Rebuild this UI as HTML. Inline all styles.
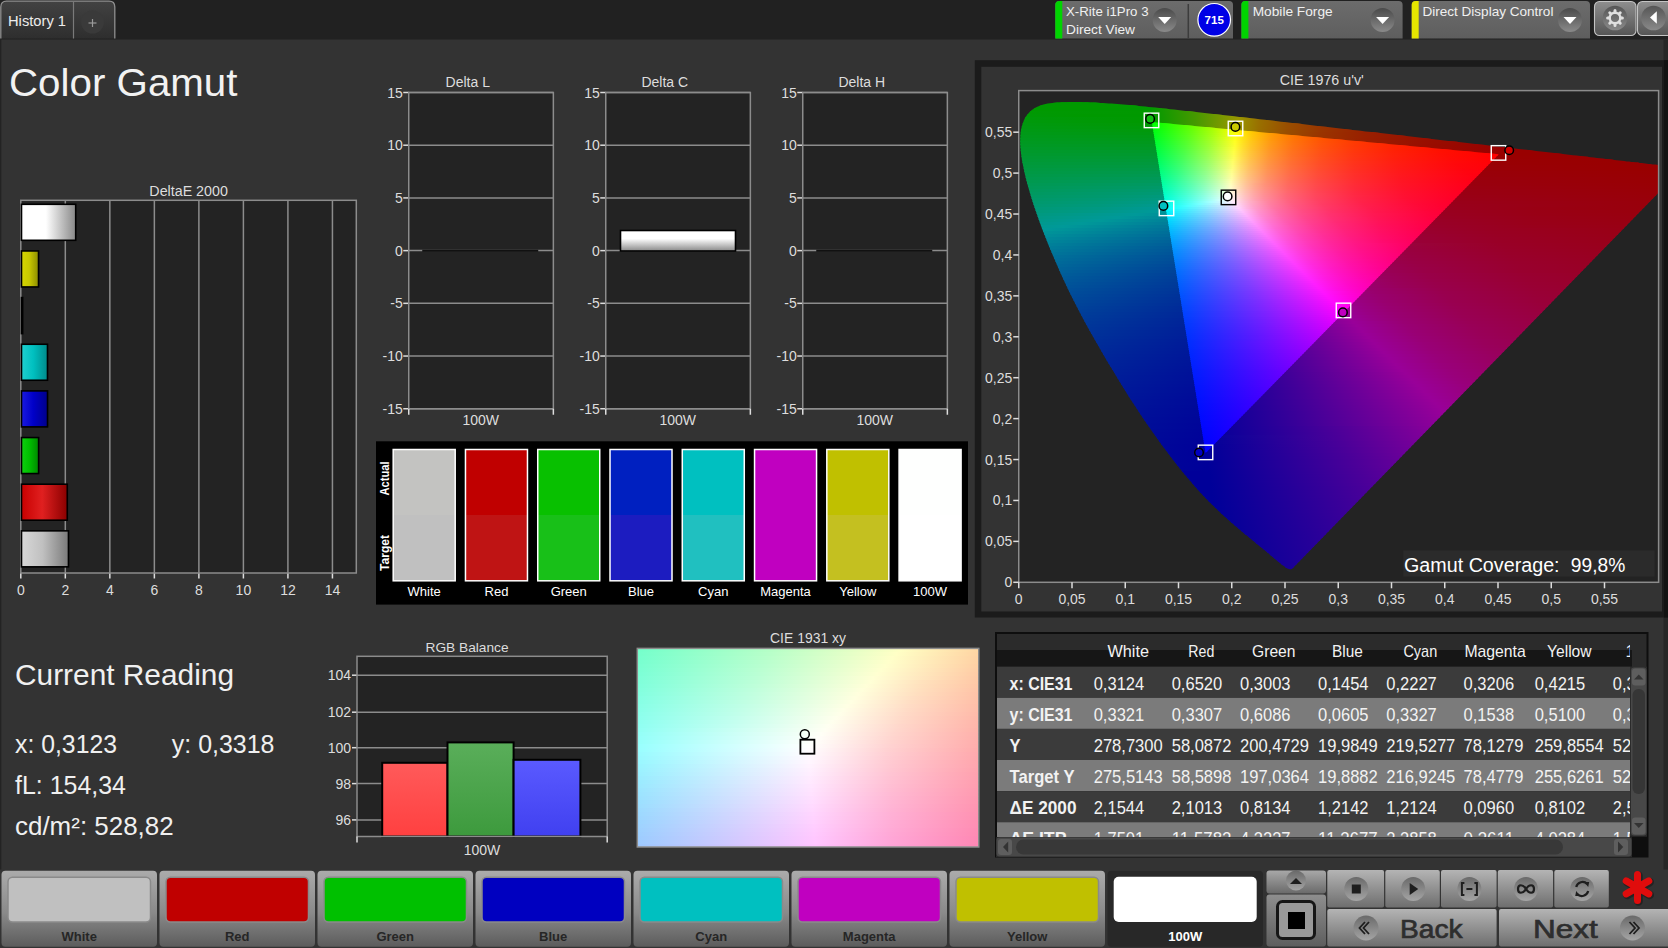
<!DOCTYPE html>
<html><head><meta charset="utf-8"><style>html,body{margin:0;padding:0;background:#333;overflow:hidden}svg{display:block}text{font-family:"Liberation Sans",sans-serif}</style></head>
<body><svg width="1668" height="948" viewBox="0 0 1668 948" font-family="Liberation Sans, sans-serif">
<defs><linearGradient id="g1" x1="0" y1="0" x2="0" y2="1"><stop offset="0" stop-color="#424242"/><stop offset="1" stop-color="#2e2e2e"/></linearGradient><linearGradient id="g2" x1="0" y1="0" x2="0" y2="1"><stop offset="0" stop-color="#6c6c6c"/><stop offset="1" stop-color="#5e5e5e"/></linearGradient><linearGradient id="g3" x1="0" y1="0" x2="0" y2="1"><stop offset="0" stop-color="#4a4a4a"/><stop offset="1" stop-color="#8a8a8a"/></linearGradient><linearGradient id="g4" x1="0" y1="0" x2="0" y2="1"><stop offset="0" stop-color="#6c6c6c"/><stop offset="1" stop-color="#5e5e5e"/></linearGradient><linearGradient id="g5" x1="0" y1="0" x2="0" y2="1"><stop offset="0" stop-color="#4a4a4a"/><stop offset="1" stop-color="#8a8a8a"/></linearGradient><linearGradient id="g6" x1="0" y1="0" x2="0" y2="1"><stop offset="0" stop-color="#6c6c6c"/><stop offset="1" stop-color="#5e5e5e"/></linearGradient><linearGradient id="g7" x1="0" y1="0" x2="0" y2="1"><stop offset="0" stop-color="#4a4a4a"/><stop offset="1" stop-color="#8a8a8a"/></linearGradient><linearGradient id="g8" x1="0" y1="0" x2="0" y2="1"><stop offset="0" stop-color="#8e8e8e"/><stop offset="1" stop-color="#555555"/></linearGradient><linearGradient id="g9" x1="0" y1="0" x2="0" y2="1"><stop offset="0" stop-color="#555"/><stop offset="1" stop-color="#8a8a8a"/></linearGradient><linearGradient id="g10" x1="0" y1="0" x2="1" y2="0"><stop offset="0" stop-color="#ffffff"/><stop offset="0.45" stop-color="#ffffff"/><stop offset="1" stop-color="#888888"/></linearGradient><linearGradient id="g11" x1="0" y1="0" x2="1" y2="0"><stop offset="0" stop-color="#d6d600"/><stop offset="0.45" stop-color="#c8c800"/><stop offset="1" stop-color="#8c8c00"/></linearGradient><linearGradient id="g12" x1="0" y1="0" x2="1" y2="0"><stop offset="0" stop-color="#c000c0"/><stop offset="0.45" stop-color="#c000c0"/><stop offset="1" stop-color="#800080"/></linearGradient><linearGradient id="g13" x1="0" y1="0" x2="1" y2="0"><stop offset="0" stop-color="#20d0d0"/><stop offset="0.45" stop-color="#00c0c0"/><stop offset="1" stop-color="#008a8a"/></linearGradient><linearGradient id="g14" x1="0" y1="0" x2="1" y2="0"><stop offset="0" stop-color="#1a1ae0"/><stop offset="0.45" stop-color="#0000c8"/><stop offset="1" stop-color="#00008a"/></linearGradient><linearGradient id="g15" x1="0" y1="0" x2="1" y2="0"><stop offset="0" stop-color="#10d010"/><stop offset="0.45" stop-color="#00c000"/><stop offset="1" stop-color="#008800"/></linearGradient><linearGradient id="g16" x1="0" y1="0" x2="1" y2="0"><stop offset="0" stop-color="#c80000"/><stop offset="0.45" stop-color="#e02020"/><stop offset="1" stop-color="#8a0000"/></linearGradient><linearGradient id="g17" x1="0" y1="0" x2="1" y2="0"><stop offset="0" stop-color="#d8d8d8"/><stop offset="0.45" stop-color="#c0c0c0"/><stop offset="1" stop-color="#7a7a7a"/></linearGradient><linearGradient id="g18" x1="0" y1="0" x2="0" y2="1"><stop offset="0" stop-color="#ffffff"/><stop offset="0.4" stop-color="#ffffff"/><stop offset="1" stop-color="#8a8a8a"/></linearGradient><linearGradient id="g19" x1="0" y1="0" x2="0" y2="1"><stop offset="0" stop-color="#ff5a5a"/><stop offset="1" stop-color="#ff4040"/></linearGradient><linearGradient id="g20" x1="0" y1="0" x2="0" y2="1"><stop offset="0" stop-color="#5aae5a"/><stop offset="1" stop-color="#3d9a3d"/></linearGradient><linearGradient id="g21" x1="0" y1="0" x2="0" y2="1"><stop offset="0" stop-color="#5a5aff"/><stop offset="1" stop-color="#4040f0"/></linearGradient><clipPath id="tclip"><rect x="996.5" y="634" width="633.5" height="203.2"/></clipPath><clipPath id="hclip"><rect x="995" y="632" width="637" height="40"/></clipPath><linearGradient id="g22" x1="0" y1="0" x2="0" y2="1"><stop offset="0" stop-color="#ababab"/><stop offset="0.55" stop-color="#8a8a8a"/><stop offset="1" stop-color="#5c5c5c"/></linearGradient><linearGradient id="g23" x1="0" y1="0" x2="0" y2="1"><stop offset="0" stop-color="#a8a8a8"/><stop offset="1" stop-color="#6a6a6a"/></linearGradient><linearGradient id="g24" x1="0" y1="0" x2="0" y2="1"><stop offset="0" stop-color="#8e8e8e"/><stop offset="1" stop-color="#5e5e5e"/></linearGradient><linearGradient id="g25" x1="0" y1="0" x2="0" y2="1"><stop offset="0" stop-color="#5a5a5a"/><stop offset="1" stop-color="#b0b0b0"/></linearGradient><linearGradient id="g26" x1="0" y1="0" x2="0" y2="1"><stop offset="0" stop-color="#b4b4b4"/><stop offset="1" stop-color="#6e6e6e"/></linearGradient><clipPath id="plotclip"><rect x="1018.75" y="90.6" width="639.8499999999999" height="491.69999999999993"/></clipPath><clipPath id="locus"><path d="M1292.2 568.7 L1292.2 568.7 L1292.2 568.8 L1292.1 568.8 L1292.0 568.9 L1291.9 568.9 L1291.8 569.0 L1291.7 569.0 L1291.6 569.1 L1291.5 569.1 L1291.4 569.2 L1291.2 569.2 L1291.1 569.3 L1290.9 569.3 L1290.7 569.3 L1290.6 569.3 L1290.4 569.3 L1290.1 569.3 L1289.8 569.3 L1289.5 569.2 L1289.1 569.1 L1288.7 569.0 L1288.2 568.8 L1287.8 568.7 L1287.4 568.5 L1286.9 568.2 L1286.5 568.0 L1286.0 567.7 L1285.6 567.4 L1285.1 567.0 L1284.6 566.6 L1284.0 566.2 L1283.5 565.8 L1282.9 565.4 L1282.3 564.9 L1281.6 564.4 L1280.9 563.8 L1280.1 563.2 L1279.2 562.5 L1278.4 561.8 L1277.4 561.0 L1276.5 560.3 L1275.5 559.4 L1274.5 558.6 L1273.4 557.7 L1272.3 556.7 L1271.1 555.7 L1269.9 554.7 L1268.7 553.6 L1267.4 552.6 L1266.1 551.5 L1264.7 550.3 L1263.2 549.1 L1261.7 547.9 L1260.1 546.6 L1258.4 545.2 L1256.6 543.7 L1254.8 542.2 L1252.9 540.6 L1250.9 539.0 L1248.9 537.3 L1246.8 535.6 L1244.6 533.9 L1242.4 532.0 L1240.1 530.1 L1237.8 528.1 L1235.3 526.0 L1232.8 523.8 L1230.1 521.5 L1227.4 519.1 L1224.6 516.5 L1221.7 513.9 L1218.7 511.0 L1215.6 508.1 L1212.5 505.1 L1209.3 501.9 L1206.0 498.5 L1202.4 494.8 L1198.7 490.7 L1194.7 486.2 L1190.5 481.3 L1186.2 476.2 L1181.6 470.7 L1177.0 464.9 L1172.2 458.7 L1167.3 452.3 L1162.2 445.4 L1157.0 438.3 L1151.7 430.8 L1146.3 423.1 L1140.9 415.0 L1135.4 406.6 L1129.7 397.9 L1124.0 388.8 L1118.3 379.5 L1112.6 370.1 L1106.9 360.7 L1101.3 351.1 L1095.7 341.3 L1090.1 331.4 L1084.6 321.4 L1079.3 311.6 L1074.3 301.8 L1069.5 292.2 L1064.9 282.5 L1060.5 272.9 L1056.4 263.5 L1052.4 254.3 L1048.7 245.4 L1045.3 236.8 L1042.0 228.4 L1039.0 220.3 L1036.3 212.4 L1033.7 204.9 L1031.4 197.8 L1029.4 191.1 L1027.6 184.7 L1026.0 178.7 L1024.6 172.9 L1023.5 167.5 L1022.4 162.4 L1021.6 157.6 L1021.0 153.1 L1020.6 148.9 L1020.3 145.0 L1020.2 141.3 L1020.3 137.8 L1020.5 134.4 L1020.8 131.3 L1021.3 128.4 L1022.0 125.7 L1022.8 123.2 L1023.7 120.9 L1024.7 118.6 L1025.9 116.6 L1027.3 114.8 L1028.7 113.1 L1030.2 111.5 L1031.8 110.1 L1033.5 108.9 L1035.3 107.8 L1037.3 106.8 L1039.2 106.0 L1041.3 105.3 L1043.4 104.6 L1045.5 104.1 L1047.7 103.6 L1050.0 103.3 L1052.3 103.0 L1054.7 102.8 L1057.1 102.6 L1059.5 102.4 L1062.0 102.3 L1064.5 102.2 L1067.0 102.2 L1069.5 102.1 L1072.1 102.1 L1074.6 102.1 L1077.1 102.1 L1079.6 102.1 L1082.1 102.2 L1084.7 102.2 L1087.3 102.3 L1089.9 102.4 L1092.5 102.5 L1095.1 102.6 L1097.7 102.7 L1100.4 102.9 L1103.1 103.0 L1105.9 103.2 L1108.7 103.4 L1111.5 103.6 L1114.4 103.8 L1117.3 104.0 L1120.2 104.3 L1123.2 104.5 L1126.2 104.8 L1129.3 105.0 L1132.4 105.3 L1135.6 105.6 L1138.8 105.9 L1142.0 106.3 L1145.4 106.6 L1148.7 106.9 L1152.1 107.3 L1155.6 107.6 L1159.2 108.0 L1162.8 108.4 L1166.5 108.8 L1170.2 109.2 L1174.0 109.6 L1177.9 110.0 L1181.8 110.4 L1185.8 110.9 L1189.9 111.3 L1194.0 111.8 L1198.2 112.2 L1202.5 112.7 L1206.8 113.2 L1211.2 113.7 L1215.7 114.2 L1220.3 114.7 L1225.0 115.3 L1229.7 115.8 L1234.5 116.3 L1239.4 116.9 L1244.4 117.5 L1249.4 118.0 L1254.5 118.6 L1259.7 119.2 L1264.9 119.8 L1270.3 120.4 L1275.7 121.1 L1281.2 121.7 L1286.8 122.3 L1292.4 123.0 L1298.1 123.6 L1303.9 124.3 L1309.8 125.0 L1315.8 125.7 L1321.8 126.4 L1327.8 127.0 L1333.9 127.8 L1340.1 128.5 L1346.4 129.2 L1352.7 129.9 L1359.0 130.6 L1365.4 131.4 L1371.8 132.1 L1378.3 132.8 L1384.8 133.6 L1391.3 134.3 L1397.8 135.1 L1404.3 135.8 L1410.7 136.6 L1417.1 137.3 L1423.4 138.0 L1429.7 138.8 L1436.0 139.5 L1442.2 140.2 L1448.5 140.9 L1454.7 141.6 L1460.9 142.3 L1467.1 143.0 L1473.2 143.8 L1479.3 144.4 L1485.2 145.1 L1490.9 145.8 L1496.6 146.4 L1502.2 147.1 L1507.7 147.7 L1513.1 148.3 L1518.4 148.9 L1523.6 149.5 L1528.7 150.1 L1533.6 150.7 L1538.5 151.2 L1543.2 151.8 L1547.8 152.3 L1552.3 152.8 L1556.6 153.3 L1560.8 153.8 L1564.9 154.3 L1568.9 154.7 L1572.8 155.2 L1576.6 155.6 L1580.2 156.0 L1583.8 156.4 L1587.2 156.8 L1590.5 157.2 L1593.8 157.6 L1596.9 157.9 L1600.0 158.3 L1602.9 158.6 L1605.8 159.0 L1608.7 159.3 L1611.4 159.6 L1614.1 159.9 L1616.8 160.2 L1619.4 160.5 L1621.9 160.8 L1624.3 161.1 L1626.7 161.4 L1629.1 161.6 L1631.3 161.9 L1633.5 162.2 L1635.6 162.4 L1637.7 162.6 L1639.7 162.9 L1641.6 163.1 L1643.4 163.3 L1645.2 163.5 L1646.9 163.7 L1648.6 163.9 L1650.2 164.0 L1651.6 164.2 L1652.9 164.4 L1654.2 164.5 L1655.4 164.6 L1656.8 164.8 L1658.3 165.0 L1660.0 165.2 L1661.8 165.4 L1663.7 165.6 L1665.6 165.8 L1667.5 166.0 L1669.3 166.3 L1671.1 166.5 L1672.9 166.7 L1674.6 166.9 L1676.2 167.0 L1677.7 167.2 L1678.9 167.4 L1679.9 167.5 L1680.8 167.6 L1681.4 167.6 L1681.9 167.7 L1682.3 167.7 L1682.7 167.8Z"/></clipPath><clipPath id="tri"><path d="M1498.75 154.37 L1151.88 121.95 L1205.59 453.08Z"/></clipPath><linearGradient id="o0" gradientUnits="userSpaceOnUse" x1="1018.75" y1="0" x2="1658.60" y2="0"><stop offset="0.0000" stop-color="#009900"/><stop offset="0.2000" stop-color="#009900"/><stop offset="0.2766" stop-color="#479900"/><stop offset="0.3454" stop-color="#999900"/><stop offset="0.3813" stop-color="#997200"/><stop offset="0.4251" stop-color="#995300"/><stop offset="0.4814" stop-color="#993900"/><stop offset="0.5501" stop-color="#992500"/><stop offset="0.6533" stop-color="#991300"/><stop offset="0.7861" stop-color="#990500"/><stop offset="0.8471" stop-color="#990000"/><stop offset="1.0002" stop-color="#990000"/></linearGradient><linearGradient id="o1" gradientUnits="userSpaceOnUse" x1="1018.75" y1="0" x2="1658.60" y2="0"><stop offset="0.0000" stop-color="#009900"/><stop offset="0.2016" stop-color="#009900"/><stop offset="0.2766" stop-color="#479900"/><stop offset="0.3454" stop-color="#999800"/><stop offset="0.3813" stop-color="#997100"/><stop offset="0.4251" stop-color="#995200"/><stop offset="0.4814" stop-color="#993900"/><stop offset="0.5501" stop-color="#992500"/><stop offset="0.6533" stop-color="#991200"/><stop offset="0.7877" stop-color="#990400"/><stop offset="0.8424" stop-color="#990000"/><stop offset="1.0002" stop-color="#990000"/></linearGradient><linearGradient id="o2" gradientUnits="userSpaceOnUse" x1="1018.75" y1="0" x2="1658.60" y2="0"><stop offset="0.0000" stop-color="#009900"/><stop offset="0.2016" stop-color="#009900"/><stop offset="0.2751" stop-color="#459900"/><stop offset="0.3454" stop-color="#999700"/><stop offset="0.3813" stop-color="#997000"/><stop offset="0.4251" stop-color="#995200"/><stop offset="0.4814" stop-color="#993800"/><stop offset="0.5501" stop-color="#992400"/><stop offset="0.6548" stop-color="#991200"/><stop offset="0.7908" stop-color="#990400"/><stop offset="0.8377" stop-color="#990000"/><stop offset="1.0002" stop-color="#990000"/></linearGradient><linearGradient id="o3" gradientUnits="userSpaceOnUse" x1="1018.75" y1="0" x2="1658.60" y2="0"><stop offset="0.0000" stop-color="#009900"/><stop offset="0.2032" stop-color="#009900"/><stop offset="0.2782" stop-color="#489900"/><stop offset="0.3438" stop-color="#999900"/><stop offset="0.3798" stop-color="#997100"/><stop offset="0.4235" stop-color="#995200"/><stop offset="0.4798" stop-color="#993800"/><stop offset="0.5486" stop-color="#992400"/><stop offset="0.6533" stop-color="#991200"/><stop offset="0.7908" stop-color="#990300"/><stop offset="0.8330" stop-color="#990000"/><stop offset="1.0002" stop-color="#990000"/></linearGradient><linearGradient id="o4" gradientUnits="userSpaceOnUse" x1="1018.75" y1="0" x2="1658.60" y2="0"><stop offset="0.0000" stop-color="#009900"/><stop offset="0.2032" stop-color="#009900"/><stop offset="0.2766" stop-color="#469900"/><stop offset="0.3438" stop-color="#999800"/><stop offset="0.3798" stop-color="#997000"/><stop offset="0.4235" stop-color="#995100"/><stop offset="0.4798" stop-color="#993800"/><stop offset="0.5486" stop-color="#992400"/><stop offset="0.6548" stop-color="#991100"/><stop offset="0.7939" stop-color="#990300"/><stop offset="1.0002" stop-color="#990000"/></linearGradient><linearGradient id="o5" gradientUnits="userSpaceOnUse" x1="1018.75" y1="0" x2="1658.60" y2="0"><stop offset="0.0000" stop-color="#009900"/><stop offset="0.2047" stop-color="#019900"/><stop offset="0.2766" stop-color="#469900"/><stop offset="0.3438" stop-color="#999800"/><stop offset="0.3798" stop-color="#997000"/><stop offset="0.4235" stop-color="#995100"/><stop offset="0.4798" stop-color="#993700"/><stop offset="0.5486" stop-color="#992300"/><stop offset="0.6548" stop-color="#991100"/><stop offset="0.7955" stop-color="#990200"/><stop offset="1.0002" stop-color="#990000"/></linearGradient><linearGradient id="o6" gradientUnits="userSpaceOnUse" x1="1018.75" y1="0" x2="1658.60" y2="0"><stop offset="0.0000" stop-color="#009900"/><stop offset="0.2047" stop-color="#009900"/><stop offset="0.2782" stop-color="#489900"/><stop offset="0.3110" stop-color="#6f9900"/><stop offset="0.3423" stop-color="#999900"/><stop offset="0.3782" stop-color="#997000"/><stop offset="0.4220" stop-color="#995100"/><stop offset="0.4767" stop-color="#993800"/><stop offset="0.5470" stop-color="#992300"/><stop offset="0.6548" stop-color="#991000"/><stop offset="0.7971" stop-color="#990200"/><stop offset="1.0002" stop-color="#990000"/></linearGradient><linearGradient id="o7" gradientUnits="userSpaceOnUse" x1="1018.75" y1="0" x2="1658.60" y2="0"><stop offset="0.0000" stop-color="#009903"/><stop offset="0.2063" stop-color="#019900"/><stop offset="0.2782" stop-color="#489900"/><stop offset="0.3423" stop-color="#999900"/><stop offset="0.3767" stop-color="#997100"/><stop offset="0.4204" stop-color="#995100"/><stop offset="0.4751" stop-color="#993800"/><stop offset="0.5454" stop-color="#992300"/><stop offset="0.6533" stop-color="#991000"/><stop offset="0.7971" stop-color="#990100"/><stop offset="1.0002" stop-color="#990000"/></linearGradient><linearGradient id="o8" gradientUnits="userSpaceOnUse" x1="1018.75" y1="0" x2="1658.60" y2="0"><stop offset="0.0000" stop-color="#009906"/><stop offset="0.1000" stop-color="#009900"/><stop offset="0.2063" stop-color="#009900"/><stop offset="0.2766" stop-color="#469900"/><stop offset="0.3423" stop-color="#999800"/><stop offset="0.3767" stop-color="#997000"/><stop offset="0.4204" stop-color="#995000"/><stop offset="0.4751" stop-color="#993700"/><stop offset="0.5454" stop-color="#992200"/><stop offset="0.6548" stop-color="#990f00"/><stop offset="0.8002" stop-color="#990100"/><stop offset="1.0002" stop-color="#990000"/></linearGradient><linearGradient id="o9" gradientUnits="userSpaceOnUse" x1="1018.75" y1="0" x2="1658.60" y2="0"><stop offset="0.0000" stop-color="#009909"/><stop offset="0.2079" stop-color="#019900"/><stop offset="0.2766" stop-color="#469900"/><stop offset="0.3423" stop-color="#999700"/><stop offset="0.3767" stop-color="#997000"/><stop offset="0.4204" stop-color="#995000"/><stop offset="0.4751" stop-color="#993600"/><stop offset="0.5454" stop-color="#992200"/><stop offset="0.6564" stop-color="#990f00"/><stop offset="0.8018" stop-color="#990000"/><stop offset="1.0002" stop-color="#990000"/></linearGradient><linearGradient id="o10" gradientUnits="userSpaceOnUse" x1="1018.75" y1="0" x2="1658.60" y2="0"><stop offset="0.0000" stop-color="#00990c"/><stop offset="0.2079" stop-color="#009900"/><stop offset="0.2782" stop-color="#479900"/><stop offset="0.3110" stop-color="#709900"/><stop offset="0.3407" stop-color="#999900"/><stop offset="0.3751" stop-color="#997000"/><stop offset="0.4188" stop-color="#995000"/><stop offset="0.4735" stop-color="#993600"/><stop offset="0.5439" stop-color="#992200"/><stop offset="0.6533" stop-color="#990f00"/><stop offset="0.8002" stop-color="#990000"/><stop offset="1.0002" stop-color="#990000"/></linearGradient><linearGradient id="o11" gradientUnits="userSpaceOnUse" x1="1018.75" y1="0" x2="1658.60" y2="0"><stop offset="0.0000" stop-color="#00990f"/><stop offset="0.2094" stop-color="#019903"/><stop offset="0.2782" stop-color="#479900"/><stop offset="0.3407" stop-color="#999800"/><stop offset="0.3751" stop-color="#997000"/><stop offset="0.4188" stop-color="#994f00"/><stop offset="0.4735" stop-color="#993600"/><stop offset="0.5439" stop-color="#992100"/><stop offset="0.6517" stop-color="#990e00"/><stop offset="0.7955" stop-color="#990000"/><stop offset="1.0002" stop-color="#990000"/></linearGradient><linearGradient id="o12" gradientUnits="userSpaceOnUse" x1="1018.75" y1="0" x2="1658.60" y2="0"><stop offset="0.0000" stop-color="#009912"/><stop offset="0.2094" stop-color="#009907"/><stop offset="0.2766" stop-color="#459902"/><stop offset="0.3407" stop-color="#999800"/><stop offset="0.3751" stop-color="#996f00"/><stop offset="0.4188" stop-color="#994f00"/><stop offset="0.4735" stop-color="#993500"/><stop offset="0.5439" stop-color="#992100"/><stop offset="0.6502" stop-color="#990e00"/><stop offset="0.7908" stop-color="#990000"/><stop offset="1.0002" stop-color="#990000"/></linearGradient><linearGradient id="o13" gradientUnits="userSpaceOnUse" x1="1018.75" y1="0" x2="1658.60" y2="0"><stop offset="0.0000" stop-color="#009915"/><stop offset="0.2110" stop-color="#01990b"/><stop offset="0.2766" stop-color="#459907"/><stop offset="0.3407" stop-color="#999701"/><stop offset="0.3751" stop-color="#996e00"/><stop offset="0.4188" stop-color="#994e00"/><stop offset="0.4735" stop-color="#993500"/><stop offset="0.5439" stop-color="#992000"/><stop offset="0.6486" stop-color="#990e00"/><stop offset="0.7861" stop-color="#990000"/><stop offset="1.0002" stop-color="#990000"/></linearGradient><linearGradient id="o14" gradientUnits="userSpaceOnUse" x1="1018.75" y1="0" x2="1658.60" y2="0"><stop offset="0.0000" stop-color="#009918"/><stop offset="0.2110" stop-color="#00990f"/><stop offset="0.2782" stop-color="#47990b"/><stop offset="0.3391" stop-color="#999906"/><stop offset="0.3735" stop-color="#996f02"/><stop offset="0.4173" stop-color="#994e00"/><stop offset="0.4720" stop-color="#993400"/><stop offset="0.5408" stop-color="#992000"/><stop offset="0.6455" stop-color="#990e00"/><stop offset="0.7814" stop-color="#990000"/><stop offset="1.0002" stop-color="#990000"/></linearGradient><linearGradient id="o15" gradientUnits="userSpaceOnUse" x1="1018.75" y1="0" x2="1658.60" y2="0"><stop offset="0.0000" stop-color="#00991b"/><stop offset="0.2110" stop-color="#009914"/><stop offset="0.2766" stop-color="#459910"/><stop offset="0.3391" stop-color="#99980c"/><stop offset="0.3735" stop-color="#996e06"/><stop offset="0.4157" stop-color="#994e02"/><stop offset="0.4704" stop-color="#993400"/><stop offset="0.5408" stop-color="#992000"/><stop offset="0.6423" stop-color="#990e00"/><stop offset="0.7767" stop-color="#990000"/><stop offset="1.0002" stop-color="#990000"/></linearGradient><linearGradient id="o16" gradientUnits="userSpaceOnUse" x1="1018.75" y1="0" x2="1658.60" y2="0"><stop offset="0.0000" stop-color="#00991e"/><stop offset="0.2125" stop-color="#009918"/><stop offset="0.2766" stop-color="#449915"/><stop offset="0.3391" stop-color="#999711"/><stop offset="0.3548" stop-color="#99820e"/><stop offset="0.3735" stop-color="#996e0b"/><stop offset="0.4157" stop-color="#994e06"/><stop offset="0.4704" stop-color="#993402"/><stop offset="0.5408" stop-color="#991f00"/><stop offset="0.6408" stop-color="#990e00"/><stop offset="0.7721" stop-color="#990000"/><stop offset="1.0002" stop-color="#990000"/></linearGradient><linearGradient id="o17" gradientUnits="userSpaceOnUse" x1="1018.75" y1="0" x2="1658.60" y2="0"><stop offset="0.0000" stop-color="#009921"/><stop offset="0.2125" stop-color="#00991c"/><stop offset="0.2438" stop-color="#1f991b"/><stop offset="0.2782" stop-color="#46991a"/><stop offset="0.3094" stop-color="#6f9918"/><stop offset="0.3376" stop-color="#999917"/><stop offset="0.3532" stop-color="#998313"/><stop offset="0.3720" stop-color="#996e0f"/><stop offset="0.4142" stop-color="#994e09"/><stop offset="0.4689" stop-color="#993404"/><stop offset="0.5392" stop-color="#991f01"/><stop offset="0.6376" stop-color="#990e00"/><stop offset="0.7674" stop-color="#990000"/><stop offset="1.0002" stop-color="#990000"/></linearGradient><linearGradient id="o18" gradientUnits="userSpaceOnUse" x1="1018.75" y1="0" x2="1658.60" y2="0"><stop offset="0.0000" stop-color="#009924"/><stop offset="0.2141" stop-color="#009921"/><stop offset="0.2782" stop-color="#46991f"/><stop offset="0.3376" stop-color="#99981d"/><stop offset="0.3532" stop-color="#998218"/><stop offset="0.3720" stop-color="#996e13"/><stop offset="0.4142" stop-color="#994d0d"/><stop offset="0.4689" stop-color="#993307"/><stop offset="0.5392" stop-color="#991f03"/><stop offset="0.6376" stop-color="#990d00"/><stop offset="0.7642" stop-color="#990000"/><stop offset="1.0002" stop-color="#990000"/></linearGradient><linearGradient id="o19" gradientUnits="userSpaceOnUse" x1="1018.75" y1="0" x2="1658.60" y2="0"><stop offset="0.0000" stop-color="#009928"/><stop offset="0.2141" stop-color="#009925"/><stop offset="0.2766" stop-color="#449924"/><stop offset="0.3376" stop-color="#999822"/><stop offset="0.3532" stop-color="#99821d"/><stop offset="0.3720" stop-color="#996d18"/><stop offset="0.4142" stop-color="#994c10"/><stop offset="0.4689" stop-color="#99320a"/><stop offset="0.5392" stop-color="#991e05"/><stop offset="0.6345" stop-color="#990d01"/><stop offset="0.7596" stop-color="#990000"/><stop offset="1.0002" stop-color="#990000"/></linearGradient><linearGradient id="o20" gradientUnits="userSpaceOnUse" x1="1018.75" y1="0" x2="1658.60" y2="0"><stop offset="0.0000" stop-color="#00992b"/><stop offset="0.2157" stop-color="#00992a"/><stop offset="0.2766" stop-color="#449929"/><stop offset="0.3376" stop-color="#999728"/><stop offset="0.3532" stop-color="#998122"/><stop offset="0.3720" stop-color="#996c1c"/><stop offset="0.4142" stop-color="#994c13"/><stop offset="0.4689" stop-color="#99320c"/><stop offset="0.5392" stop-color="#991d07"/><stop offset="0.6330" stop-color="#990d02"/><stop offset="0.7549" stop-color="#990000"/><stop offset="1.0002" stop-color="#990000"/></linearGradient><linearGradient id="o21" gradientUnits="userSpaceOnUse" x1="1018.75" y1="0" x2="1658.60" y2="0"><stop offset="0.0000" stop-color="#00992e"/><stop offset="0.2157" stop-color="#00992e"/><stop offset="0.2782" stop-color="#46992e"/><stop offset="0.3079" stop-color="#6e992e"/><stop offset="0.3360" stop-color="#99992e"/><stop offset="0.3516" stop-color="#998227"/><stop offset="0.3688" stop-color="#996e22"/><stop offset="0.4126" stop-color="#994c17"/><stop offset="0.4673" stop-color="#99320f"/><stop offset="0.5361" stop-color="#991e09"/><stop offset="0.6298" stop-color="#990d04"/><stop offset="0.7502" stop-color="#990000"/><stop offset="1.0002" stop-color="#990000"/></linearGradient><linearGradient id="o22" gradientUnits="userSpaceOnUse" x1="1018.75" y1="0" x2="1658.60" y2="0"><stop offset="0.0000" stop-color="#009932"/><stop offset="0.2172" stop-color="#009933"/><stop offset="0.2782" stop-color="#459934"/><stop offset="0.3360" stop-color="#999834"/><stop offset="0.3516" stop-color="#99812d"/><stop offset="0.3688" stop-color="#996e26"/><stop offset="0.4126" stop-color="#994b1b"/><stop offset="0.4673" stop-color="#993112"/><stop offset="0.5361" stop-color="#991d0b"/><stop offset="0.6283" stop-color="#990d06"/><stop offset="0.7455" stop-color="#990001"/><stop offset="1.0002" stop-color="#990000"/></linearGradient><linearGradient id="o23" gradientUnits="userSpaceOnUse" x1="1018.75" y1="0" x2="1658.60" y2="0"><stop offset="0.0000" stop-color="#009935"/><stop offset="0.2172" stop-color="#009938"/><stop offset="0.2766" stop-color="#439939"/><stop offset="0.3360" stop-color="#99973a"/><stop offset="0.3516" stop-color="#998032"/><stop offset="0.3688" stop-color="#996d2b"/><stop offset="0.4110" stop-color="#994b1e"/><stop offset="0.4657" stop-color="#993115"/><stop offset="0.5361" stop-color="#991c0d"/><stop offset="0.6251" stop-color="#990d07"/><stop offset="0.7408" stop-color="#990003"/><stop offset="1.0002" stop-color="#990000"/></linearGradient><linearGradient id="o24" gradientUnits="userSpaceOnUse" x1="1018.75" y1="0" x2="1658.60" y2="0"><stop offset="0.0000" stop-color="#009939"/><stop offset="0.2188" stop-color="#00993d"/><stop offset="0.2798" stop-color="#47993f"/><stop offset="0.3079" stop-color="#6f9940"/><stop offset="0.3345" stop-color="#999941"/><stop offset="0.3501" stop-color="#998238"/><stop offset="0.3673" stop-color="#996e30"/><stop offset="0.4095" stop-color="#994c22"/><stop offset="0.4642" stop-color="#993118"/><stop offset="0.5345" stop-color="#991c10"/><stop offset="0.6236" stop-color="#990c09"/><stop offset="0.7361" stop-color="#990004"/><stop offset="1.0002" stop-color="#990000"/></linearGradient><linearGradient id="o25" gradientUnits="userSpaceOnUse" x1="1018.75" y1="0" x2="1658.60" y2="0"><stop offset="0.0000" stop-color="#00993c"/><stop offset="0.2188" stop-color="#009942"/><stop offset="0.2782" stop-color="#459945"/><stop offset="0.3345" stop-color="#999848"/><stop offset="0.3501" stop-color="#99813d"/><stop offset="0.3673" stop-color="#996d35"/><stop offset="0.4095" stop-color="#994b26"/><stop offset="0.4642" stop-color="#99301b"/><stop offset="0.5345" stop-color="#991c12"/><stop offset="0.6205" stop-color="#990c0b"/><stop offset="0.7314" stop-color="#990006"/><stop offset="1.0002" stop-color="#990000"/></linearGradient><linearGradient id="o26" gradientUnits="userSpaceOnUse" x1="1018.75" y1="0" x2="1658.60" y2="0"><stop offset="0.0000" stop-color="#009940"/><stop offset="0.2204" stop-color="#009947"/><stop offset="0.2782" stop-color="#45994b"/><stop offset="0.3345" stop-color="#99984e"/><stop offset="0.3501" stop-color="#998043"/><stop offset="0.3673" stop-color="#996c3a"/><stop offset="0.4095" stop-color="#994a2a"/><stop offset="0.4642" stop-color="#99301d"/><stop offset="0.5329" stop-color="#991b14"/><stop offset="0.6189" stop-color="#990c0d"/><stop offset="0.7267" stop-color="#990007"/><stop offset="1.0002" stop-color="#990000"/></linearGradient><linearGradient id="o27" gradientUnits="userSpaceOnUse" x1="1018.75" y1="0" x2="1658.60" y2="0"><stop offset="0.0000" stop-color="#009943"/><stop offset="0.2204" stop-color="#00994d"/><stop offset="0.2766" stop-color="#429950"/><stop offset="0.3345" stop-color="#999754"/><stop offset="0.3501" stop-color="#997f49"/><stop offset="0.3673" stop-color="#996b3e"/><stop offset="0.4095" stop-color="#99492d"/><stop offset="0.4642" stop-color="#992f20"/><stop offset="0.5329" stop-color="#991b16"/><stop offset="0.6158" stop-color="#990c0f"/><stop offset="0.7220" stop-color="#990009"/><stop offset="1.0002" stop-color="#990001"/></linearGradient><linearGradient id="o28" gradientUnits="userSpaceOnUse" x1="1018.75" y1="0" x2="1658.60" y2="0"><stop offset="0.0000" stop-color="#009947"/><stop offset="0.2219" stop-color="#009952"/><stop offset="0.2813" stop-color="#489957"/><stop offset="0.3329" stop-color="#99995c"/><stop offset="0.3485" stop-color="#99814f"/><stop offset="0.3657" stop-color="#996c44"/><stop offset="0.4079" stop-color="#994932"/><stop offset="0.4626" stop-color="#992f23"/><stop offset="0.5314" stop-color="#991b19"/><stop offset="0.6142" stop-color="#990c11"/><stop offset="0.7174" stop-color="#99000a"/><stop offset="1.0002" stop-color="#990002"/></linearGradient><linearGradient id="o29" gradientUnits="userSpaceOnUse" x1="1018.75" y1="0" x2="1658.60" y2="0"><stop offset="0.0000" stop-color="#00994b"/><stop offset="0.2219" stop-color="#009958"/><stop offset="0.2782" stop-color="#44995d"/><stop offset="0.3329" stop-color="#999863"/><stop offset="0.3485" stop-color="#998055"/><stop offset="0.3657" stop-color="#996b49"/><stop offset="0.4079" stop-color="#994936"/><stop offset="0.4610" stop-color="#992f27"/><stop offset="0.5314" stop-color="#991a1b"/><stop offset="0.6111" stop-color="#990c13"/><stop offset="0.7127" stop-color="#99000c"/><stop offset="1.0002" stop-color="#990003"/></linearGradient><linearGradient id="o30" gradientUnits="userSpaceOnUse" x1="1018.75" y1="0" x2="1658.60" y2="0"><stop offset="0.0000" stop-color="#00994e"/><stop offset="0.2235" stop-color="#00995d"/><stop offset="0.2798" stop-color="#469964"/><stop offset="0.3329" stop-color="#99976a"/><stop offset="0.3485" stop-color="#997f5b"/><stop offset="0.3657" stop-color="#996a4e"/><stop offset="0.4063" stop-color="#99493a"/><stop offset="0.4610" stop-color="#992e2a"/><stop offset="0.5314" stop-color="#99191d"/><stop offset="0.6095" stop-color="#990b15"/><stop offset="0.7080" stop-color="#99000e"/><stop offset="1.0002" stop-color="#990003"/></linearGradient><linearGradient id="o31" gradientUnits="userSpaceOnUse" x1="1018.75" y1="0" x2="1658.60" y2="0"><stop offset="0.0000" stop-color="#009952"/><stop offset="0.2235" stop-color="#009963"/><stop offset="0.2798" stop-color="#46996a"/><stop offset="0.3063" stop-color="#6e996e"/><stop offset="0.3313" stop-color="#999972"/><stop offset="0.3470" stop-color="#998062"/><stop offset="0.3641" stop-color="#996b55"/><stop offset="0.4048" stop-color="#99493f"/><stop offset="0.4579" stop-color="#992e2d"/><stop offset="0.5282" stop-color="#991a20"/><stop offset="0.6064" stop-color="#990b17"/><stop offset="0.7033" stop-color="#99000f"/><stop offset="1.0002" stop-color="#990004"/></linearGradient><linearGradient id="o32" gradientUnits="userSpaceOnUse" x1="1018.75" y1="0" x2="1658.60" y2="0"><stop offset="0.0000" stop-color="#009956"/><stop offset="0.2251" stop-color="#009969"/><stop offset="0.2813" stop-color="#489971"/><stop offset="0.3313" stop-color="#99987a"/><stop offset="0.3454" stop-color="#99816a"/><stop offset="0.3626" stop-color="#996c5b"/><stop offset="0.4048" stop-color="#994843"/><stop offset="0.4579" stop-color="#992e30"/><stop offset="0.5282" stop-color="#991922"/><stop offset="0.6048" stop-color="#990b19"/><stop offset="0.7002" stop-color="#990011"/><stop offset="1.0002" stop-color="#990005"/></linearGradient><linearGradient id="o33" gradientUnits="userSpaceOnUse" x1="1018.75" y1="0" x2="1658.60" y2="0"><stop offset="0.0000" stop-color="#00995a"/><stop offset="0.2251" stop-color="#00996f"/><stop offset="0.2798" stop-color="#459978"/><stop offset="0.3313" stop-color="#999881"/><stop offset="0.3454" stop-color="#998170"/><stop offset="0.3626" stop-color="#996b60"/><stop offset="0.4048" stop-color="#994747"/><stop offset="0.4579" stop-color="#992d33"/><stop offset="0.5282" stop-color="#991824"/><stop offset="0.6033" stop-color="#990b1a"/><stop offset="0.6955" stop-color="#990013"/><stop offset="1.0002" stop-color="#990006"/></linearGradient><linearGradient id="o34" gradientUnits="userSpaceOnUse" x1="1018.75" y1="0" x2="1658.60" y2="0"><stop offset="0.0000" stop-color="#00995e"/><stop offset="0.2266" stop-color="#009975"/><stop offset="0.2798" stop-color="#45997f"/><stop offset="0.3313" stop-color="#999788"/><stop offset="0.3454" stop-color="#998076"/><stop offset="0.3626" stop-color="#996a66"/><stop offset="0.4048" stop-color="#99474b"/><stop offset="0.4579" stop-color="#992c36"/><stop offset="0.5282" stop-color="#991827"/><stop offset="0.6017" stop-color="#990a1c"/><stop offset="0.6908" stop-color="#990014"/><stop offset="1.0002" stop-color="#990007"/></linearGradient><linearGradient id="o35" gradientUnits="userSpaceOnUse" x1="1018.75" y1="0" x2="1658.60" y2="0"><stop offset="0.0000" stop-color="#009962"/><stop offset="0.1250" stop-color="#00996e"/><stop offset="0.2266" stop-color="#00997c"/><stop offset="0.2813" stop-color="#479986"/><stop offset="0.3063" stop-color="#6f998c"/><stop offset="0.3298" stop-color="#999992"/><stop offset="0.3438" stop-color="#99817f"/><stop offset="0.3610" stop-color="#996b6d"/><stop offset="0.4017" stop-color="#994850"/><stop offset="0.4548" stop-color="#992d3a"/><stop offset="0.5251" stop-color="#99182a"/><stop offset="0.5970" stop-color="#990b1f"/><stop offset="0.6861" stop-color="#990016"/><stop offset="1.0002" stop-color="#990008"/></linearGradient><linearGradient id="o36" gradientUnits="userSpaceOnUse" x1="1018.75" y1="0" x2="1658.60" y2="0"><stop offset="0.0000" stop-color="#009966"/><stop offset="0.1250" stop-color="#009973"/><stop offset="0.2282" stop-color="#019982"/><stop offset="0.2782" stop-color="#42998d"/><stop offset="0.3251" stop-color="#919999"/><stop offset="0.3313" stop-color="#999597"/><stop offset="0.3454" stop-color="#997e83"/><stop offset="0.3626" stop-color="#996871"/><stop offset="0.4032" stop-color="#994654"/><stop offset="0.4564" stop-color="#992b3d"/><stop offset="0.5267" stop-color="#99172c"/><stop offset="0.6814" stop-color="#990018"/><stop offset="1.0002" stop-color="#990009"/></linearGradient><linearGradient id="o37" gradientUnits="userSpaceOnUse" x1="1018.75" y1="0" x2="1658.60" y2="0"><stop offset="0.0000" stop-color="#00996a"/><stop offset="0.1250" stop-color="#009978"/><stop offset="0.2282" stop-color="#009989"/><stop offset="0.2626" stop-color="#2c9990"/><stop offset="0.2969" stop-color="#609999"/><stop offset="0.3360" stop-color="#998c97"/><stop offset="0.3501" stop-color="#997684"/><stop offset="0.3673" stop-color="#996272"/><stop offset="0.4095" stop-color="#994154"/><stop offset="0.4642" stop-color="#99283e"/><stop offset="0.5345" stop-color="#99142c"/><stop offset="0.6767" stop-color="#99001a"/><stop offset="1.0002" stop-color="#99000a"/></linearGradient><linearGradient id="o38" gradientUnits="userSpaceOnUse" x1="1018.75" y1="0" x2="1658.60" y2="0"><stop offset="0.0000" stop-color="#00996e"/><stop offset="0.1266" stop-color="#00997d"/><stop offset="0.2297" stop-color="#019990"/><stop offset="0.2688" stop-color="#349999"/><stop offset="0.3407" stop-color="#998397"/><stop offset="0.3563" stop-color="#996e83"/><stop offset="0.3735" stop-color="#995b72"/><stop offset="0.4157" stop-color="#993d55"/><stop offset="0.4704" stop-color="#99253f"/><stop offset="0.5423" stop-color="#99122d"/><stop offset="0.6720" stop-color="#99001c"/><stop offset="1.0002" stop-color="#99000a"/></linearGradient><linearGradient id="o39" gradientUnits="userSpaceOnUse" x1="1018.75" y1="0" x2="1658.60" y2="0"><stop offset="0.0000" stop-color="#009973"/><stop offset="0.1266" stop-color="#009983"/><stop offset="0.2297" stop-color="#009997"/><stop offset="0.2626" stop-color="#299399"/><stop offset="0.3454" stop-color="#997b97"/><stop offset="0.3782" stop-color="#995673"/><stop offset="0.4220" stop-color="#993856"/><stop offset="0.4782" stop-color="#99223f"/><stop offset="0.5501" stop-color="#99102e"/><stop offset="0.6673" stop-color="#99001e"/><stop offset="0.8111" stop-color="#990013"/><stop offset="1.0002" stop-color="#99000b"/></linearGradient><linearGradient id="o40" gradientUnits="userSpaceOnUse" x1="1018.75" y1="0" x2="1658.60" y2="0"><stop offset="0.0000" stop-color="#009977"/><stop offset="0.1157" stop-color="#009986"/><stop offset="0.2110" stop-color="#009999"/><stop offset="0.2313" stop-color="#019499"/><stop offset="0.3501" stop-color="#997497"/><stop offset="0.3845" stop-color="#995073"/><stop offset="0.4282" stop-color="#993456"/><stop offset="0.4845" stop-color="#991f40"/><stop offset="0.5579" stop-color="#990e2f"/><stop offset="0.6627" stop-color="#990020"/><stop offset="0.8080" stop-color="#990015"/><stop offset="1.0002" stop-color="#99000c"/></linearGradient><linearGradient id="o41" gradientUnits="userSpaceOnUse" x1="1018.75" y1="0" x2="1658.60" y2="0"><stop offset="0.0000" stop-color="#00997b"/><stop offset="0.1829" stop-color="#009999"/><stop offset="0.2313" stop-color="#008e99"/><stop offset="0.2860" stop-color="#418099"/><stop offset="0.3548" stop-color="#996d97"/><stop offset="0.3892" stop-color="#994b74"/><stop offset="0.4345" stop-color="#993157"/><stop offset="0.4923" stop-color="#991c41"/><stop offset="0.5658" stop-color="#990c2f"/><stop offset="0.6580" stop-color="#990022"/><stop offset="0.8033" stop-color="#990016"/><stop offset="1.0002" stop-color="#99000d"/></linearGradient><linearGradient id="o42" gradientUnits="userSpaceOnUse" x1="1018.75" y1="0" x2="1658.60" y2="0"><stop offset="0.0000" stop-color="#009980"/><stop offset="0.1547" stop-color="#009999"/><stop offset="0.2329" stop-color="#018899"/><stop offset="0.2907" stop-color="#447999"/><stop offset="0.3595" stop-color="#996698"/><stop offset="0.3907" stop-color="#994977"/><stop offset="0.4314" stop-color="#99315c"/><stop offset="0.4814" stop-color="#991f47"/><stop offset="0.5454" stop-color="#990f36"/><stop offset="0.6533" stop-color="#990024"/><stop offset="0.8002" stop-color="#990018"/><stop offset="1.0002" stop-color="#99000e"/></linearGradient><linearGradient id="o43" gradientUnits="userSpaceOnUse" x1="1018.75" y1="0" x2="1658.60" y2="0"><stop offset="0.0000" stop-color="#009984"/><stop offset="0.1266" stop-color="#009999"/><stop offset="0.2329" stop-color="#008299"/><stop offset="0.2923" stop-color="#437499"/><stop offset="0.3641" stop-color="#996098"/><stop offset="0.3970" stop-color="#994477"/><stop offset="0.4376" stop-color="#992e5c"/><stop offset="0.4876" stop-color="#991c48"/><stop offset="0.5501" stop-color="#990e37"/><stop offset="0.6486" stop-color="#990027"/><stop offset="0.7971" stop-color="#990019"/><stop offset="1.0002" stop-color="#99000f"/></linearGradient><linearGradient id="o44" gradientUnits="userSpaceOnUse" x1="1018.75" y1="0" x2="1658.60" y2="0"><stop offset="0.0000" stop-color="#009989"/><stop offset="0.0985" stop-color="#009999"/><stop offset="0.2329" stop-color="#007d99"/><stop offset="0.2907" stop-color="#3e6f99"/><stop offset="0.3688" stop-color="#995a98"/><stop offset="0.4017" stop-color="#994077"/><stop offset="0.4423" stop-color="#992b5e"/><stop offset="0.4923" stop-color="#991a49"/><stop offset="0.5548" stop-color="#990c38"/><stop offset="0.6439" stop-color="#990029"/><stop offset="0.7939" stop-color="#99001a"/><stop offset="1.0002" stop-color="#990010"/></linearGradient><linearGradient id="o45" gradientUnits="userSpaceOnUse" x1="1018.75" y1="0" x2="1658.60" y2="0"><stop offset="0.0000" stop-color="#00998d"/><stop offset="0.0703" stop-color="#009999"/><stop offset="0.2344" stop-color="#007799"/><stop offset="0.2985" stop-color="#446899"/><stop offset="0.3735" stop-color="#995598"/><stop offset="0.4063" stop-color="#993c78"/><stop offset="0.4470" stop-color="#99285f"/><stop offset="0.4986" stop-color="#99184a"/><stop offset="0.5611" stop-color="#990b39"/><stop offset="0.6408" stop-color="#99002b"/><stop offset="0.7924" stop-color="#99001c"/><stop offset="1.0002" stop-color="#990011"/></linearGradient><linearGradient id="o46" gradientUnits="userSpaceOnUse" x1="1018.75" y1="0" x2="1658.60" y2="0"><stop offset="0.0000" stop-color="#009992"/><stop offset="0.0422" stop-color="#009999"/><stop offset="0.2344" stop-color="#007399"/><stop offset="0.2969" stop-color="#3f6499"/><stop offset="0.3782" stop-color="#994f98"/><stop offset="0.4110" stop-color="#993879"/><stop offset="0.4532" stop-color="#99255f"/><stop offset="0.5032" stop-color="#99164b"/><stop offset="0.5658" stop-color="#99093a"/><stop offset="0.6345" stop-color="#99002e"/><stop offset="0.7377" stop-color="#990022"/><stop offset="1.0002" stop-color="#990012"/></linearGradient><linearGradient id="o47" gradientUnits="userSpaceOnUse" x1="1018.75" y1="0" x2="1658.60" y2="0"><stop offset="0.0000" stop-color="#009997"/><stop offset="0.0703" stop-color="#008f99"/><stop offset="0.2360" stop-color="#006e99"/><stop offset="0.3048" stop-color="#455e99"/><stop offset="0.3829" stop-color="#994a98"/><stop offset="0.4173" stop-color="#993479"/><stop offset="0.4579" stop-color="#992260"/><stop offset="0.5079" stop-color="#99144c"/><stop offset="0.5704" stop-color="#99083b"/><stop offset="0.6298" stop-color="#990030"/><stop offset="0.7408" stop-color="#990023"/><stop offset="1.0002" stop-color="#990012"/></linearGradient><linearGradient id="o48" gradientUnits="userSpaceOnUse" x1="1018.75" y1="0" x2="1658.60" y2="0"><stop offset="0.0000" stop-color="#009799"/><stop offset="0.2360" stop-color="#006a99"/><stop offset="0.3032" stop-color="#415b99"/><stop offset="0.3876" stop-color="#994698"/><stop offset="0.4220" stop-color="#993179"/><stop offset="0.4626" stop-color="#992061"/><stop offset="0.5142" stop-color="#99124d"/><stop offset="0.5767" stop-color="#99063c"/><stop offset="0.6267" stop-color="#990033"/><stop offset="0.7455" stop-color="#990024"/><stop offset="1.0002" stop-color="#990013"/></linearGradient><linearGradient id="o49" gradientUnits="userSpaceOnUse" x1="1018.75" y1="0" x2="1658.60" y2="0"><stop offset="0.0000" stop-color="#009299"/><stop offset="0.2376" stop-color="#006599"/><stop offset="0.3110" stop-color="#465599"/><stop offset="0.3923" stop-color="#994198"/><stop offset="0.4267" stop-color="#992d7a"/><stop offset="0.4689" stop-color="#991d61"/><stop offset="0.5189" stop-color="#99104e"/><stop offset="0.5814" stop-color="#99053d"/><stop offset="0.6220" stop-color="#990035"/><stop offset="0.7502" stop-color="#990025"/><stop offset="1.0002" stop-color="#990014"/></linearGradient><linearGradient id="o50" gradientUnits="userSpaceOnUse" x1="1018.75" y1="0" x2="1658.60" y2="0"><stop offset="0.0000" stop-color="#008e99"/><stop offset="0.2376" stop-color="#006299"/><stop offset="0.3094" stop-color="#425299"/><stop offset="0.3970" stop-color="#993d98"/><stop offset="0.4314" stop-color="#992a7b"/><stop offset="0.4735" stop-color="#991b62"/><stop offset="0.5236" stop-color="#990e4f"/><stop offset="0.5861" stop-color="#99043e"/><stop offset="0.6173" stop-color="#990038"/><stop offset="0.7533" stop-color="#990026"/><stop offset="1.0002" stop-color="#990015"/></linearGradient><linearGradient id="o51" gradientUnits="userSpaceOnUse" x1="1018.75" y1="0" x2="1658.60" y2="0"><stop offset="0.0000" stop-color="#008999"/><stop offset="0.2391" stop-color="#005e99"/><stop offset="0.3173" stop-color="#474d99"/><stop offset="0.4017" stop-color="#993998"/><stop offset="0.4360" stop-color="#99277b"/><stop offset="0.4782" stop-color="#991963"/><stop offset="0.5298" stop-color="#990c4f"/><stop offset="0.5908" stop-color="#99033f"/><stop offset="0.7564" stop-color="#990027"/><stop offset="1.0002" stop-color="#990016"/></linearGradient><linearGradient id="o52" gradientUnits="userSpaceOnUse" x1="1018.75" y1="0" x2="1658.60" y2="0"><stop offset="0.0000" stop-color="#008599"/><stop offset="0.2391" stop-color="#005a99"/><stop offset="0.3157" stop-color="#434a99"/><stop offset="0.4063" stop-color="#993598"/><stop offset="0.4407" stop-color="#99257c"/><stop offset="0.4829" stop-color="#991764"/><stop offset="0.5345" stop-color="#990b50"/><stop offset="0.5955" stop-color="#990140"/><stop offset="0.7596" stop-color="#990028"/><stop offset="1.0002" stop-color="#990017"/></linearGradient><linearGradient id="o53" gradientUnits="userSpaceOnUse" x1="1018.75" y1="0" x2="1658.60" y2="0"><stop offset="0.0000" stop-color="#008299"/><stop offset="0.2407" stop-color="#005799"/><stop offset="0.3220" stop-color="#464699"/><stop offset="0.4110" stop-color="#993298"/><stop offset="0.4454" stop-color="#99227c"/><stop offset="0.4876" stop-color="#991565"/><stop offset="0.5392" stop-color="#990951"/><stop offset="0.6001" stop-color="#990041"/><stop offset="0.7627" stop-color="#990029"/><stop offset="1.0002" stop-color="#990018"/></linearGradient><linearGradient id="o54" gradientUnits="userSpaceOnUse" x1="1018.75" y1="0" x2="1658.60" y2="0"><stop offset="0.0000" stop-color="#007e99"/><stop offset="0.2407" stop-color="#005499"/><stop offset="0.3220" stop-color="#444399"/><stop offset="0.4157" stop-color="#992e98"/><stop offset="0.4517" stop-color="#991f7c"/><stop offset="0.4939" stop-color="#991265"/><stop offset="0.5439" stop-color="#990852"/><stop offset="0.6048" stop-color="#990042"/><stop offset="0.7658" stop-color="#99002a"/><stop offset="1.0002" stop-color="#990019"/></linearGradient><linearGradient id="o55" gradientUnits="userSpaceOnUse" x1="1018.75" y1="0" x2="1658.60" y2="0"><stop offset="0.0000" stop-color="#007a99"/><stop offset="0.2422" stop-color="#005099"/><stop offset="0.3282" stop-color="#473f99"/><stop offset="0.4204" stop-color="#992b98"/><stop offset="0.4564" stop-color="#991c7d"/><stop offset="0.4986" stop-color="#991066"/><stop offset="0.5486" stop-color="#990653"/><stop offset="0.6095" stop-color="#990043"/><stop offset="0.7705" stop-color="#99002b"/><stop offset="1.0002" stop-color="#99001a"/></linearGradient><linearGradient id="o56" gradientUnits="userSpaceOnUse" x1="1018.75" y1="0" x2="1658.60" y2="0"><stop offset="0.0000" stop-color="#007799"/><stop offset="0.2422" stop-color="#004e99"/><stop offset="0.3266" stop-color="#433d99"/><stop offset="0.4251" stop-color="#992898"/><stop offset="0.4610" stop-color="#991a7d"/><stop offset="0.5032" stop-color="#990f67"/><stop offset="0.5845" stop-color="#99014b"/><stop offset="0.6142" stop-color="#990044"/><stop offset="0.7736" stop-color="#99002c"/><stop offset="1.0002" stop-color="#99001b"/></linearGradient><linearGradient id="o57" gradientUnits="userSpaceOnUse" x1="1018.75" y1="0" x2="1658.60" y2="0"><stop offset="0.0000" stop-color="#007499"/><stop offset="0.2438" stop-color="#004b99"/><stop offset="0.3345" stop-color="#483999"/><stop offset="0.4298" stop-color="#992598"/><stop offset="0.4657" stop-color="#99187e"/><stop offset="0.5079" stop-color="#990d67"/><stop offset="0.5845" stop-color="#99004d"/><stop offset="0.6189" stop-color="#990045"/><stop offset="0.7767" stop-color="#99002d"/><stop offset="1.0002" stop-color="#99001b"/></linearGradient><linearGradient id="o58" gradientUnits="userSpaceOnUse" x1="1018.75" y1="0" x2="1658.60" y2="0"><stop offset="0.0000" stop-color="#007199"/><stop offset="0.2438" stop-color="#004899"/><stop offset="0.3329" stop-color="#443799"/><stop offset="0.4345" stop-color="#992298"/><stop offset="0.4704" stop-color="#99157e"/><stop offset="0.5126" stop-color="#990b68"/><stop offset="0.5798" stop-color="#990051"/><stop offset="0.6236" stop-color="#990046"/><stop offset="0.7799" stop-color="#99002e"/><stop offset="1.0002" stop-color="#99001c"/></linearGradient><linearGradient id="o59" gradientUnits="userSpaceOnUse" x1="1018.75" y1="0" x2="1658.60" y2="0"><stop offset="0.0000" stop-color="#006e99"/><stop offset="0.2454" stop-color="#004599"/><stop offset="0.3407" stop-color="#483399"/><stop offset="0.4392" stop-color="#991f98"/><stop offset="0.4751" stop-color="#99137f"/><stop offset="0.5173" stop-color="#990969"/><stop offset="0.5751" stop-color="#990054"/><stop offset="0.6283" stop-color="#990047"/><stop offset="0.7830" stop-color="#99002e"/><stop offset="1.0002" stop-color="#99001d"/></linearGradient><linearGradient id="o60" gradientUnits="userSpaceOnUse" x1="1018.75" y1="0" x2="1658.60" y2="0"><stop offset="0.0000" stop-color="#006b99"/><stop offset="0.2454" stop-color="#004399"/><stop offset="0.3391" stop-color="#453299"/><stop offset="0.4439" stop-color="#991c99"/><stop offset="0.4798" stop-color="#99117f"/><stop offset="0.5220" stop-color="#99086a"/><stop offset="0.5704" stop-color="#990058"/><stop offset="0.6330" stop-color="#990047"/><stop offset="0.7861" stop-color="#99002f"/><stop offset="1.0002" stop-color="#99001e"/></linearGradient><linearGradient id="o61" gradientUnits="userSpaceOnUse" x1="1018.75" y1="0" x2="1658.60" y2="0"><stop offset="0.0000" stop-color="#006899"/><stop offset="0.2469" stop-color="#004099"/><stop offset="0.3470" stop-color="#492e99"/><stop offset="0.4485" stop-color="#991a99"/><stop offset="0.4845" stop-color="#990f7f"/><stop offset="0.5267" stop-color="#99066a"/><stop offset="0.5658" stop-color="#99005c"/><stop offset="0.6361" stop-color="#990049"/><stop offset="0.7877" stop-color="#990031"/><stop offset="1.0002" stop-color="#99001f"/></linearGradient><linearGradient id="o62" gradientUnits="userSpaceOnUse" x1="1018.75" y1="0" x2="1658.60" y2="0"><stop offset="0.0000" stop-color="#006599"/><stop offset="0.2469" stop-color="#003e99"/><stop offset="0.3454" stop-color="#462c99"/><stop offset="0.4532" stop-color="#991799"/><stop offset="0.4892" stop-color="#990d80"/><stop offset="0.5314" stop-color="#99056b"/><stop offset="0.5611" stop-color="#990060"/><stop offset="0.6408" stop-color="#990049"/><stop offset="0.7908" stop-color="#990032"/><stop offset="1.0002" stop-color="#990020"/></linearGradient><linearGradient id="o63" gradientUnits="userSpaceOnUse" x1="1018.75" y1="0" x2="1658.60" y2="0"><stop offset="0.0000" stop-color="#006399"/><stop offset="0.2485" stop-color="#003c99"/><stop offset="0.3516" stop-color="#482999"/><stop offset="0.4579" stop-color="#991599"/><stop offset="0.4939" stop-color="#990b80"/><stop offset="0.5361" stop-color="#99036c"/><stop offset="0.5861" stop-color="#99005a"/><stop offset="0.6455" stop-color="#99004a"/><stop offset="0.7955" stop-color="#990032"/><stop offset="1.0002" stop-color="#990021"/></linearGradient><linearGradient id="o64" gradientUnits="userSpaceOnUse" x1="1018.75" y1="0" x2="1658.60" y2="0"><stop offset="0.0000" stop-color="#006099"/><stop offset="0.2485" stop-color="#003a99"/><stop offset="0.3516" stop-color="#462899"/><stop offset="0.4626" stop-color="#991399"/><stop offset="0.4986" stop-color="#990981"/><stop offset="0.5423" stop-color="#99016c"/><stop offset="0.5923" stop-color="#99005a"/><stop offset="0.6502" stop-color="#99004b"/><stop offset="0.7986" stop-color="#990033"/><stop offset="1.0002" stop-color="#990022"/></linearGradient><linearGradient id="o65" gradientUnits="userSpaceOnUse" x1="1018.75" y1="0" x2="1658.60" y2="0"><stop offset="0.0000" stop-color="#005e99"/><stop offset="0.2501" stop-color="#003899"/><stop offset="0.3579" stop-color="#492599"/><stop offset="0.4673" stop-color="#991099"/><stop offset="0.5032" stop-color="#990881"/><stop offset="0.5454" stop-color="#99006d"/><stop offset="0.5955" stop-color="#99005b"/><stop offset="0.6533" stop-color="#99004c"/><stop offset="0.8002" stop-color="#990034"/><stop offset="1.0002" stop-color="#990023"/></linearGradient><linearGradient id="o66" gradientUnits="userSpaceOnUse" x1="1018.75" y1="0" x2="1658.60" y2="0"><stop offset="0.0000" stop-color="#005b99"/><stop offset="0.2501" stop-color="#003699"/><stop offset="0.3579" stop-color="#472399"/><stop offset="0.4720" stop-color="#990e99"/><stop offset="0.5095" stop-color="#990681"/><stop offset="0.5517" stop-color="#99006d"/><stop offset="0.6580" stop-color="#99004d"/><stop offset="0.8033" stop-color="#990035"/><stop offset="1.0002" stop-color="#990024"/></linearGradient><linearGradient id="o67" gradientUnits="userSpaceOnUse" x1="1018.75" y1="0" x2="1658.60" y2="0"><stop offset="0.0000" stop-color="#005999"/><stop offset="0.2516" stop-color="#003499"/><stop offset="0.3641" stop-color="#4a2199"/><stop offset="0.4767" stop-color="#990c99"/><stop offset="0.5142" stop-color="#990481"/><stop offset="0.5564" stop-color="#99006d"/><stop offset="0.6627" stop-color="#99004e"/><stop offset="0.8064" stop-color="#990036"/><stop offset="1.0002" stop-color="#990025"/></linearGradient><linearGradient id="o68" gradientUnits="userSpaceOnUse" x1="1018.75" y1="0" x2="1658.60" y2="0"><stop offset="0.0000" stop-color="#005799"/><stop offset="0.2516" stop-color="#003299"/><stop offset="0.3641" stop-color="#481f99"/><stop offset="0.4814" stop-color="#990a99"/><stop offset="0.5329" stop-color="#99007a"/><stop offset="0.5595" stop-color="#99006f"/><stop offset="0.6658" stop-color="#99004f"/><stop offset="0.8080" stop-color="#990037"/><stop offset="1.0002" stop-color="#990026"/></linearGradient><linearGradient id="o69" gradientUnits="userSpaceOnUse" x1="1018.75" y1="0" x2="1658.60" y2="0"><stop offset="0.0000" stop-color="#005599"/><stop offset="0.2532" stop-color="#003099"/><stop offset="0.3704" stop-color="#4a1d99"/><stop offset="0.4861" stop-color="#990899"/><stop offset="0.5282" stop-color="#99007f"/><stop offset="0.5642" stop-color="#99006f"/><stop offset="0.6705" stop-color="#99004f"/><stop offset="0.8111" stop-color="#990038"/><stop offset="1.0002" stop-color="#990027"/></linearGradient><linearGradient id="o70" gradientUnits="userSpaceOnUse" x1="1018.75" y1="0" x2="1658.60" y2="0"><stop offset="0.0000" stop-color="#005399"/><stop offset="0.2532" stop-color="#002f99"/><stop offset="0.3704" stop-color="#481c99"/><stop offset="0.4907" stop-color="#990699"/><stop offset="0.5251" stop-color="#990084"/><stop offset="0.5704" stop-color="#99006f"/><stop offset="0.6752" stop-color="#990050"/><stop offset="0.8143" stop-color="#990039"/><stop offset="1.0002" stop-color="#990027"/></linearGradient><linearGradient id="o71" gradientUnits="userSpaceOnUse" x1="1018.75" y1="0" x2="1658.60" y2="0"><stop offset="0.0000" stop-color="#005199"/><stop offset="0.2547" stop-color="#002d99"/><stop offset="0.3767" stop-color="#4a1999"/><stop offset="0.4954" stop-color="#990499"/><stop offset="0.5204" stop-color="#990089"/><stop offset="0.5736" stop-color="#990070"/><stop offset="0.6783" stop-color="#990051"/><stop offset="0.8174" stop-color="#99003a"/><stop offset="1.0002" stop-color="#990028"/></linearGradient><linearGradient id="o72" gradientUnits="userSpaceOnUse" x1="1018.75" y1="0" x2="1658.60" y2="0"><stop offset="0.0000" stop-color="#004f99"/><stop offset="0.2547" stop-color="#002b99"/><stop offset="0.3767" stop-color="#491899"/><stop offset="0.5001" stop-color="#990399"/><stop offset="0.5361" stop-color="#990084"/><stop offset="0.5783" stop-color="#990071"/><stop offset="0.6830" stop-color="#990052"/><stop offset="0.8205" stop-color="#99003b"/><stop offset="1.0002" stop-color="#990029"/></linearGradient><linearGradient id="o73" gradientUnits="userSpaceOnUse" x1="1018.75" y1="0" x2="1658.60" y2="0"><stop offset="0.0000" stop-color="#004d99"/><stop offset="0.2563" stop-color="#002a99"/><stop offset="0.3813" stop-color="#4a1699"/><stop offset="0.5048" stop-color="#990199"/><stop offset="0.5408" stop-color="#990084"/><stop offset="0.5829" stop-color="#990071"/><stop offset="0.6861" stop-color="#990053"/><stop offset="0.8221" stop-color="#99003c"/><stop offset="1.0002" stop-color="#99002a"/></linearGradient><linearGradient id="o74" gradientUnits="userSpaceOnUse" x1="1018.75" y1="0" x2="1658.60" y2="0"><stop offset="0.0000" stop-color="#004b99"/><stop offset="0.2563" stop-color="#002899"/><stop offset="0.3829" stop-color="#491599"/><stop offset="0.5095" stop-color="#990099"/><stop offset="0.5454" stop-color="#990084"/><stop offset="0.5876" stop-color="#990072"/><stop offset="0.6908" stop-color="#990053"/><stop offset="0.8252" stop-color="#99003d"/><stop offset="1.0002" stop-color="#99002b"/></linearGradient><linearGradient id="o75" gradientUnits="userSpaceOnUse" x1="1018.75" y1="0" x2="1658.60" y2="0"><stop offset="0.0000" stop-color="#004999"/><stop offset="0.2579" stop-color="#002799"/><stop offset="0.3876" stop-color="#4a1399"/><stop offset="0.5142" stop-color="#990099"/><stop offset="0.5501" stop-color="#990085"/><stop offset="0.5923" stop-color="#990072"/><stop offset="0.6939" stop-color="#990054"/><stop offset="0.8268" stop-color="#99003e"/><stop offset="1.0002" stop-color="#99002c"/></linearGradient><linearGradient id="o76" gradientUnits="userSpaceOnUse" x1="1018.75" y1="0" x2="1658.60" y2="0"><stop offset="0.0000" stop-color="#004899"/><stop offset="0.2579" stop-color="#002599"/><stop offset="0.3892" stop-color="#4a1199"/><stop offset="0.4970" stop-color="#8b0099"/><stop offset="0.5189" stop-color="#990099"/><stop offset="0.5548" stop-color="#990085"/><stop offset="0.5970" stop-color="#990073"/><stop offset="0.6986" stop-color="#990055"/><stop offset="0.8299" stop-color="#99003f"/><stop offset="1.0002" stop-color="#99002d"/></linearGradient><linearGradient id="o77" gradientUnits="userSpaceOnUse" x1="1018.75" y1="0" x2="1658.60" y2="0"><stop offset="0.0000" stop-color="#004699"/><stop offset="0.2594" stop-color="#002499"/><stop offset="0.4923" stop-color="#860099"/><stop offset="0.5236" stop-color="#990099"/><stop offset="0.6017" stop-color="#990073"/><stop offset="0.7017" stop-color="#990056"/><stop offset="0.8314" stop-color="#990040"/><stop offset="1.0002" stop-color="#99002e"/></linearGradient><linearGradient id="o78" gradientUnits="userSpaceOnUse" x1="1018.75" y1="0" x2="1658.60" y2="0"><stop offset="0.0000" stop-color="#004499"/><stop offset="0.2594" stop-color="#002399"/><stop offset="0.4876" stop-color="#800099"/><stop offset="0.5282" stop-color="#990099"/><stop offset="0.6064" stop-color="#990074"/><stop offset="0.7064" stop-color="#990057"/><stop offset="0.8346" stop-color="#990040"/><stop offset="1.0002" stop-color="#99002f"/></linearGradient><linearGradient id="o79" gradientUnits="userSpaceOnUse" x1="1018.75" y1="0" x2="1658.60" y2="0"><stop offset="0.0000" stop-color="#004399"/><stop offset="0.2610" stop-color="#002199"/><stop offset="0.4829" stop-color="#7b0099"/><stop offset="0.5329" stop-color="#990099"/><stop offset="0.6111" stop-color="#990074"/><stop offset="0.7095" stop-color="#990058"/><stop offset="0.8361" stop-color="#990041"/><stop offset="1.0002" stop-color="#990030"/></linearGradient><linearGradient id="o80" gradientUnits="userSpaceOnUse" x1="1018.75" y1="0" x2="1658.60" y2="0"><stop offset="0.0000" stop-color="#004199"/><stop offset="0.2610" stop-color="#002099"/><stop offset="0.4782" stop-color="#760099"/><stop offset="0.5376" stop-color="#990099"/><stop offset="0.6142" stop-color="#990075"/><stop offset="0.7127" stop-color="#990059"/><stop offset="0.8393" stop-color="#990042"/><stop offset="1.0002" stop-color="#990031"/></linearGradient><linearGradient id="o81" gradientUnits="userSpaceOnUse" x1="1018.75" y1="0" x2="1658.60" y2="0"><stop offset="0.0000" stop-color="#004099"/><stop offset="0.2626" stop-color="#001f99"/><stop offset="0.4735" stop-color="#710099"/><stop offset="0.5423" stop-color="#990099"/><stop offset="0.6189" stop-color="#990075"/><stop offset="0.7174" stop-color="#990059"/><stop offset="0.8424" stop-color="#990043"/><stop offset="1.0002" stop-color="#990032"/></linearGradient><linearGradient id="o82" gradientUnits="userSpaceOnUse" x1="1018.75" y1="0" x2="1658.60" y2="0"><stop offset="0.0000" stop-color="#003e99"/><stop offset="0.2626" stop-color="#001e99"/><stop offset="0.4689" stop-color="#6c0099"/><stop offset="0.5470" stop-color="#990099"/><stop offset="0.6236" stop-color="#990076"/><stop offset="0.7205" stop-color="#99005a"/><stop offset="0.8439" stop-color="#990044"/><stop offset="1.0002" stop-color="#990033"/></linearGradient><linearGradient id="o83" gradientUnits="userSpaceOnUse" x1="1018.75" y1="0" x2="1658.60" y2="0"><stop offset="0.0000" stop-color="#003d99"/><stop offset="0.2641" stop-color="#001c99"/><stop offset="0.4642" stop-color="#680099"/><stop offset="0.5517" stop-color="#990099"/><stop offset="0.6283" stop-color="#990076"/><stop offset="0.7252" stop-color="#99005b"/><stop offset="0.8471" stop-color="#990045"/><stop offset="1.0002" stop-color="#990034"/></linearGradient><linearGradient id="o84" gradientUnits="userSpaceOnUse" x1="1018.75" y1="0" x2="1658.60" y2="0"><stop offset="0.0000" stop-color="#003c99"/><stop offset="0.2641" stop-color="#001b99"/><stop offset="0.4595" stop-color="#630099"/><stop offset="0.5564" stop-color="#990099"/><stop offset="0.6330" stop-color="#990077"/><stop offset="0.7283" stop-color="#99005b"/><stop offset="0.8486" stop-color="#990046"/><stop offset="1.0002" stop-color="#990035"/></linearGradient><linearGradient id="o85" gradientUnits="userSpaceOnUse" x1="1018.75" y1="0" x2="1658.60" y2="0"><stop offset="0.0000" stop-color="#003a99"/><stop offset="0.2657" stop-color="#001a99"/><stop offset="0.4548" stop-color="#5f0099"/><stop offset="0.5611" stop-color="#990099"/><stop offset="0.6376" stop-color="#990077"/><stop offset="0.7314" stop-color="#99005c"/><stop offset="0.8502" stop-color="#990047"/><stop offset="1.0002" stop-color="#990036"/></linearGradient><linearGradient id="o86" gradientUnits="userSpaceOnUse" x1="1018.75" y1="0" x2="1658.60" y2="0"><stop offset="0.0000" stop-color="#003999"/><stop offset="0.2657" stop-color="#001999"/><stop offset="0.4501" stop-color="#5b0099"/><stop offset="0.5658" stop-color="#990099"/><stop offset="0.6423" stop-color="#990077"/><stop offset="0.7361" stop-color="#99005d"/><stop offset="0.8533" stop-color="#990048"/><stop offset="1.0002" stop-color="#990037"/></linearGradient><linearGradient id="o87" gradientUnits="userSpaceOnUse" x1="1018.75" y1="0" x2="1658.60" y2="0"><stop offset="0.0000" stop-color="#003899"/><stop offset="0.2673" stop-color="#001899"/><stop offset="0.4470" stop-color="#580099"/><stop offset="0.5704" stop-color="#990099"/><stop offset="0.6455" stop-color="#990078"/><stop offset="0.7392" stop-color="#99005e"/><stop offset="0.8549" stop-color="#990049"/><stop offset="1.0002" stop-color="#990038"/></linearGradient><linearGradient id="o88" gradientUnits="userSpaceOnUse" x1="1018.75" y1="0" x2="1658.60" y2="0"><stop offset="0.0000" stop-color="#003699"/><stop offset="0.2673" stop-color="#001799"/><stop offset="0.4423" stop-color="#540099"/><stop offset="0.5751" stop-color="#990099"/><stop offset="0.6502" stop-color="#990079"/><stop offset="0.7424" stop-color="#99005f"/><stop offset="0.8580" stop-color="#990049"/><stop offset="1.0002" stop-color="#990039"/></linearGradient><linearGradient id="o89" gradientUnits="userSpaceOnUse" x1="1018.75" y1="0" x2="1658.60" y2="0"><stop offset="0.0000" stop-color="#003599"/><stop offset="0.2688" stop-color="#001699"/><stop offset="0.4376" stop-color="#500099"/><stop offset="0.5798" stop-color="#990099"/><stop offset="0.6548" stop-color="#990079"/><stop offset="0.7471" stop-color="#99005f"/><stop offset="0.8596" stop-color="#99004a"/><stop offset="1.0002" stop-color="#99003a"/></linearGradient><linearGradient id="o90" gradientUnits="userSpaceOnUse" x1="1018.75" y1="0" x2="1658.60" y2="0"><stop offset="0.0000" stop-color="#003499"/><stop offset="0.2688" stop-color="#001599"/><stop offset="0.4329" stop-color="#4c0099"/><stop offset="0.5845" stop-color="#990099"/><stop offset="0.6595" stop-color="#990079"/><stop offset="0.7502" stop-color="#990060"/><stop offset="0.8627" stop-color="#99004b"/><stop offset="1.0002" stop-color="#99003b"/></linearGradient><linearGradient id="o91" gradientUnits="userSpaceOnUse" x1="1018.75" y1="0" x2="1658.60" y2="0"><stop offset="0.0000" stop-color="#003399"/><stop offset="0.2704" stop-color="#001499"/><stop offset="0.4282" stop-color="#490099"/><stop offset="0.5892" stop-color="#990099"/><stop offset="0.6642" stop-color="#99007a"/><stop offset="0.7533" stop-color="#990061"/><stop offset="0.8643" stop-color="#99004c"/><stop offset="1.0002" stop-color="#99003c"/></linearGradient><linearGradient id="o92" gradientUnits="userSpaceOnUse" x1="1018.75" y1="0" x2="1658.60" y2="0"><stop offset="0.0000" stop-color="#003299"/><stop offset="0.2704" stop-color="#001399"/><stop offset="0.4235" stop-color="#450099"/><stop offset="0.5939" stop-color="#990099"/><stop offset="0.6673" stop-color="#99007a"/><stop offset="0.7564" stop-color="#990062"/><stop offset="0.8658" stop-color="#99004d"/><stop offset="1.0002" stop-color="#99003d"/></linearGradient><linearGradient id="o93" gradientUnits="userSpaceOnUse" x1="1018.75" y1="0" x2="1658.60" y2="0"><stop offset="0.0000" stop-color="#003199"/><stop offset="0.2719" stop-color="#001299"/><stop offset="0.4188" stop-color="#420099"/><stop offset="0.5986" stop-color="#990099"/><stop offset="0.6720" stop-color="#99007b"/><stop offset="0.7611" stop-color="#990062"/><stop offset="0.8690" stop-color="#99004e"/><stop offset="1.0002" stop-color="#99003d"/></linearGradient><linearGradient id="o94" gradientUnits="userSpaceOnUse" x1="1018.75" y1="0" x2="1658.60" y2="0"><stop offset="0.0000" stop-color="#003099"/><stop offset="0.2719" stop-color="#001199"/><stop offset="0.4142" stop-color="#3e0099"/><stop offset="0.6048" stop-color="#990098"/><stop offset="0.6767" stop-color="#99007b"/><stop offset="0.7642" stop-color="#990063"/><stop offset="0.8705" stop-color="#99004f"/><stop offset="1.0002" stop-color="#99003e"/></linearGradient><linearGradient id="o95" gradientUnits="userSpaceOnUse" x1="1018.75" y1="0" x2="1658.60" y2="0"><stop offset="0.0000" stop-color="#002e99"/><stop offset="0.2735" stop-color="#001099"/><stop offset="0.4095" stop-color="#3b0099"/><stop offset="0.6095" stop-color="#990098"/><stop offset="0.6814" stop-color="#99007b"/><stop offset="0.7674" stop-color="#990064"/><stop offset="0.8721" stop-color="#990050"/><stop offset="1.0002" stop-color="#99003f"/></linearGradient><linearGradient id="o96" gradientUnits="userSpaceOnUse" x1="1018.75" y1="0" x2="1658.60" y2="0"><stop offset="0.0000" stop-color="#002d99"/><stop offset="0.2735" stop-color="#001099"/><stop offset="0.4048" stop-color="#380099"/><stop offset="0.6142" stop-color="#990099"/><stop offset="0.6845" stop-color="#99007c"/><stop offset="0.7705" stop-color="#990064"/><stop offset="0.8752" stop-color="#990051"/><stop offset="1.0002" stop-color="#990040"/></linearGradient><linearGradient id="o97" gradientUnits="userSpaceOnUse" x1="1018.75" y1="0" x2="1658.60" y2="0"><stop offset="0.0000" stop-color="#002c99"/><stop offset="0.2751" stop-color="#000f99"/><stop offset="0.4001" stop-color="#350099"/><stop offset="0.6189" stop-color="#990099"/><stop offset="0.6892" stop-color="#99007c"/><stop offset="0.7752" stop-color="#990065"/><stop offset="0.8768" stop-color="#990052"/><stop offset="1.0002" stop-color="#990041"/></linearGradient><linearGradient id="o98" gradientUnits="userSpaceOnUse" x1="1018.75" y1="0" x2="1658.60" y2="0"><stop offset="0.0000" stop-color="#002b99"/><stop offset="0.2751" stop-color="#000e99"/><stop offset="0.3954" stop-color="#320099"/><stop offset="0.6236" stop-color="#990099"/><stop offset="0.6939" stop-color="#99007d"/><stop offset="0.7783" stop-color="#990066"/><stop offset="0.8799" stop-color="#990052"/><stop offset="1.0002" stop-color="#990042"/></linearGradient><linearGradient id="o99" gradientUnits="userSpaceOnUse" x1="1018.75" y1="0" x2="1658.60" y2="0"><stop offset="0.0000" stop-color="#002a99"/><stop offset="0.2751" stop-color="#000d99"/><stop offset="0.3907" stop-color="#2f0099"/><stop offset="0.6283" stop-color="#990099"/><stop offset="0.6986" stop-color="#99007d"/><stop offset="0.7814" stop-color="#990066"/><stop offset="0.8815" stop-color="#990053"/><stop offset="1.0002" stop-color="#990043"/></linearGradient><linearGradient id="o100" gradientUnits="userSpaceOnUse" x1="1018.75" y1="0" x2="1658.60" y2="0"><stop offset="0.0000" stop-color="#002a99"/><stop offset="0.2766" stop-color="#000d99"/><stop offset="0.3860" stop-color="#2c0099"/><stop offset="0.6330" stop-color="#990099"/><stop offset="0.7017" stop-color="#99007e"/><stop offset="0.7846" stop-color="#990067"/><stop offset="0.8830" stop-color="#990054"/><stop offset="1.0002" stop-color="#990044"/></linearGradient><linearGradient id="o101" gradientUnits="userSpaceOnUse" x1="1018.75" y1="0" x2="1658.60" y2="0"><stop offset="0.0000" stop-color="#002999"/><stop offset="0.2766" stop-color="#000c99"/><stop offset="0.3829" stop-color="#2a0099"/><stop offset="0.6376" stop-color="#990099"/><stop offset="0.7064" stop-color="#99007e"/><stop offset="0.7877" stop-color="#990068"/><stop offset="0.8846" stop-color="#990055"/><stop offset="1.0002" stop-color="#990045"/></linearGradient><linearGradient id="o102" gradientUnits="userSpaceOnUse" x1="1018.75" y1="0" x2="1658.60" y2="0"><stop offset="0.0000" stop-color="#002899"/><stop offset="0.2782" stop-color="#000b99"/><stop offset="0.3782" stop-color="#280099"/><stop offset="0.6423" stop-color="#990099"/><stop offset="0.7095" stop-color="#99007f"/><stop offset="0.7908" stop-color="#990069"/><stop offset="0.8861" stop-color="#990056"/><stop offset="1.0002" stop-color="#990046"/></linearGradient><linearGradient id="o103" gradientUnits="userSpaceOnUse" x1="1018.75" y1="0" x2="1658.60" y2="0"><stop offset="0.0000" stop-color="#002799"/><stop offset="0.2782" stop-color="#000a99"/><stop offset="0.3735" stop-color="#250099"/><stop offset="0.6470" stop-color="#990099"/><stop offset="0.7142" stop-color="#99007f"/><stop offset="0.7939" stop-color="#990069"/><stop offset="0.8877" stop-color="#990057"/><stop offset="1.0002" stop-color="#990047"/></linearGradient><linearGradient id="o104" gradientUnits="userSpaceOnUse" x1="1018.75" y1="0" x2="1658.60" y2="0"><stop offset="0.0000" stop-color="#002699"/><stop offset="0.2798" stop-color="#000a99"/><stop offset="0.3688" stop-color="#230099"/><stop offset="0.6517" stop-color="#990099"/><stop offset="0.7189" stop-color="#99007f"/><stop offset="0.7971" stop-color="#99006a"/><stop offset="0.8908" stop-color="#990058"/><stop offset="1.0002" stop-color="#990048"/></linearGradient><linearGradient id="o105" gradientUnits="userSpaceOnUse" x1="1018.75" y1="0" x2="1658.60" y2="0"><stop offset="0.0000" stop-color="#002599"/><stop offset="0.2798" stop-color="#000999"/><stop offset="0.3641" stop-color="#200099"/><stop offset="0.6564" stop-color="#990099"/><stop offset="0.7220" stop-color="#990080"/><stop offset="0.8002" stop-color="#99006b"/><stop offset="0.8924" stop-color="#990059"/><stop offset="1.0002" stop-color="#990049"/></linearGradient><linearGradient id="o106" gradientUnits="userSpaceOnUse" x1="1018.75" y1="0" x2="1658.60" y2="0"><stop offset="0.0000" stop-color="#002499"/><stop offset="0.2813" stop-color="#000899"/><stop offset="0.3595" stop-color="#1e0099"/><stop offset="0.6611" stop-color="#990099"/><stop offset="0.7267" stop-color="#990080"/><stop offset="0.8033" stop-color="#99006b"/><stop offset="0.8940" stop-color="#99005a"/><stop offset="1.0002" stop-color="#99004a"/></linearGradient><linearGradient id="o107" gradientUnits="userSpaceOnUse" x1="1018.75" y1="0" x2="1658.60" y2="0"><stop offset="0.0000" stop-color="#002399"/><stop offset="0.2813" stop-color="#000899"/><stop offset="0.3548" stop-color="#1b0099"/><stop offset="0.6642" stop-color="#990099"/><stop offset="0.7330" stop-color="#990080"/><stop offset="0.8080" stop-color="#99006c"/><stop offset="0.8971" stop-color="#99005a"/><stop offset="1.0002" stop-color="#99004b"/></linearGradient><linearGradient id="o108" gradientUnits="userSpaceOnUse" x1="1018.75" y1="0" x2="1658.60" y2="0"><stop offset="0.0000" stop-color="#002399"/><stop offset="0.2829" stop-color="#000799"/><stop offset="0.3501" stop-color="#190099"/><stop offset="0.6689" stop-color="#990099"/><stop offset="0.7361" stop-color="#990081"/><stop offset="0.8111" stop-color="#99006d"/><stop offset="1.0002" stop-color="#99004c"/></linearGradient><linearGradient id="o109" gradientUnits="userSpaceOnUse" x1="1018.75" y1="0" x2="1658.60" y2="0"><stop offset="0.0000" stop-color="#002299"/><stop offset="0.2829" stop-color="#000699"/><stop offset="0.3454" stop-color="#170099"/><stop offset="0.6736" stop-color="#990099"/><stop offset="0.7408" stop-color="#990081"/><stop offset="0.8143" stop-color="#99006d"/><stop offset="1.0002" stop-color="#99004d"/></linearGradient><linearGradient id="o110" gradientUnits="userSpaceOnUse" x1="1018.75" y1="0" x2="1658.60" y2="0"><stop offset="0.0000" stop-color="#002199"/><stop offset="0.2844" stop-color="#000699"/><stop offset="0.3407" stop-color="#140099"/><stop offset="0.6783" stop-color="#990099"/><stop offset="0.7455" stop-color="#990081"/><stop offset="0.8174" stop-color="#99006e"/><stop offset="1.0002" stop-color="#99004e"/></linearGradient><linearGradient id="o111" gradientUnits="userSpaceOnUse" x1="1018.75" y1="0" x2="1658.60" y2="0"><stop offset="0.0000" stop-color="#002099"/><stop offset="0.2844" stop-color="#000599"/><stop offset="0.3360" stop-color="#120099"/><stop offset="0.6830" stop-color="#990099"/><stop offset="0.7486" stop-color="#990082"/><stop offset="0.8205" stop-color="#99006f"/><stop offset="1.0002" stop-color="#99004f"/></linearGradient><linearGradient id="o112" gradientUnits="userSpaceOnUse" x1="1018.75" y1="0" x2="1658.60" y2="0"><stop offset="0.0000" stop-color="#002099"/><stop offset="0.2860" stop-color="#000599"/><stop offset="0.3313" stop-color="#100099"/><stop offset="0.5126" stop-color="#530099"/><stop offset="0.6877" stop-color="#990099"/><stop offset="0.7533" stop-color="#990082"/><stop offset="0.8236" stop-color="#99006f"/><stop offset="1.0002" stop-color="#990050"/></linearGradient><linearGradient id="o113" gradientUnits="userSpaceOnUse" x1="1018.75" y1="0" x2="1658.60" y2="0"><stop offset="0.0000" stop-color="#001f99"/><stop offset="0.2860" stop-color="#000499"/><stop offset="0.3266" stop-color="#0e0099"/><stop offset="0.5126" stop-color="#520099"/><stop offset="0.6923" stop-color="#990099"/><stop offset="0.7580" stop-color="#990082"/><stop offset="0.8268" stop-color="#990070"/><stop offset="1.0002" stop-color="#990052"/></linearGradient><linearGradient id="o114" gradientUnits="userSpaceOnUse" x1="1018.75" y1="0" x2="1658.60" y2="0"><stop offset="0.0000" stop-color="#001e99"/><stop offset="0.2876" stop-color="#000399"/><stop offset="0.3220" stop-color="#0c0099"/><stop offset="0.4970" stop-color="#4b0099"/><stop offset="0.6970" stop-color="#990099"/><stop offset="0.7611" stop-color="#990083"/><stop offset="0.8299" stop-color="#990071"/><stop offset="1.0002" stop-color="#990053"/></linearGradient><linearGradient id="o115" gradientUnits="userSpaceOnUse" x1="1018.75" y1="0" x2="1658.60" y2="0"><stop offset="0.0000" stop-color="#001d99"/><stop offset="0.2876" stop-color="#000399"/><stop offset="0.4970" stop-color="#4a0099"/><stop offset="0.7017" stop-color="#990099"/><stop offset="0.7658" stop-color="#990083"/><stop offset="0.8330" stop-color="#990071"/><stop offset="1.0002" stop-color="#990054"/></linearGradient><linearGradient id="o116" gradientUnits="userSpaceOnUse" x1="1018.75" y1="0" x2="1658.60" y2="0"><stop offset="0.0000" stop-color="#001d99"/><stop offset="0.2891" stop-color="#000299"/><stop offset="0.5017" stop-color="#4b0099"/><stop offset="0.7064" stop-color="#990099"/><stop offset="0.8361" stop-color="#990072"/><stop offset="1.0002" stop-color="#990055"/></linearGradient><linearGradient id="o117" gradientUnits="userSpaceOnUse" x1="1018.75" y1="0" x2="1658.60" y2="0"><stop offset="0.0000" stop-color="#001c99"/><stop offset="0.2891" stop-color="#000299"/><stop offset="0.5032" stop-color="#4a0099"/><stop offset="0.7111" stop-color="#990099"/><stop offset="0.8393" stop-color="#990073"/><stop offset="1.0002" stop-color="#990056"/></linearGradient><linearGradient id="o118" gradientUnits="userSpaceOnUse" x1="1018.75" y1="0" x2="1658.60" y2="0"><stop offset="0.0000" stop-color="#001b99"/><stop offset="0.2907" stop-color="#000199"/><stop offset="0.5079" stop-color="#4b0099"/><stop offset="0.7158" stop-color="#990099"/><stop offset="0.8424" stop-color="#990073"/><stop offset="1.0002" stop-color="#990057"/></linearGradient><linearGradient id="o119" gradientUnits="userSpaceOnUse" x1="1018.75" y1="0" x2="1658.60" y2="0"><stop offset="0.0000" stop-color="#001b99"/><stop offset="0.2907" stop-color="#000199"/><stop offset="0.5095" stop-color="#4a0099"/><stop offset="0.7205" stop-color="#990099"/><stop offset="0.8455" stop-color="#990074"/><stop offset="1.0002" stop-color="#990058"/></linearGradient><linearGradient id="o120" gradientUnits="userSpaceOnUse" x1="1018.75" y1="0" x2="1658.60" y2="0"><stop offset="0.0000" stop-color="#001a99"/><stop offset="0.2923" stop-color="#000099"/><stop offset="0.5126" stop-color="#4b0099"/><stop offset="0.7252" stop-color="#990099"/><stop offset="0.8486" stop-color="#990075"/><stop offset="1.0002" stop-color="#990059"/></linearGradient><linearGradient id="o121" gradientUnits="userSpaceOnUse" x1="1018.75" y1="0" x2="1658.60" y2="0"><stop offset="0.0000" stop-color="#001999"/><stop offset="0.2923" stop-color="#000099"/><stop offset="0.5142" stop-color="#4a0099"/><stop offset="0.7299" stop-color="#990099"/><stop offset="0.8518" stop-color="#990075"/><stop offset="1.0002" stop-color="#99005a"/></linearGradient><linearGradient id="o122" gradientUnits="userSpaceOnUse" x1="1018.75" y1="0" x2="1658.60" y2="0"><stop offset="0.0000" stop-color="#001999"/><stop offset="0.2938" stop-color="#000099"/><stop offset="0.5173" stop-color="#4a0099"/><stop offset="0.7361" stop-color="#990099"/><stop offset="0.8533" stop-color="#990076"/><stop offset="1.0002" stop-color="#99005b"/></linearGradient><linearGradient id="o123" gradientUnits="userSpaceOnUse" x1="1018.75" y1="0" x2="1658.60" y2="0"><stop offset="0.0000" stop-color="#001899"/><stop offset="0.2938" stop-color="#000099"/><stop offset="0.5204" stop-color="#4a0099"/><stop offset="0.7408" stop-color="#990099"/><stop offset="0.8565" stop-color="#990077"/><stop offset="1.0002" stop-color="#99005c"/></linearGradient><linearGradient id="o124" gradientUnits="userSpaceOnUse" x1="1018.75" y1="0" x2="1658.60" y2="0"><stop offset="0.0000" stop-color="#001899"/><stop offset="0.2954" stop-color="#000099"/><stop offset="0.5236" stop-color="#4b0099"/><stop offset="0.7455" stop-color="#990099"/><stop offset="0.8580" stop-color="#990078"/><stop offset="1.0002" stop-color="#99005d"/></linearGradient><linearGradient id="o125" gradientUnits="userSpaceOnUse" x1="1018.75" y1="0" x2="1658.60" y2="0"><stop offset="0.0000" stop-color="#001799"/><stop offset="0.2954" stop-color="#000099"/><stop offset="0.5267" stop-color="#4b0099"/><stop offset="0.7502" stop-color="#990099"/><stop offset="0.8611" stop-color="#990078"/><stop offset="1.0002" stop-color="#99005e"/></linearGradient><linearGradient id="o126" gradientUnits="userSpaceOnUse" x1="1018.75" y1="0" x2="1658.60" y2="0"><stop offset="0.0000" stop-color="#001699"/><stop offset="0.2969" stop-color="#000099"/><stop offset="0.5298" stop-color="#4b0099"/><stop offset="0.7549" stop-color="#990099"/><stop offset="0.8643" stop-color="#990079"/><stop offset="1.0002" stop-color="#99005f"/></linearGradient><linearGradient id="o127" gradientUnits="userSpaceOnUse" x1="1018.75" y1="0" x2="1658.60" y2="0"><stop offset="0.0000" stop-color="#001699"/><stop offset="0.2610" stop-color="#000099"/><stop offset="0.2969" stop-color="#000099"/><stop offset="0.5329" stop-color="#4b0099"/><stop offset="0.7596" stop-color="#990099"/><stop offset="0.8674" stop-color="#99007a"/><stop offset="1.0002" stop-color="#990060"/></linearGradient><linearGradient id="o128" gradientUnits="userSpaceOnUse" x1="1018.75" y1="0" x2="1658.60" y2="0"><stop offset="0.0000" stop-color="#001599"/><stop offset="0.2563" stop-color="#000099"/><stop offset="0.2985" stop-color="#000099"/><stop offset="0.5361" stop-color="#4b0099"/><stop offset="0.7642" stop-color="#990099"/><stop offset="0.8705" stop-color="#99007a"/><stop offset="1.0002" stop-color="#990061"/></linearGradient><linearGradient id="o129" gradientUnits="userSpaceOnUse" x1="1018.75" y1="0" x2="1658.60" y2="0"><stop offset="0.0000" stop-color="#001599"/><stop offset="0.2532" stop-color="#000099"/><stop offset="0.2985" stop-color="#000099"/><stop offset="0.5392" stop-color="#4b0099"/><stop offset="0.7689" stop-color="#990099"/><stop offset="0.8736" stop-color="#99007b"/><stop offset="1.0002" stop-color="#990062"/></linearGradient><linearGradient id="o130" gradientUnits="userSpaceOnUse" x1="1018.75" y1="0" x2="1658.60" y2="0"><stop offset="0.0000" stop-color="#001499"/><stop offset="0.2485" stop-color="#000099"/><stop offset="0.2985" stop-color="#000099"/><stop offset="0.5376" stop-color="#4a0099"/><stop offset="0.7736" stop-color="#990099"/><stop offset="0.8752" stop-color="#99007c"/><stop offset="1.0002" stop-color="#990063"/></linearGradient><linearGradient id="o131" gradientUnits="userSpaceOnUse" x1="1018.75" y1="0" x2="1658.60" y2="0"><stop offset="0.0000" stop-color="#001499"/><stop offset="0.2438" stop-color="#000099"/><stop offset="0.3001" stop-color="#000099"/><stop offset="0.5439" stop-color="#4b0099"/><stop offset="0.7783" stop-color="#990099"/><stop offset="0.8783" stop-color="#99007c"/><stop offset="1.0002" stop-color="#990064"/></linearGradient><linearGradient id="o132" gradientUnits="userSpaceOnUse" x1="1018.75" y1="0" x2="1658.60" y2="0"><stop offset="0.0000" stop-color="#001399"/><stop offset="0.2391" stop-color="#000099"/><stop offset="0.3001" stop-color="#000099"/><stop offset="0.5423" stop-color="#490099"/><stop offset="0.7830" stop-color="#990099"/><stop offset="0.8815" stop-color="#99007d"/><stop offset="1.0002" stop-color="#990065"/></linearGradient><linearGradient id="o133" gradientUnits="userSpaceOnUse" x1="1018.75" y1="0" x2="1658.60" y2="0"><stop offset="0.0000" stop-color="#001399"/><stop offset="0.2344" stop-color="#000099"/><stop offset="0.3016" stop-color="#000099"/><stop offset="0.5501" stop-color="#4b0099"/><stop offset="0.7877" stop-color="#990099"/><stop offset="0.8846" stop-color="#99007d"/><stop offset="1.0002" stop-color="#990066"/></linearGradient><linearGradient id="o134" gradientUnits="userSpaceOnUse" x1="1018.75" y1="0" x2="1658.60" y2="0"><stop offset="0.0000" stop-color="#001299"/><stop offset="0.2297" stop-color="#000099"/><stop offset="0.3016" stop-color="#000099"/><stop offset="0.5486" stop-color="#4a0099"/><stop offset="0.7924" stop-color="#990099"/><stop offset="0.8877" stop-color="#99007e"/><stop offset="1.0002" stop-color="#990067"/></linearGradient><linearGradient id="o135" gradientUnits="userSpaceOnUse" x1="1018.75" y1="0" x2="1658.60" y2="0"><stop offset="0.0000" stop-color="#001299"/><stop offset="0.2251" stop-color="#000099"/><stop offset="0.3032" stop-color="#000099"/><stop offset="0.5548" stop-color="#4b0099"/><stop offset="0.7971" stop-color="#990099"/><stop offset="0.8908" stop-color="#99007f"/><stop offset="1.0002" stop-color="#990069"/></linearGradient><linearGradient id="o136" gradientUnits="userSpaceOnUse" x1="1018.75" y1="0" x2="1658.60" y2="0"><stop offset="0.0000" stop-color="#001199"/><stop offset="0.2204" stop-color="#000099"/><stop offset="0.3032" stop-color="#000099"/><stop offset="0.5548" stop-color="#4a0099"/><stop offset="0.8018" stop-color="#990099"/><stop offset="0.8924" stop-color="#99007f"/><stop offset="1.0002" stop-color="#99006a"/></linearGradient><linearGradient id="o137" gradientUnits="userSpaceOnUse" x1="1018.75" y1="0" x2="1658.60" y2="0"><stop offset="0.0000" stop-color="#001199"/><stop offset="0.2157" stop-color="#000099"/><stop offset="0.3048" stop-color="#000099"/><stop offset="0.5611" stop-color="#4b0099"/><stop offset="0.8064" stop-color="#990099"/><stop offset="0.8955" stop-color="#990080"/><stop offset="1.0002" stop-color="#99006b"/></linearGradient><linearGradient id="o138" gradientUnits="userSpaceOnUse" x1="1018.75" y1="0" x2="1658.60" y2="0"><stop offset="0.0000" stop-color="#001099"/><stop offset="0.2110" stop-color="#000099"/><stop offset="0.3048" stop-color="#000099"/><stop offset="0.5595" stop-color="#4a0099"/><stop offset="0.8111" stop-color="#990099"/><stop offset="0.8986" stop-color="#990081"/><stop offset="1.0002" stop-color="#99006c"/></linearGradient><linearGradient id="o139" gradientUnits="userSpaceOnUse" x1="1018.75" y1="0" x2="1658.60" y2="0"><stop offset="0.0000" stop-color="#001099"/><stop offset="0.2063" stop-color="#000099"/><stop offset="0.3063" stop-color="#000099"/><stop offset="0.5658" stop-color="#4b0099"/><stop offset="0.8158" stop-color="#990099"/><stop offset="0.9018" stop-color="#990081"/><stop offset="1.0002" stop-color="#99006d"/></linearGradient><linearGradient id="o140" gradientUnits="userSpaceOnUse" x1="1018.75" y1="0" x2="1658.60" y2="0"><stop offset="0.0000" stop-color="#000f99"/><stop offset="0.2016" stop-color="#000099"/><stop offset="0.3063" stop-color="#000099"/><stop offset="0.5658" stop-color="#4a0099"/><stop offset="0.8205" stop-color="#990099"/><stop offset="0.9049" stop-color="#990082"/><stop offset="1.0002" stop-color="#99006e"/></linearGradient><linearGradient id="o141" gradientUnits="userSpaceOnUse" x1="1018.75" y1="0" x2="1658.60" y2="0"><stop offset="0.0000" stop-color="#000f99"/><stop offset="0.1969" stop-color="#000099"/><stop offset="0.3079" stop-color="#000099"/><stop offset="0.5720" stop-color="#4b0099"/><stop offset="0.8252" stop-color="#990099"/><stop offset="0.9065" stop-color="#990083"/><stop offset="1.0002" stop-color="#99006f"/></linearGradient><linearGradient id="o142" gradientUnits="userSpaceOnUse" x1="1018.75" y1="0" x2="1658.60" y2="0"><stop offset="0.0000" stop-color="#000e99"/><stop offset="0.1922" stop-color="#000099"/><stop offset="0.3079" stop-color="#000099"/><stop offset="0.5720" stop-color="#4a0099"/><stop offset="0.8299" stop-color="#990099"/><stop offset="0.9096" stop-color="#990083"/><stop offset="1.0002" stop-color="#990070"/></linearGradient><linearGradient id="o143" gradientUnits="userSpaceOnUse" x1="1018.75" y1="0" x2="1658.60" y2="0"><stop offset="0.0000" stop-color="#000e99"/><stop offset="0.1891" stop-color="#000099"/><stop offset="0.3094" stop-color="#000099"/><stop offset="0.5783" stop-color="#4b0099"/><stop offset="0.8346" stop-color="#990099"/><stop offset="0.9127" stop-color="#990084"/><stop offset="1.0002" stop-color="#990071"/></linearGradient><linearGradient id="o144" gradientUnits="userSpaceOnUse" x1="1018.75" y1="0" x2="1658.60" y2="0"><stop offset="0.0000" stop-color="#000d99"/><stop offset="0.1844" stop-color="#000099"/><stop offset="0.3094" stop-color="#000099"/><stop offset="0.5767" stop-color="#4a0099"/><stop offset="0.8393" stop-color="#990099"/><stop offset="1.0002" stop-color="#990072"/></linearGradient><linearGradient id="o145" gradientUnits="userSpaceOnUse" x1="1018.75" y1="0" x2="1658.60" y2="0"><stop offset="0.0000" stop-color="#000d99"/><stop offset="0.1797" stop-color="#000099"/><stop offset="0.3110" stop-color="#000099"/><stop offset="0.5829" stop-color="#4b0099"/><stop offset="0.8439" stop-color="#990099"/><stop offset="1.0002" stop-color="#990073"/></linearGradient><linearGradient id="o146" gradientUnits="userSpaceOnUse" x1="1018.75" y1="0" x2="1658.60" y2="0"><stop offset="0.0000" stop-color="#000d99"/><stop offset="0.1750" stop-color="#000099"/><stop offset="0.3110" stop-color="#000099"/><stop offset="0.5829" stop-color="#4a0099"/><stop offset="0.8486" stop-color="#990099"/><stop offset="1.0002" stop-color="#990075"/></linearGradient><linearGradient id="o147" gradientUnits="userSpaceOnUse" x1="1018.75" y1="0" x2="1658.60" y2="0"><stop offset="0.0000" stop-color="#000c99"/><stop offset="0.1704" stop-color="#000099"/><stop offset="0.3126" stop-color="#000099"/><stop offset="0.5892" stop-color="#4b0099"/><stop offset="0.8533" stop-color="#990099"/><stop offset="1.0002" stop-color="#990076"/></linearGradient><linearGradient id="o148" gradientUnits="userSpaceOnUse" x1="1018.75" y1="0" x2="1658.60" y2="0"><stop offset="0.0000" stop-color="#000c99"/><stop offset="0.1657" stop-color="#000099"/><stop offset="0.3126" stop-color="#000099"/><stop offset="0.5892" stop-color="#4a0099"/><stop offset="0.8580" stop-color="#990099"/><stop offset="1.0002" stop-color="#990077"/></linearGradient><linearGradient id="o149" gradientUnits="userSpaceOnUse" x1="1018.75" y1="0" x2="1658.60" y2="0"><stop offset="0.0000" stop-color="#000b99"/><stop offset="0.1610" stop-color="#000099"/><stop offset="0.3141" stop-color="#000099"/><stop offset="0.5939" stop-color="#4b0099"/><stop offset="0.8627" stop-color="#990099"/><stop offset="1.0002" stop-color="#990078"/></linearGradient><linearGradient id="o150" gradientUnits="userSpaceOnUse" x1="1018.75" y1="0" x2="1658.60" y2="0"><stop offset="0.0000" stop-color="#000b99"/><stop offset="0.1563" stop-color="#000099"/><stop offset="0.3141" stop-color="#000099"/><stop offset="0.5955" stop-color="#4a0099"/><stop offset="0.8674" stop-color="#990099"/><stop offset="1.0002" stop-color="#990079"/></linearGradient><linearGradient id="o151" gradientUnits="userSpaceOnUse" x1="1018.75" y1="0" x2="1658.60" y2="0"><stop offset="0.0000" stop-color="#000b99"/><stop offset="0.1516" stop-color="#000099"/><stop offset="0.3157" stop-color="#000099"/><stop offset="0.6001" stop-color="#4b0099"/><stop offset="0.8721" stop-color="#990099"/><stop offset="1.0002" stop-color="#99007a"/></linearGradient><linearGradient id="o152" gradientUnits="userSpaceOnUse" x1="1018.75" y1="0" x2="1658.60" y2="0"><stop offset="0.0000" stop-color="#000a99"/><stop offset="0.1469" stop-color="#000099"/><stop offset="0.3157" stop-color="#000099"/><stop offset="0.6001" stop-color="#4a0099"/><stop offset="0.8768" stop-color="#990099"/><stop offset="1.0002" stop-color="#99007b"/></linearGradient><linearGradient id="o153" gradientUnits="userSpaceOnUse" x1="1018.75" y1="0" x2="1658.60" y2="0"><stop offset="0.0000" stop-color="#000a99"/><stop offset="0.1422" stop-color="#000099"/><stop offset="0.3173" stop-color="#000099"/><stop offset="0.6048" stop-color="#4b0099"/><stop offset="0.8815" stop-color="#990099"/><stop offset="1.0002" stop-color="#99007c"/></linearGradient><linearGradient id="o154" gradientUnits="userSpaceOnUse" x1="1018.75" y1="0" x2="1658.60" y2="0"><stop offset="0.0000" stop-color="#000999"/><stop offset="0.1375" stop-color="#000099"/><stop offset="0.3173" stop-color="#000099"/><stop offset="0.6064" stop-color="#4a0099"/><stop offset="0.8861" stop-color="#990099"/><stop offset="1.0002" stop-color="#99007d"/></linearGradient><linearGradient id="o155" gradientUnits="userSpaceOnUse" x1="1018.75" y1="0" x2="1658.60" y2="0"><stop offset="0.0000" stop-color="#000999"/><stop offset="0.1328" stop-color="#000099"/><stop offset="0.3188" stop-color="#000099"/><stop offset="0.6111" stop-color="#4b0099"/><stop offset="0.8908" stop-color="#990099"/><stop offset="1.0002" stop-color="#99007f"/></linearGradient><linearGradient id="o156" gradientUnits="userSpaceOnUse" x1="1018.75" y1="0" x2="1658.60" y2="0"><stop offset="0.0000" stop-color="#000999"/><stop offset="0.1282" stop-color="#000099"/><stop offset="0.3188" stop-color="#000099"/><stop offset="0.6126" stop-color="#4b0099"/><stop offset="0.8955" stop-color="#990099"/><stop offset="1.0002" stop-color="#990080"/></linearGradient><linearGradient id="o157" gradientUnits="userSpaceOnUse" x1="1018.75" y1="0" x2="1658.60" y2="0"><stop offset="0.0000" stop-color="#000899"/><stop offset="0.1250" stop-color="#000099"/><stop offset="0.3204" stop-color="#000099"/><stop offset="0.6158" stop-color="#4b0099"/><stop offset="0.9002" stop-color="#990099"/><stop offset="1.0002" stop-color="#990081"/></linearGradient><linearGradient id="o158" gradientUnits="userSpaceOnUse" x1="1018.75" y1="0" x2="1658.60" y2="0"><stop offset="0.0000" stop-color="#000899"/><stop offset="0.1203" stop-color="#000099"/><stop offset="0.3204" stop-color="#000099"/><stop offset="0.6173" stop-color="#4a0099"/><stop offset="0.9049" stop-color="#990099"/><stop offset="1.0002" stop-color="#990082"/></linearGradient><linearGradient id="o159" gradientUnits="userSpaceOnUse" x1="1018.75" y1="0" x2="1658.60" y2="0"><stop offset="0.0000" stop-color="#000899"/><stop offset="0.1157" stop-color="#000099"/><stop offset="0.3220" stop-color="#000099"/><stop offset="0.6220" stop-color="#4b0099"/><stop offset="0.9096" stop-color="#990099"/><stop offset="1.0002" stop-color="#990083"/></linearGradient><linearGradient id="o160" gradientUnits="userSpaceOnUse" x1="1018.75" y1="0" x2="1658.60" y2="0"><stop offset="0.0000" stop-color="#000799"/><stop offset="0.1110" stop-color="#000099"/><stop offset="0.3220" stop-color="#000099"/><stop offset="0.6236" stop-color="#4b0099"/><stop offset="0.9143" stop-color="#990099"/><stop offset="1.0002" stop-color="#990084"/></linearGradient><linearGradient id="o161" gradientUnits="userSpaceOnUse" x1="1018.75" y1="0" x2="1658.60" y2="0"><stop offset="0.0000" stop-color="#000799"/><stop offset="0.1063" stop-color="#000099"/><stop offset="0.3235" stop-color="#000099"/><stop offset="0.6267" stop-color="#4b0099"/><stop offset="0.9190" stop-color="#990099"/><stop offset="1.0002" stop-color="#990085"/></linearGradient><linearGradient id="o162" gradientUnits="userSpaceOnUse" x1="1018.75" y1="0" x2="1658.60" y2="0"><stop offset="0.0000" stop-color="#000799"/><stop offset="0.1016" stop-color="#000099"/><stop offset="0.3235" stop-color="#000099"/><stop offset="0.6298" stop-color="#4b0099"/><stop offset="0.9237" stop-color="#990099"/><stop offset="1.0002" stop-color="#990086"/></linearGradient><linearGradient id="o163" gradientUnits="userSpaceOnUse" x1="1018.75" y1="0" x2="1658.60" y2="0"><stop offset="0.0000" stop-color="#000699"/><stop offset="0.0969" stop-color="#000099"/><stop offset="0.3251" stop-color="#000099"/><stop offset="0.6330" stop-color="#4b0099"/><stop offset="0.9283" stop-color="#990099"/><stop offset="1.0002" stop-color="#990088"/></linearGradient><linearGradient id="o164" gradientUnits="userSpaceOnUse" x1="1018.75" y1="0" x2="1658.60" y2="0"><stop offset="0.0000" stop-color="#000699"/><stop offset="0.0922" stop-color="#000099"/><stop offset="0.3251" stop-color="#000099"/><stop offset="0.6345" stop-color="#4b0099"/><stop offset="0.9330" stop-color="#990099"/><stop offset="1.0002" stop-color="#990089"/></linearGradient><linearGradient id="i0" gradientUnits="userSpaceOnUse" x1="1149.88" y1="0" x2="1500.75" y2="0"><stop offset="0.0000" stop-color="#00ff00"/><stop offset="0.0057" stop-color="#01ff00"/><stop offset="0.0456" stop-color="#23ff00"/><stop offset="0.1254" stop-color="#6eff00"/><stop offset="0.1881" stop-color="#b3ff00"/><stop offset="0.2480" stop-color="#ffff00"/><stop offset="0.2936" stop-color="#ffcb00"/><stop offset="0.3506" stop-color="#ff9d00"/><stop offset="0.4161" stop-color="#ff7900"/><stop offset="0.4959" stop-color="#ff5900"/><stop offset="0.5900" stop-color="#ff3f00"/><stop offset="0.7040" stop-color="#ff2900"/><stop offset="0.8379" stop-color="#ff1600"/><stop offset="1.0004" stop-color="#ff0700"/></linearGradient><linearGradient id="i1" gradientUnits="userSpaceOnUse" x1="1149.88" y1="0" x2="1500.75" y2="0"><stop offset="0.0000" stop-color="#00ff01"/><stop offset="0.0057" stop-color="#00ff00"/><stop offset="0.0399" stop-color="#1dff00"/><stop offset="0.1226" stop-color="#6bff00"/><stop offset="0.1853" stop-color="#b0ff00"/><stop offset="0.2480" stop-color="#fffe00"/><stop offset="0.2936" stop-color="#ffca00"/><stop offset="0.3506" stop-color="#ff9d00"/><stop offset="0.4161" stop-color="#ff7800"/><stop offset="0.4959" stop-color="#ff5800"/><stop offset="0.5900" stop-color="#ff3e00"/><stop offset="0.7040" stop-color="#ff2800"/><stop offset="0.8379" stop-color="#ff1600"/><stop offset="1.0004" stop-color="#ff0600"/></linearGradient><linearGradient id="i2" gradientUnits="userSpaceOnUse" x1="1149.88" y1="0" x2="1500.75" y2="0"><stop offset="0.0000" stop-color="#00ff05"/><stop offset="0.0086" stop-color="#02ff04"/><stop offset="0.0342" stop-color="#17ff03"/><stop offset="0.1197" stop-color="#68ff00"/><stop offset="0.1824" stop-color="#adff00"/><stop offset="0.2480" stop-color="#fffe00"/><stop offset="0.2936" stop-color="#ffca00"/><stop offset="0.3506" stop-color="#ff9c00"/><stop offset="0.4161" stop-color="#ff7700"/><stop offset="0.4959" stop-color="#ff5800"/><stop offset="0.5900" stop-color="#ff3e00"/><stop offset="0.7040" stop-color="#ff2800"/><stop offset="0.8379" stop-color="#ff1500"/><stop offset="1.0004" stop-color="#ff0600"/></linearGradient><linearGradient id="i3" gradientUnits="userSpaceOnUse" x1="1149.88" y1="0" x2="1500.75" y2="0"><stop offset="0.0000" stop-color="#00ff09"/><stop offset="0.0086" stop-color="#01ff09"/><stop offset="0.0285" stop-color="#12ff07"/><stop offset="0.1169" stop-color="#65ff01"/><stop offset="0.1796" stop-color="#aaff00"/><stop offset="0.2480" stop-color="#fffd00"/><stop offset="0.2936" stop-color="#ffc900"/><stop offset="0.3506" stop-color="#ff9b00"/><stop offset="0.4161" stop-color="#ff7600"/><stop offset="0.4959" stop-color="#ff5700"/><stop offset="0.5900" stop-color="#ff3d00"/><stop offset="0.7040" stop-color="#ff2700"/><stop offset="0.8379" stop-color="#ff1500"/><stop offset="1.0004" stop-color="#ff0500"/></linearGradient><linearGradient id="i4" gradientUnits="userSpaceOnUse" x1="1149.88" y1="0" x2="1500.75" y2="0"><stop offset="0.0000" stop-color="#00ff0e"/><stop offset="0.0086" stop-color="#00ff0d"/><stop offset="0.0228" stop-color="#0cff0c"/><stop offset="0.1140" stop-color="#62ff06"/><stop offset="0.1739" stop-color="#a3ff01"/><stop offset="0.2451" stop-color="#feff00"/><stop offset="0.2480" stop-color="#fffc00"/><stop offset="0.2936" stop-color="#ffc800"/><stop offset="0.3506" stop-color="#ff9a00"/><stop offset="0.4161" stop-color="#ff7600"/><stop offset="0.4959" stop-color="#ff5600"/><stop offset="0.5900" stop-color="#ff3d00"/><stop offset="0.7040" stop-color="#ff2700"/><stop offset="0.8379" stop-color="#ff1400"/><stop offset="1.0004" stop-color="#ff0500"/></linearGradient><linearGradient id="i5" gradientUnits="userSpaceOnUse" x1="1149.88" y1="0" x2="1500.75" y2="0"><stop offset="0.0000" stop-color="#00ff12"/><stop offset="0.0086" stop-color="#00ff12"/><stop offset="0.0228" stop-color="#0bff11"/><stop offset="0.1169" stop-color="#64ff0b"/><stop offset="0.1824" stop-color="#aeff06"/><stop offset="0.2451" stop-color="#ffff01"/><stop offset="0.2907" stop-color="#ffca00"/><stop offset="0.3477" stop-color="#ff9c00"/><stop offset="0.4133" stop-color="#ff7600"/><stop offset="0.4931" stop-color="#ff5700"/><stop offset="0.5871" stop-color="#ff3d00"/><stop offset="0.7011" stop-color="#ff2600"/><stop offset="0.8379" stop-color="#ff1400"/><stop offset="1.0004" stop-color="#ff0500"/></linearGradient><linearGradient id="i6" gradientUnits="userSpaceOnUse" x1="1149.88" y1="0" x2="1500.75" y2="0"><stop offset="0.0000" stop-color="#00ff17"/><stop offset="0.0143" stop-color="#03ff16"/><stop offset="0.1140" stop-color="#61ff10"/><stop offset="0.1796" stop-color="#aaff0c"/><stop offset="0.2451" stop-color="#fffe06"/><stop offset="0.2907" stop-color="#ffc902"/><stop offset="0.3477" stop-color="#ff9b00"/><stop offset="0.4133" stop-color="#ff7600"/><stop offset="0.4931" stop-color="#ff5600"/><stop offset="0.5871" stop-color="#ff3c00"/><stop offset="0.7011" stop-color="#ff2600"/><stop offset="0.8379" stop-color="#ff1300"/><stop offset="1.0004" stop-color="#ff0400"/></linearGradient><linearGradient id="i7" gradientUnits="userSpaceOnUse" x1="1149.88" y1="0" x2="1500.75" y2="0"><stop offset="0.0000" stop-color="#00ff1b"/><stop offset="0.0114" stop-color="#00ff1b"/><stop offset="0.1112" stop-color="#5eff15"/><stop offset="0.1767" stop-color="#a7ff11"/><stop offset="0.2451" stop-color="#fffe0c"/><stop offset="0.2907" stop-color="#ffc807"/><stop offset="0.3477" stop-color="#ff9a02"/><stop offset="0.4133" stop-color="#ff7500"/><stop offset="0.4931" stop-color="#ff5500"/><stop offset="0.5871" stop-color="#ff3b00"/><stop offset="0.7011" stop-color="#ff2500"/><stop offset="0.8379" stop-color="#ff1300"/><stop offset="1.0004" stop-color="#ff0400"/></linearGradient><linearGradient id="i8" gradientUnits="userSpaceOnUse" x1="1149.88" y1="0" x2="1500.75" y2="0"><stop offset="0.0000" stop-color="#00ff20"/><stop offset="0.0143" stop-color="#02ff1f"/><stop offset="0.1083" stop-color="#5bff1b"/><stop offset="0.1739" stop-color="#a4ff17"/><stop offset="0.2451" stop-color="#fffd12"/><stop offset="0.2907" stop-color="#ffc80b"/><stop offset="0.3477" stop-color="#ff9906"/><stop offset="0.4133" stop-color="#ff7401"/><stop offset="0.4931" stop-color="#ff5500"/><stop offset="0.5871" stop-color="#ff3b00"/><stop offset="0.7011" stop-color="#ff2500"/><stop offset="0.8379" stop-color="#ff1300"/><stop offset="1.0004" stop-color="#ff0300"/></linearGradient><linearGradient id="i9" gradientUnits="userSpaceOnUse" x1="1149.88" y1="0" x2="1500.75" y2="0"><stop offset="0.0000" stop-color="#00ff25"/><stop offset="0.0143" stop-color="#01ff24"/><stop offset="0.1055" stop-color="#57ff20"/><stop offset="0.1710" stop-color="#a1ff1d"/><stop offset="0.2423" stop-color="#feff18"/><stop offset="0.2451" stop-color="#fffc18"/><stop offset="0.2907" stop-color="#ffc710"/><stop offset="0.3477" stop-color="#ff980a"/><stop offset="0.4133" stop-color="#ff7305"/><stop offset="0.4931" stop-color="#ff5400"/><stop offset="0.5871" stop-color="#ff3a00"/><stop offset="0.7011" stop-color="#ff2400"/><stop offset="0.8379" stop-color="#ff1200"/><stop offset="1.0004" stop-color="#ff0300"/></linearGradient><linearGradient id="i10" gradientUnits="userSpaceOnUse" x1="1149.88" y1="0" x2="1500.75" y2="0"><stop offset="0.0000" stop-color="#00ff29"/><stop offset="0.0143" stop-color="#00ff29"/><stop offset="0.1083" stop-color="#5aff25"/><stop offset="0.1767" stop-color="#a8ff22"/><stop offset="0.2423" stop-color="#ffff1e"/><stop offset="0.2651" stop-color="#ffe21a"/><stop offset="0.2907" stop-color="#ffc615"/><stop offset="0.3449" stop-color="#ff990e"/><stop offset="0.4104" stop-color="#ff7408"/><stop offset="0.4902" stop-color="#ff5403"/><stop offset="0.5843" stop-color="#ff3a00"/><stop offset="0.6983" stop-color="#ff2400"/><stop offset="0.8351" stop-color="#ff1200"/><stop offset="1.0004" stop-color="#ff0300"/></linearGradient><linearGradient id="i11" gradientUnits="userSpaceOnUse" x1="1149.88" y1="0" x2="1500.75" y2="0"><stop offset="0.0000" stop-color="#00ff2e"/><stop offset="0.0171" stop-color="#02ff2e"/><stop offset="0.1055" stop-color="#57ff2b"/><stop offset="0.1767" stop-color="#a8ff28"/><stop offset="0.2423" stop-color="#ffff25"/><stop offset="0.2651" stop-color="#ffe11f"/><stop offset="0.2879" stop-color="#ffc81b"/><stop offset="0.3420" stop-color="#ff9b13"/><stop offset="0.4076" stop-color="#ff740c"/><stop offset="0.4874" stop-color="#ff5406"/><stop offset="0.5843" stop-color="#ff3a01"/><stop offset="0.6983" stop-color="#ff2400"/><stop offset="0.8351" stop-color="#ff1100"/><stop offset="1.0004" stop-color="#ff0200"/></linearGradient><linearGradient id="i12" gradientUnits="userSpaceOnUse" x1="1149.88" y1="0" x2="1500.75" y2="0"><stop offset="0.0000" stop-color="#00ff33"/><stop offset="0.0171" stop-color="#01ff33"/><stop offset="0.1026" stop-color="#53ff30"/><stop offset="0.1739" stop-color="#a4ff2e"/><stop offset="0.2423" stop-color="#fffe2b"/><stop offset="0.2651" stop-color="#ffe025"/><stop offset="0.2879" stop-color="#ffc720"/><stop offset="0.3420" stop-color="#ff9a17"/><stop offset="0.4076" stop-color="#ff740f"/><stop offset="0.4874" stop-color="#ff5409"/><stop offset="0.5843" stop-color="#ff3904"/><stop offset="0.6983" stop-color="#ff2300"/><stop offset="0.8351" stop-color="#ff1100"/><stop offset="1.0004" stop-color="#ff0200"/></linearGradient><linearGradient id="i13" gradientUnits="userSpaceOnUse" x1="1149.88" y1="0" x2="1500.75" y2="0"><stop offset="0.0000" stop-color="#00ff38"/><stop offset="0.0171" stop-color="#00ff38"/><stop offset="0.0998" stop-color="#50ff36"/><stop offset="0.1682" stop-color="#9dff34"/><stop offset="0.2423" stop-color="#fffd31"/><stop offset="0.2651" stop-color="#ffdf2a"/><stop offset="0.2879" stop-color="#ffc625"/><stop offset="0.3420" stop-color="#ff991b"/><stop offset="0.4076" stop-color="#ff7313"/><stop offset="0.4874" stop-color="#ff530c"/><stop offset="0.5843" stop-color="#ff3806"/><stop offset="0.6983" stop-color="#ff2301"/><stop offset="0.8351" stop-color="#ff1000"/><stop offset="1.0004" stop-color="#ff0100"/></linearGradient><linearGradient id="i14" gradientUnits="userSpaceOnUse" x1="1149.88" y1="0" x2="1500.75" y2="0"><stop offset="0.0000" stop-color="#00ff3d"/><stop offset="0.0200" stop-color="#02ff3d"/><stop offset="0.0998" stop-color="#4fff3b"/><stop offset="0.1682" stop-color="#9dff3a"/><stop offset="0.2394" stop-color="#fdff38"/><stop offset="0.2423" stop-color="#fffc37"/><stop offset="0.2651" stop-color="#ffde30"/><stop offset="0.2879" stop-color="#ffc52a"/><stop offset="0.3420" stop-color="#ff981f"/><stop offset="0.4076" stop-color="#ff7216"/><stop offset="0.4874" stop-color="#ff520f"/><stop offset="0.5843" stop-color="#ff3808"/><stop offset="0.6983" stop-color="#ff2203"/><stop offset="0.8351" stop-color="#ff1000"/><stop offset="1.0004" stop-color="#ff0100"/></linearGradient><linearGradient id="i15" gradientUnits="userSpaceOnUse" x1="1149.88" y1="0" x2="1500.75" y2="0"><stop offset="0.0000" stop-color="#00ff42"/><stop offset="0.0200" stop-color="#01ff42"/><stop offset="0.0969" stop-color="#4cff41"/><stop offset="0.1653" stop-color="#9aff40"/><stop offset="0.2394" stop-color="#feff3e"/><stop offset="0.2423" stop-color="#fffc3d"/><stop offset="0.2651" stop-color="#ffdd36"/><stop offset="0.2879" stop-color="#ffc42f"/><stop offset="0.3420" stop-color="#ff9724"/><stop offset="0.4076" stop-color="#ff711a"/><stop offset="0.4874" stop-color="#ff5212"/><stop offset="0.5843" stop-color="#ff370b"/><stop offset="0.6983" stop-color="#ff2105"/><stop offset="0.8351" stop-color="#ff0f01"/><stop offset="1.0004" stop-color="#ff0000"/></linearGradient><linearGradient id="i16" gradientUnits="userSpaceOnUse" x1="1149.88" y1="0" x2="1500.75" y2="0"><stop offset="0.0000" stop-color="#00ff47"/><stop offset="0.0200" stop-color="#00ff47"/><stop offset="0.0998" stop-color="#4fff46"/><stop offset="0.1739" stop-color="#a5ff46"/><stop offset="0.2394" stop-color="#ffff45"/><stop offset="0.2622" stop-color="#ffe03c"/><stop offset="0.2850" stop-color="#ffc735"/><stop offset="0.3392" stop-color="#ff9829"/><stop offset="0.4047" stop-color="#ff721e"/><stop offset="0.4845" stop-color="#ff5215"/><stop offset="0.5814" stop-color="#ff370d"/><stop offset="0.6954" stop-color="#ff2107"/><stop offset="0.8351" stop-color="#ff0f02"/><stop offset="1.0004" stop-color="#ff0000"/></linearGradient><linearGradient id="i17" gradientUnits="userSpaceOnUse" x1="1149.88" y1="0" x2="1500.75" y2="0"><stop offset="0.0000" stop-color="#00ff4c"/><stop offset="0.0228" stop-color="#02ff4c"/><stop offset="0.0969" stop-color="#4bff4c"/><stop offset="0.1682" stop-color="#9eff4c"/><stop offset="0.2394" stop-color="#fffe4b"/><stop offset="0.2622" stop-color="#ffdf42"/><stop offset="0.2850" stop-color="#ffc63b"/><stop offset="0.3392" stop-color="#ff982d"/><stop offset="0.4047" stop-color="#ff7121"/><stop offset="0.4845" stop-color="#ff5118"/><stop offset="0.5814" stop-color="#ff3610"/><stop offset="0.6954" stop-color="#ff2109"/><stop offset="0.8379" stop-color="#ff0e04"/><stop offset="1.0004" stop-color="#ff0000"/></linearGradient><linearGradient id="i18" gradientUnits="userSpaceOnUse" x1="1149.88" y1="0" x2="1500.75" y2="0"><stop offset="0.0000" stop-color="#00ff51"/><stop offset="0.0228" stop-color="#01ff51"/><stop offset="0.0941" stop-color="#48ff52"/><stop offset="0.1653" stop-color="#9aff52"/><stop offset="0.2394" stop-color="#fffd52"/><stop offset="0.2622" stop-color="#ffde48"/><stop offset="0.2850" stop-color="#ffc540"/><stop offset="0.3392" stop-color="#ff9731"/><stop offset="0.4047" stop-color="#ff7025"/><stop offset="0.4845" stop-color="#ff501b"/><stop offset="0.5814" stop-color="#ff3612"/><stop offset="0.6983" stop-color="#ff200b"/><stop offset="0.8465" stop-color="#ff0d05"/><stop offset="1.0004" stop-color="#ff0001"/></linearGradient><linearGradient id="i19" gradientUnits="userSpaceOnUse" x1="1149.88" y1="0" x2="1500.75" y2="0"><stop offset="0.0000" stop-color="#00ff56"/><stop offset="0.0228" stop-color="#00ff57"/><stop offset="0.0912" stop-color="#44ff57"/><stop offset="0.1625" stop-color="#97ff58"/><stop offset="0.2394" stop-color="#fffd59"/><stop offset="0.2622" stop-color="#ffde4e"/><stop offset="0.2850" stop-color="#ffc445"/><stop offset="0.3392" stop-color="#ff9636"/><stop offset="0.4047" stop-color="#ff7029"/><stop offset="0.4845" stop-color="#ff501e"/><stop offset="0.5814" stop-color="#ff3515"/><stop offset="0.6983" stop-color="#ff1f0d"/><stop offset="0.8522" stop-color="#ff0c07"/><stop offset="1.0004" stop-color="#ff0002"/></linearGradient><linearGradient id="i20" gradientUnits="userSpaceOnUse" x1="1149.88" y1="0" x2="1500.75" y2="0"><stop offset="0.0000" stop-color="#00ff5c"/><stop offset="0.0228" stop-color="#00ff5c"/><stop offset="0.0884" stop-color="#41ff5d"/><stop offset="0.1596" stop-color="#93ff5f"/><stop offset="0.1995" stop-color="#c8ff5f"/><stop offset="0.2366" stop-color="#feff60"/><stop offset="0.2394" stop-color="#fffc5f"/><stop offset="0.2622" stop-color="#ffdd54"/><stop offset="0.2850" stop-color="#ffc34b"/><stop offset="0.3392" stop-color="#ff953a"/><stop offset="0.4047" stop-color="#ff6f2c"/><stop offset="0.4845" stop-color="#ff4f21"/><stop offset="0.5814" stop-color="#ff3417"/><stop offset="0.7011" stop-color="#ff1e0f"/><stop offset="0.8579" stop-color="#ff0b08"/><stop offset="1.0004" stop-color="#ff0004"/></linearGradient><linearGradient id="i21" gradientUnits="userSpaceOnUse" x1="1149.88" y1="0" x2="1500.75" y2="0"><stop offset="0.0000" stop-color="#00ff61"/><stop offset="0.0257" stop-color="#01ff62"/><stop offset="0.0912" stop-color="#43ff63"/><stop offset="0.1682" stop-color="#9eff65"/><stop offset="0.2366" stop-color="#ffff68"/><stop offset="0.2594" stop-color="#ffdf5b"/><stop offset="0.2822" stop-color="#ffc551"/><stop offset="0.3363" stop-color="#ff963f"/><stop offset="0.4019" stop-color="#ff6f31"/><stop offset="0.4817" stop-color="#ff4f24"/><stop offset="0.5814" stop-color="#ff341a"/><stop offset="0.7011" stop-color="#ff1e11"/><stop offset="0.8636" stop-color="#ff0a0a"/><stop offset="1.0004" stop-color="#ff0005"/></linearGradient><linearGradient id="i22" gradientUnits="userSpaceOnUse" x1="1149.88" y1="0" x2="1500.75" y2="0"><stop offset="0.0000" stop-color="#00ff66"/><stop offset="0.0257" stop-color="#00ff67"/><stop offset="0.0884" stop-color="#40ff69"/><stop offset="0.1653" stop-color="#9aff6c"/><stop offset="0.2366" stop-color="#fffe6e"/><stop offset="0.2594" stop-color="#ffde62"/><stop offset="0.2822" stop-color="#ffc457"/><stop offset="0.3363" stop-color="#ff9544"/><stop offset="0.4019" stop-color="#ff6e34"/><stop offset="0.4817" stop-color="#ff4e27"/><stop offset="0.5814" stop-color="#ff331c"/><stop offset="0.7040" stop-color="#ff1d13"/><stop offset="0.8721" stop-color="#ff080b"/><stop offset="1.0004" stop-color="#ff0007"/></linearGradient><linearGradient id="i23" gradientUnits="userSpaceOnUse" x1="1149.88" y1="0" x2="1500.75" y2="0"><stop offset="0.0000" stop-color="#00ff6c"/><stop offset="0.0257" stop-color="#00ff6d"/><stop offset="0.0855" stop-color="#3cff6f"/><stop offset="0.1625" stop-color="#97ff72"/><stop offset="0.2366" stop-color="#fffe75"/><stop offset="0.2594" stop-color="#ffde68"/><stop offset="0.2822" stop-color="#ffc35d"/><stop offset="0.3363" stop-color="#ff9449"/><stop offset="0.4019" stop-color="#ff6e38"/><stop offset="0.4817" stop-color="#ff4e2a"/><stop offset="0.5814" stop-color="#ff321f"/><stop offset="0.7040" stop-color="#ff1c15"/><stop offset="0.8807" stop-color="#ff070c"/><stop offset="1.0004" stop-color="#ff0008"/></linearGradient><linearGradient id="i24" gradientUnits="userSpaceOnUse" x1="1149.88" y1="0" x2="1500.75" y2="0"><stop offset="0.0000" stop-color="#00ff71"/><stop offset="0.0285" stop-color="#01ff73"/><stop offset="0.0827" stop-color="#38ff75"/><stop offset="0.1596" stop-color="#93ff79"/><stop offset="0.2366" stop-color="#fffd7c"/><stop offset="0.2594" stop-color="#ffdd6e"/><stop offset="0.2822" stop-color="#ffc262"/><stop offset="0.3363" stop-color="#ff934d"/><stop offset="0.4019" stop-color="#ff6d3c"/><stop offset="0.4817" stop-color="#ff4d2d"/><stop offset="0.5843" stop-color="#ff3121"/><stop offset="0.7068" stop-color="#ff1b17"/><stop offset="0.8892" stop-color="#ff060d"/><stop offset="1.0004" stop-color="#ff0009"/></linearGradient><linearGradient id="i25" gradientUnits="userSpaceOnUse" x1="1149.88" y1="0" x2="1500.75" y2="0"><stop offset="0.0000" stop-color="#00ff77"/><stop offset="0.0285" stop-color="#01ff78"/><stop offset="0.0798" stop-color="#35ff7b"/><stop offset="0.1568" stop-color="#8fff7f"/><stop offset="0.1967" stop-color="#c6ff82"/><stop offset="0.2337" stop-color="#feff85"/><stop offset="0.2366" stop-color="#fffc83"/><stop offset="0.2594" stop-color="#ffdc74"/><stop offset="0.2822" stop-color="#ffc168"/><stop offset="0.3363" stop-color="#ff9352"/><stop offset="0.4019" stop-color="#ff6c40"/><stop offset="0.4817" stop-color="#ff4c30"/><stop offset="0.5843" stop-color="#ff3023"/><stop offset="0.7097" stop-color="#ff1a19"/><stop offset="0.8978" stop-color="#ff040f"/><stop offset="1.0004" stop-color="#ff000b"/></linearGradient><linearGradient id="i26" gradientUnits="userSpaceOnUse" x1="1149.88" y1="0" x2="1500.75" y2="0"><stop offset="0.0000" stop-color="#00ff7d"/><stop offset="0.0285" stop-color="#00ff7e"/><stop offset="0.0827" stop-color="#37ff81"/><stop offset="0.1625" stop-color="#97ff87"/><stop offset="0.2337" stop-color="#feff8c"/><stop offset="0.2565" stop-color="#ffdf7c"/><stop offset="0.2793" stop-color="#ffc46f"/><stop offset="0.3335" stop-color="#ff9457"/><stop offset="0.3990" stop-color="#ff6d44"/><stop offset="0.4788" stop-color="#ff4c34"/><stop offset="0.5814" stop-color="#ff3026"/><stop offset="0.7068" stop-color="#ff1a1b"/><stop offset="0.9035" stop-color="#ff0410"/><stop offset="1.0004" stop-color="#ff000c"/></linearGradient><linearGradient id="i27" gradientUnits="userSpaceOnUse" x1="1149.88" y1="0" x2="1500.75" y2="0"><stop offset="0.0000" stop-color="#00ff83"/><stop offset="0.0314" stop-color="#02ff84"/><stop offset="0.0798" stop-color="#33ff87"/><stop offset="0.1596" stop-color="#93ff8d"/><stop offset="0.1967" stop-color="#c7ff91"/><stop offset="0.2337" stop-color="#ffff94"/><stop offset="0.2565" stop-color="#ffde83"/><stop offset="0.2793" stop-color="#ffc375"/><stop offset="0.3335" stop-color="#ff935c"/><stop offset="0.3990" stop-color="#ff6c48"/><stop offset="0.4788" stop-color="#ff4c37"/><stop offset="0.5814" stop-color="#ff3029"/><stop offset="0.7097" stop-color="#ff191d"/><stop offset="0.9149" stop-color="#ff0211"/><stop offset="1.0004" stop-color="#ff000e"/></linearGradient><linearGradient id="i28" gradientUnits="userSpaceOnUse" x1="1149.88" y1="0" x2="1500.75" y2="0"><stop offset="0.0000" stop-color="#00ff88"/><stop offset="0.0314" stop-color="#01ff8a"/><stop offset="0.0798" stop-color="#33ff8e"/><stop offset="0.1596" stop-color="#93ff95"/><stop offset="0.2337" stop-color="#fffe9b"/><stop offset="0.2565" stop-color="#ffdd89"/><stop offset="0.2793" stop-color="#ffc27b"/><stop offset="0.3335" stop-color="#ff9261"/><stop offset="0.3990" stop-color="#ff6b4c"/><stop offset="0.4788" stop-color="#ff4b3a"/><stop offset="0.5843" stop-color="#ff2e2b"/><stop offset="0.7125" stop-color="#ff181f"/><stop offset="0.9263" stop-color="#ff0112"/><stop offset="1.0004" stop-color="#ff000f"/></linearGradient><linearGradient id="i29" gradientUnits="userSpaceOnUse" x1="1149.88" y1="0" x2="1500.75" y2="0"><stop offset="0.0000" stop-color="#00ff8e"/><stop offset="0.0314" stop-color="#00ff90"/><stop offset="0.0770" stop-color="#2fff94"/><stop offset="0.1568" stop-color="#8fff9b"/><stop offset="0.2337" stop-color="#fffda3"/><stop offset="0.2565" stop-color="#ffdc90"/><stop offset="0.2793" stop-color="#ffc181"/><stop offset="0.3335" stop-color="#ff9166"/><stop offset="0.3990" stop-color="#ff6a50"/><stop offset="0.4788" stop-color="#ff4a3d"/><stop offset="0.5843" stop-color="#ff2e2d"/><stop offset="0.7125" stop-color="#ff1721"/><stop offset="0.9263" stop-color="#ff0014"/><stop offset="1.0004" stop-color="#ff0010"/></linearGradient><linearGradient id="i30" gradientUnits="userSpaceOnUse" x1="1149.88" y1="0" x2="1500.75" y2="0"><stop offset="0.0000" stop-color="#00ff94"/><stop offset="0.0342" stop-color="#02ff97"/><stop offset="0.0741" stop-color="#2bff9a"/><stop offset="0.1539" stop-color="#8bffa2"/><stop offset="0.1938" stop-color="#c4ffa7"/><stop offset="0.2309" stop-color="#fdffac"/><stop offset="0.2337" stop-color="#fffcaa"/><stop offset="0.2565" stop-color="#ffdb97"/><stop offset="0.2793" stop-color="#ffc087"/><stop offset="0.3335" stop-color="#ff906a"/><stop offset="0.3990" stop-color="#ff6953"/><stop offset="0.4788" stop-color="#ff4941"/><stop offset="0.5843" stop-color="#ff2d30"/><stop offset="0.7154" stop-color="#ff1623"/><stop offset="0.9206" stop-color="#ff0015"/><stop offset="1.0004" stop-color="#ff0012"/></linearGradient><linearGradient id="i31" gradientUnits="userSpaceOnUse" x1="1149.88" y1="0" x2="1500.75" y2="0"><stop offset="0.0000" stop-color="#00ff9a"/><stop offset="0.0342" stop-color="#01ff9d"/><stop offset="0.0713" stop-color="#27ffa1"/><stop offset="0.1511" stop-color="#88ffa9"/><stop offset="0.1910" stop-color="#c0ffae"/><stop offset="0.2309" stop-color="#feffb4"/><stop offset="0.2337" stop-color="#fffbb2"/><stop offset="0.2565" stop-color="#ffda9d"/><stop offset="0.2793" stop-color="#ffbf8d"/><stop offset="0.3335" stop-color="#ff8f6f"/><stop offset="0.3990" stop-color="#ff6857"/><stop offset="0.4788" stop-color="#ff4844"/><stop offset="0.5871" stop-color="#ff2c32"/><stop offset="0.7182" stop-color="#ff1524"/><stop offset="0.9149" stop-color="#ff0017"/><stop offset="1.0004" stop-color="#ff0013"/></linearGradient><linearGradient id="i32" gradientUnits="userSpaceOnUse" x1="1149.88" y1="0" x2="1500.75" y2="0"><stop offset="0.0000" stop-color="#00ffa0"/><stop offset="0.0342" stop-color="#00ffa4"/><stop offset="0.0741" stop-color="#2affa8"/><stop offset="0.1169" stop-color="#5cffad"/><stop offset="0.1568" stop-color="#8fffb2"/><stop offset="0.1938" stop-color="#c4ffb7"/><stop offset="0.2309" stop-color="#ffffbc"/><stop offset="0.2508" stop-color="#ffe1a9"/><stop offset="0.2736" stop-color="#ffc497"/><stop offset="0.2993" stop-color="#ffaa86"/><stop offset="0.3278" stop-color="#ff9277"/><stop offset="0.3933" stop-color="#ff6a5d"/><stop offset="0.4760" stop-color="#ff4948"/><stop offset="0.5843" stop-color="#ff2c35"/><stop offset="0.7182" stop-color="#ff1526"/><stop offset="0.9120" stop-color="#ff0019"/><stop offset="1.0004" stop-color="#ff0015"/></linearGradient><linearGradient id="i33" gradientUnits="userSpaceOnUse" x1="1149.88" y1="0" x2="1500.75" y2="0"><stop offset="0.0000" stop-color="#00ffa6"/><stop offset="0.0342" stop-color="#00ffaa"/><stop offset="0.0713" stop-color="#26ffae"/><stop offset="0.1140" stop-color="#58ffb3"/><stop offset="0.1539" stop-color="#8bffb9"/><stop offset="0.1910" stop-color="#c0ffbe"/><stop offset="0.2309" stop-color="#fffec4"/><stop offset="0.2508" stop-color="#ffe0b0"/><stop offset="0.2736" stop-color="#ffc39d"/><stop offset="0.2993" stop-color="#ffa98c"/><stop offset="0.3278" stop-color="#ff917c"/><stop offset="0.3933" stop-color="#ff6961"/><stop offset="0.4760" stop-color="#ff484b"/><stop offset="0.5843" stop-color="#ff2b38"/><stop offset="0.7182" stop-color="#ff1428"/><stop offset="0.9063" stop-color="#ff001b"/><stop offset="1.0004" stop-color="#ff0016"/></linearGradient><linearGradient id="i34" gradientUnits="userSpaceOnUse" x1="1149.88" y1="0" x2="1500.75" y2="0"><stop offset="0.0000" stop-color="#00ffad"/><stop offset="0.0371" stop-color="#01ffb1"/><stop offset="0.0684" stop-color="#22ffb5"/><stop offset="0.1112" stop-color="#54ffba"/><stop offset="0.1511" stop-color="#87ffc0"/><stop offset="0.1853" stop-color="#b8ffc5"/><stop offset="0.2309" stop-color="#fffdcc"/><stop offset="0.2508" stop-color="#ffdfb7"/><stop offset="0.2736" stop-color="#ffc2a3"/><stop offset="0.2993" stop-color="#ffa891"/><stop offset="0.3278" stop-color="#ff9181"/><stop offset="0.3933" stop-color="#ff6865"/><stop offset="0.4760" stop-color="#ff474e"/><stop offset="0.5843" stop-color="#ff2a3a"/><stop offset="0.7211" stop-color="#ff132a"/><stop offset="0.9006" stop-color="#ff001d"/><stop offset="1.0004" stop-color="#ff0017"/></linearGradient><linearGradient id="i35" gradientUnits="userSpaceOnUse" x1="1149.88" y1="0" x2="1500.75" y2="0"><stop offset="0.0000" stop-color="#00ffb3"/><stop offset="0.0371" stop-color="#00ffb7"/><stop offset="0.0656" stop-color="#1effbb"/><stop offset="0.1083" stop-color="#50ffc1"/><stop offset="0.1482" stop-color="#83ffc7"/><stop offset="0.1881" stop-color="#bdffce"/><stop offset="0.2280" stop-color="#fdffd6"/><stop offset="0.2309" stop-color="#fffcd4"/><stop offset="0.2508" stop-color="#ffdebe"/><stop offset="0.2736" stop-color="#ffc1aa"/><stop offset="0.2993" stop-color="#ffa797"/><stop offset="0.3278" stop-color="#ff9086"/><stop offset="0.3933" stop-color="#ff6869"/><stop offset="0.4760" stop-color="#ff4651"/><stop offset="0.5871" stop-color="#ff293c"/><stop offset="0.7239" stop-color="#ff122c"/><stop offset="0.8949" stop-color="#ff001f"/><stop offset="1.0004" stop-color="#ff0019"/></linearGradient><linearGradient id="i36" gradientUnits="userSpaceOnUse" x1="1149.88" y1="0" x2="1500.75" y2="0"><stop offset="0.0000" stop-color="#00ffb9"/><stop offset="0.0371" stop-color="#00ffbe"/><stop offset="0.0627" stop-color="#1affc2"/><stop offset="0.1055" stop-color="#4cffc8"/><stop offset="0.1454" stop-color="#7fffcf"/><stop offset="0.1881" stop-color="#bdffd7"/><stop offset="0.2280" stop-color="#feffdf"/><stop offset="0.2309" stop-color="#fffbdc"/><stop offset="0.2508" stop-color="#ffddc5"/><stop offset="0.2736" stop-color="#ffc0b0"/><stop offset="0.2993" stop-color="#ffa69d"/><stop offset="0.3278" stop-color="#ff8f8b"/><stop offset="0.3933" stop-color="#ff676d"/><stop offset="0.4760" stop-color="#ff4555"/><stop offset="0.5871" stop-color="#ff283f"/><stop offset="0.7268" stop-color="#ff112e"/><stop offset="0.8892" stop-color="#ff0021"/><stop offset="1.0004" stop-color="#ff001a"/></linearGradient><linearGradient id="i37" gradientUnits="userSpaceOnUse" x1="1149.88" y1="0" x2="1500.75" y2="0"><stop offset="0.0000" stop-color="#00ffc0"/><stop offset="0.0399" stop-color="#01ffc5"/><stop offset="0.0656" stop-color="#1dffc9"/><stop offset="0.1083" stop-color="#4fffd0"/><stop offset="0.1511" stop-color="#87ffd8"/><stop offset="0.1910" stop-color="#c2ffe0"/><stop offset="0.2280" stop-color="#ffffe8"/><stop offset="0.2480" stop-color="#ffe0d0"/><stop offset="0.2708" stop-color="#ffc3b9"/><stop offset="0.2964" stop-color="#ffa8a5"/><stop offset="0.3249" stop-color="#ff9092"/><stop offset="0.3905" stop-color="#ff6773"/><stop offset="0.4731" stop-color="#ff4659"/><stop offset="0.5843" stop-color="#ff2842"/><stop offset="0.7239" stop-color="#ff1130"/><stop offset="0.8835" stop-color="#ff0023"/><stop offset="1.0004" stop-color="#ff001c"/></linearGradient><linearGradient id="i38" gradientUnits="userSpaceOnUse" x1="1149.88" y1="0" x2="1500.75" y2="0"><stop offset="0.0000" stop-color="#00ffc6"/><stop offset="0.0399" stop-color="#00ffcc"/><stop offset="0.0656" stop-color="#1cffd0"/><stop offset="0.1083" stop-color="#4effd8"/><stop offset="0.1511" stop-color="#87ffe0"/><stop offset="0.1881" stop-color="#beffe8"/><stop offset="0.2280" stop-color="#fffef0"/><stop offset="0.2480" stop-color="#ffdfd7"/><stop offset="0.2708" stop-color="#ffc2c0"/><stop offset="0.2964" stop-color="#ffa7aa"/><stop offset="0.3249" stop-color="#ff8f97"/><stop offset="0.3905" stop-color="#ff6677"/><stop offset="0.4731" stop-color="#ff455c"/><stop offset="0.5843" stop-color="#ff2845"/><stop offset="0.7268" stop-color="#ff1032"/><stop offset="0.8778" stop-color="#ff0025"/><stop offset="1.0004" stop-color="#ff001d"/></linearGradient><linearGradient id="i39" gradientUnits="userSpaceOnUse" x1="1149.88" y1="0" x2="1500.75" y2="0"><stop offset="0.0000" stop-color="#00ffcd"/><stop offset="0.0399" stop-color="#00ffd3"/><stop offset="0.0627" stop-color="#18ffd7"/><stop offset="0.1055" stop-color="#4affdf"/><stop offset="0.1482" stop-color="#83ffe7"/><stop offset="0.1853" stop-color="#bafff0"/><stop offset="0.2280" stop-color="#fffdf9"/><stop offset="0.2480" stop-color="#ffdedf"/><stop offset="0.2708" stop-color="#ffc1c6"/><stop offset="0.2964" stop-color="#ffa6b0"/><stop offset="0.3249" stop-color="#ff8e9c"/><stop offset="0.3905" stop-color="#ff657b"/><stop offset="0.4731" stop-color="#ff445f"/><stop offset="0.5871" stop-color="#ff2647"/><stop offset="0.7296" stop-color="#ff0f33"/><stop offset="0.8721" stop-color="#ff0027"/><stop offset="1.0004" stop-color="#ff001f"/></linearGradient><linearGradient id="i40" gradientUnits="userSpaceOnUse" x1="1149.88" y1="0" x2="1500.75" y2="0"><stop offset="0.0000" stop-color="#00ffd4"/><stop offset="0.0399" stop-color="#00ffda"/><stop offset="0.0542" stop-color="#0dffdd"/><stop offset="0.0969" stop-color="#3fffe5"/><stop offset="0.1368" stop-color="#73ffed"/><stop offset="0.1739" stop-color="#a8fff6"/><stop offset="0.2081" stop-color="#dffffe"/><stop offset="0.2309" stop-color="#fff7fd"/><stop offset="0.2508" stop-color="#ffd9e3"/><stop offset="0.2736" stop-color="#ffbcca"/><stop offset="0.2993" stop-color="#ffa2b4"/><stop offset="0.3278" stop-color="#ff8ba0"/><stop offset="0.3933" stop-color="#ff637e"/><stop offset="0.4760" stop-color="#ff4262"/><stop offset="0.5900" stop-color="#ff2549"/><stop offset="0.7353" stop-color="#ff0e35"/><stop offset="0.8664" stop-color="#ff0029"/><stop offset="1.0004" stop-color="#ff0020"/></linearGradient><linearGradient id="i41" gradientUnits="userSpaceOnUse" x1="1149.88" y1="0" x2="1500.75" y2="0"><stop offset="0.0000" stop-color="#00ffdb"/><stop offset="0.0428" stop-color="#00ffe2"/><stop offset="0.1112" stop-color="#51fff0"/><stop offset="0.1739" stop-color="#a9ffff"/><stop offset="0.2366" stop-color="#ffedfd"/><stop offset="0.2594" stop-color="#ffcce0"/><stop offset="0.2822" stop-color="#ffb2c9"/><stop offset="0.3363" stop-color="#ff84a0"/><stop offset="0.4019" stop-color="#ff5e7e"/><stop offset="0.4845" stop-color="#ff3f63"/><stop offset="0.6014" stop-color="#ff2249"/><stop offset="0.7467" stop-color="#ff0c36"/><stop offset="0.8607" stop-color="#ff002b"/><stop offset="1.0004" stop-color="#ff0022"/></linearGradient><linearGradient id="i42" gradientUnits="userSpaceOnUse" x1="1149.88" y1="0" x2="1500.75" y2="0"><stop offset="0.0000" stop-color="#00ffe2"/><stop offset="0.0456" stop-color="#02ffea"/><stop offset="0.0941" stop-color="#3afff4"/><stop offset="0.1425" stop-color="#7affff"/><stop offset="0.2423" stop-color="#ffe3fd"/><stop offset="0.2651" stop-color="#ffc4e1"/><stop offset="0.2879" stop-color="#ffabca"/><stop offset="0.3420" stop-color="#ff7fa1"/><stop offset="0.4076" stop-color="#ff5b80"/><stop offset="0.4902" stop-color="#ff3c64"/><stop offset="0.6071" stop-color="#ff204b"/><stop offset="0.7553" stop-color="#ff0a37"/><stop offset="0.8550" stop-color="#ff002d"/><stop offset="1.0004" stop-color="#ff0023"/></linearGradient><linearGradient id="i43" gradientUnits="userSpaceOnUse" x1="1149.88" y1="0" x2="1500.75" y2="0"><stop offset="0.0000" stop-color="#00ffe9"/><stop offset="0.0456" stop-color="#01fff1"/><stop offset="0.1083" stop-color="#4cffff"/><stop offset="0.2480" stop-color="#ffdafd"/><stop offset="0.2708" stop-color="#ffbce2"/><stop offset="0.2936" stop-color="#ffa4cb"/><stop offset="0.3477" stop-color="#ff7aa3"/><stop offset="0.4133" stop-color="#ff5782"/><stop offset="0.4959" stop-color="#ff3a66"/><stop offset="0.6156" stop-color="#ff1e4c"/><stop offset="0.7638" stop-color="#ff0938"/><stop offset="0.8493" stop-color="#ff002f"/><stop offset="1.0004" stop-color="#ff0024"/></linearGradient><linearGradient id="i44" gradientUnits="userSpaceOnUse" x1="1149.88" y1="0" x2="1500.75" y2="0"><stop offset="0.0000" stop-color="#00fff0"/><stop offset="0.0456" stop-color="#00fff9"/><stop offset="0.0741" stop-color="#21ffff"/><stop offset="0.1568" stop-color="#84ebff"/><stop offset="0.2537" stop-color="#ffd1fe"/><stop offset="0.2765" stop-color="#ffb5e2"/><stop offset="0.2993" stop-color="#ff9ecc"/><stop offset="0.3534" stop-color="#ff75a4"/><stop offset="0.4218" stop-color="#ff5382"/><stop offset="0.5045" stop-color="#ff3767"/><stop offset="0.6242" stop-color="#ff1c4d"/><stop offset="0.7781" stop-color="#ff0738"/><stop offset="0.8465" stop-color="#ff0031"/><stop offset="1.0004" stop-color="#ff0026"/></linearGradient><linearGradient id="i45" gradientUnits="userSpaceOnUse" x1="1149.88" y1="0" x2="1500.75" y2="0"><stop offset="0.0000" stop-color="#00fff7"/><stop offset="0.0485" stop-color="#02fdff"/><stop offset="0.1482" stop-color="#75e5ff"/><stop offset="0.2594" stop-color="#ffc8fe"/><stop offset="0.3050" stop-color="#ff98cd"/><stop offset="0.3620" stop-color="#ff6fa4"/><stop offset="0.4304" stop-color="#ff4e83"/><stop offset="0.5102" stop-color="#ff3468"/><stop offset="0.6327" stop-color="#ff1a4e"/><stop offset="0.7866" stop-color="#ff0539"/><stop offset="0.8408" stop-color="#ff0034"/><stop offset="1.0004" stop-color="#ff0027"/></linearGradient><linearGradient id="i46" gradientUnits="userSpaceOnUse" x1="1149.88" y1="0" x2="1500.75" y2="0"><stop offset="0.0000" stop-color="#00fffe"/><stop offset="0.0485" stop-color="#01f5ff"/><stop offset="0.1511" stop-color="#75deff"/><stop offset="0.2651" stop-color="#ffc0fe"/><stop offset="0.3107" stop-color="#ff92ce"/><stop offset="0.3677" stop-color="#ff6ba5"/><stop offset="0.4361" stop-color="#ff4b84"/><stop offset="0.5187" stop-color="#ff3169"/><stop offset="0.6441" stop-color="#ff174e"/><stop offset="0.8009" stop-color="#ff033a"/><stop offset="0.8351" stop-color="#ff0036"/><stop offset="1.0004" stop-color="#ff0029"/></linearGradient><linearGradient id="i47" gradientUnits="userSpaceOnUse" x1="1149.88" y1="0" x2="1500.75" y2="0"><stop offset="0.0000" stop-color="#00f9ff"/><stop offset="0.0485" stop-color="#00eeff"/><stop offset="0.1568" stop-color="#78d5ff"/><stop offset="0.2708" stop-color="#ffb8fe"/><stop offset="0.3135" stop-color="#ff8fd1"/><stop offset="0.3677" stop-color="#ff6aaa"/><stop offset="0.4304" stop-color="#ff4d8a"/><stop offset="0.5073" stop-color="#ff3370"/><stop offset="0.6327" stop-color="#ff1953"/><stop offset="0.7895" stop-color="#ff043d"/><stop offset="0.8294" stop-color="#ff0038"/><stop offset="1.0004" stop-color="#ff002a"/></linearGradient><linearGradient id="i48" gradientUnits="userSpaceOnUse" x1="1149.88" y1="0" x2="1500.75" y2="0"><stop offset="0.0000" stop-color="#00f2ff"/><stop offset="0.0513" stop-color="#02e7ff"/><stop offset="0.1596" stop-color="#77ceff"/><stop offset="0.2765" stop-color="#ffb1fe"/><stop offset="0.3192" stop-color="#ff89d2"/><stop offset="0.3734" stop-color="#ff66ab"/><stop offset="0.4361" stop-color="#ff498c"/><stop offset="0.5130" stop-color="#ff3171"/><stop offset="0.6384" stop-color="#ff1754"/><stop offset="0.8009" stop-color="#ff023d"/><stop offset="1.0004" stop-color="#ff002c"/></linearGradient><linearGradient id="i49" gradientUnits="userSpaceOnUse" x1="1149.88" y1="0" x2="1500.75" y2="0"><stop offset="0.0000" stop-color="#00ebff"/><stop offset="0.0513" stop-color="#01e0ff"/><stop offset="0.1625" stop-color="#77c7ff"/><stop offset="0.2822" stop-color="#ffa9fe"/><stop offset="0.3278" stop-color="#ff82d1"/><stop offset="0.3791" stop-color="#ff62ad"/><stop offset="0.4418" stop-color="#ff468d"/><stop offset="0.5187" stop-color="#ff2f73"/><stop offset="0.6470" stop-color="#ff1555"/><stop offset="0.8123" stop-color="#ff003e"/><stop offset="1.0004" stop-color="#ff002d"/></linearGradient><linearGradient id="i50" gradientUnits="userSpaceOnUse" x1="1149.88" y1="0" x2="1500.75" y2="0"><stop offset="0.0000" stop-color="#00e5ff"/><stop offset="0.0513" stop-color="#00daff"/><stop offset="0.1653" stop-color="#76c1ff"/><stop offset="0.2879" stop-color="#ffa3fe"/><stop offset="0.3335" stop-color="#ff7cd1"/><stop offset="0.3848" stop-color="#ff5eae"/><stop offset="0.4475" stop-color="#ff438f"/><stop offset="0.5244" stop-color="#ff2d74"/><stop offset="0.6498" stop-color="#ff1457"/><stop offset="0.8094" stop-color="#ff0040"/><stop offset="1.0004" stop-color="#ff002f"/></linearGradient><linearGradient id="i51" gradientUnits="userSpaceOnUse" x1="1149.88" y1="0" x2="1500.75" y2="0"><stop offset="0.0000" stop-color="#00dfff"/><stop offset="0.0542" stop-color="#02d3ff"/><stop offset="0.1710" stop-color="#79baff"/><stop offset="0.2936" stop-color="#ff9cfe"/><stop offset="0.3392" stop-color="#ff77d2"/><stop offset="0.3905" stop-color="#ff5aaf"/><stop offset="0.4532" stop-color="#ff4190"/><stop offset="0.5301" stop-color="#ff2a75"/><stop offset="0.6527" stop-color="#ff1359"/><stop offset="0.8037" stop-color="#ff0043"/><stop offset="1.0004" stop-color="#ff0030"/></linearGradient><linearGradient id="i52" gradientUnits="userSpaceOnUse" x1="1149.88" y1="0" x2="1500.75" y2="0"><stop offset="0.0000" stop-color="#00d9ff"/><stop offset="0.0542" stop-color="#01ceff"/><stop offset="0.1739" stop-color="#78b4ff"/><stop offset="0.2993" stop-color="#ff95fe"/><stop offset="0.3449" stop-color="#ff73d3"/><stop offset="0.3990" stop-color="#ff55ae"/><stop offset="0.4617" stop-color="#ff3d90"/><stop offset="0.5358" stop-color="#ff2877"/><stop offset="0.6527" stop-color="#ff125b"/><stop offset="0.7980" stop-color="#ff0045"/><stop offset="1.0004" stop-color="#ff0032"/></linearGradient><linearGradient id="i53" gradientUnits="userSpaceOnUse" x1="1149.88" y1="0" x2="1500.75" y2="0"><stop offset="0.0000" stop-color="#00d3ff"/><stop offset="0.0542" stop-color="#00c8ff"/><stop offset="0.1767" stop-color="#78aeff"/><stop offset="0.3050" stop-color="#ff8ffe"/><stop offset="0.3506" stop-color="#ff6ed4"/><stop offset="0.4047" stop-color="#ff52b0"/><stop offset="0.4674" stop-color="#ff3a92"/><stop offset="0.5415" stop-color="#ff2678"/><stop offset="0.6527" stop-color="#ff115e"/><stop offset="0.7923" stop-color="#ff0048"/><stop offset="1.0004" stop-color="#ff0033"/></linearGradient><linearGradient id="i54" gradientUnits="userSpaceOnUse" x1="1149.88" y1="0" x2="1500.75" y2="0"><stop offset="0.0000" stop-color="#00ceff"/><stop offset="0.0570" stop-color="#02c2ff"/><stop offset="0.1824" stop-color="#7aa7ff"/><stop offset="0.3107" stop-color="#ff89fe"/><stop offset="0.3563" stop-color="#ff69d4"/><stop offset="0.4104" stop-color="#ff4eb1"/><stop offset="0.4731" stop-color="#ff3793"/><stop offset="0.5472" stop-color="#ff2479"/><stop offset="0.6555" stop-color="#ff1060"/><stop offset="0.7866" stop-color="#ff004a"/><stop offset="1.0004" stop-color="#ff0035"/></linearGradient><linearGradient id="i55" gradientUnits="userSpaceOnUse" x1="1149.88" y1="0" x2="1500.75" y2="0"><stop offset="0.0000" stop-color="#00c8ff"/><stop offset="0.0570" stop-color="#01bdff"/><stop offset="0.1853" stop-color="#7aa2ff"/><stop offset="0.3164" stop-color="#ff84fe"/><stop offset="0.3620" stop-color="#ff65d5"/><stop offset="0.4161" stop-color="#ff4bb2"/><stop offset="0.4788" stop-color="#ff3594"/><stop offset="0.5529" stop-color="#ff227b"/><stop offset="0.6555" stop-color="#ff1062"/><stop offset="0.7809" stop-color="#ff004d"/><stop offset="1.0004" stop-color="#ff0036"/></linearGradient><linearGradient id="i56" gradientUnits="userSpaceOnUse" x1="1149.88" y1="0" x2="1500.75" y2="0"><stop offset="0.0000" stop-color="#00c3ff"/><stop offset="0.0570" stop-color="#00b8ff"/><stop offset="0.1881" stop-color="#799dff"/><stop offset="0.3221" stop-color="#ff7efe"/><stop offset="0.3677" stop-color="#ff61d6"/><stop offset="0.4218" stop-color="#ff48b3"/><stop offset="0.4845" stop-color="#ff3295"/><stop offset="0.5558" stop-color="#ff217d"/><stop offset="0.6555" stop-color="#ff0f64"/><stop offset="0.7781" stop-color="#ff0050"/><stop offset="1.0004" stop-color="#ff0038"/></linearGradient><linearGradient id="i57" gradientUnits="userSpaceOnUse" x1="1149.88" y1="0" x2="1500.75" y2="0"><stop offset="0.0000" stop-color="#00beff"/><stop offset="0.0599" stop-color="#02b3ff"/><stop offset="0.1938" stop-color="#7c97ff"/><stop offset="0.3278" stop-color="#ff79fe"/><stop offset="0.3734" stop-color="#ff5dd6"/><stop offset="0.4275" stop-color="#ff44b4"/><stop offset="0.4902" stop-color="#ff3097"/><stop offset="0.5615" stop-color="#ff1f7e"/><stop offset="0.6584" stop-color="#ff0e66"/><stop offset="0.7724" stop-color="#ff0052"/><stop offset="1.0004" stop-color="#ff0039"/></linearGradient><linearGradient id="i58" gradientUnits="userSpaceOnUse" x1="1149.88" y1="0" x2="1500.75" y2="0"><stop offset="0.0000" stop-color="#00baff"/><stop offset="0.0599" stop-color="#01aeff"/><stop offset="0.1967" stop-color="#7b92ff"/><stop offset="0.3335" stop-color="#ff74fe"/><stop offset="0.3791" stop-color="#ff59d7"/><stop offset="0.4332" stop-color="#ff41b5"/><stop offset="0.4959" stop-color="#ff2d98"/><stop offset="0.5672" stop-color="#ff1d7f"/><stop offset="0.6584" stop-color="#ff0d69"/><stop offset="0.7667" stop-color="#ff0055"/><stop offset="1.0004" stop-color="#ff003b"/></linearGradient><linearGradient id="i59" gradientUnits="userSpaceOnUse" x1="1149.88" y1="0" x2="1500.75" y2="0"><stop offset="0.0000" stop-color="#00b5ff"/><stop offset="0.0599" stop-color="#00aaff"/><stop offset="0.1995" stop-color="#7b8eff"/><stop offset="0.3392" stop-color="#ff6ffe"/><stop offset="0.3848" stop-color="#ff55d8"/><stop offset="0.4389" stop-color="#ff3eb6"/><stop offset="0.5016" stop-color="#ff2b99"/><stop offset="0.5729" stop-color="#ff1b81"/><stop offset="0.6584" stop-color="#ff0d6b"/><stop offset="0.7610" stop-color="#ff0058"/><stop offset="1.0004" stop-color="#ff003c"/></linearGradient><linearGradient id="i60" gradientUnits="userSpaceOnUse" x1="1149.88" y1="0" x2="1500.75" y2="0"><stop offset="0.0000" stop-color="#00b1ff"/><stop offset="0.0627" stop-color="#02a5ff"/><stop offset="0.2024" stop-color="#7a89ff"/><stop offset="0.3449" stop-color="#ff6afe"/><stop offset="0.3905" stop-color="#ff51d8"/><stop offset="0.4446" stop-color="#ff3bb7"/><stop offset="0.5073" stop-color="#ff299a"/><stop offset="0.5786" stop-color="#ff1982"/><stop offset="0.6612" stop-color="#ff0b6d"/><stop offset="0.7553" stop-color="#ff005b"/><stop offset="1.0004" stop-color="#ff003e"/></linearGradient><linearGradient id="i61" gradientUnits="userSpaceOnUse" x1="1149.88" y1="0" x2="1500.75" y2="0"><stop offset="0.0000" stop-color="#00adff"/><stop offset="0.0627" stop-color="#01a1ff"/><stop offset="0.2052" stop-color="#7a85ff"/><stop offset="0.3506" stop-color="#ff65ff"/><stop offset="0.3962" stop-color="#ff4ed9"/><stop offset="0.4503" stop-color="#ff39b8"/><stop offset="0.5102" stop-color="#ff279c"/><stop offset="0.5814" stop-color="#ff1884"/><stop offset="0.6584" stop-color="#ff0b70"/><stop offset="0.7496" stop-color="#ff005e"/><stop offset="1.0004" stop-color="#ff003f"/></linearGradient><linearGradient id="i62" gradientUnits="userSpaceOnUse" x1="1149.88" y1="0" x2="1500.75" y2="0"><stop offset="0.0000" stop-color="#00a9ff"/><stop offset="0.0627" stop-color="#009dff"/><stop offset="0.2109" stop-color="#7c80ff"/><stop offset="0.3563" stop-color="#ff61ff"/><stop offset="0.4019" stop-color="#ff4ad9"/><stop offset="0.4560" stop-color="#ff36b8"/><stop offset="0.5159" stop-color="#ff259d"/><stop offset="0.5871" stop-color="#ff1685"/><stop offset="0.7439" stop-color="#ff0061"/><stop offset="0.8607" stop-color="#ff0050"/><stop offset="1.0004" stop-color="#ff0041"/></linearGradient><linearGradient id="i63" gradientUnits="userSpaceOnUse" x1="1149.88" y1="0" x2="1500.75" y2="0"><stop offset="0.0000" stop-color="#00a5ff"/><stop offset="0.0656" stop-color="#0299ff"/><stop offset="0.2138" stop-color="#7b7cff"/><stop offset="0.3620" stop-color="#ff5dff"/><stop offset="0.4076" stop-color="#ff47da"/><stop offset="0.4617" stop-color="#ff33b9"/><stop offset="0.5216" stop-color="#ff239e"/><stop offset="0.5928" stop-color="#ff1486"/><stop offset="0.7382" stop-color="#ff0064"/><stop offset="0.8579" stop-color="#ff0052"/><stop offset="1.0004" stop-color="#ff0042"/></linearGradient><linearGradient id="i64" gradientUnits="userSpaceOnUse" x1="1149.88" y1="0" x2="1500.75" y2="0"><stop offset="0.0000" stop-color="#00a1ff"/><stop offset="0.0656" stop-color="#0195ff"/><stop offset="0.2166" stop-color="#7b78ff"/><stop offset="0.3677" stop-color="#ff58ff"/><stop offset="0.4133" stop-color="#ff43db"/><stop offset="0.4674" stop-color="#ff30ba"/><stop offset="0.5273" stop-color="#ff219f"/><stop offset="0.5985" stop-color="#ff1287"/><stop offset="0.7325" stop-color="#ff0068"/><stop offset="0.8550" stop-color="#ff0054"/><stop offset="1.0004" stop-color="#ff0044"/></linearGradient><linearGradient id="i65" gradientUnits="userSpaceOnUse" x1="1149.88" y1="0" x2="1500.75" y2="0"><stop offset="0.0000" stop-color="#009dff"/><stop offset="0.0656" stop-color="#0091ff"/><stop offset="0.2195" stop-color="#7b74ff"/><stop offset="0.3734" stop-color="#ff54ff"/><stop offset="0.4190" stop-color="#ff40db"/><stop offset="0.4731" stop-color="#ff2ebb"/><stop offset="0.5330" stop-color="#ff1fa0"/><stop offset="0.6014" stop-color="#ff1189"/><stop offset="0.7268" stop-color="#ff006b"/><stop offset="0.8522" stop-color="#ff0056"/><stop offset="1.0004" stop-color="#ff0045"/></linearGradient><linearGradient id="i66" gradientUnits="userSpaceOnUse" x1="1149.88" y1="0" x2="1500.75" y2="0"><stop offset="0.0000" stop-color="#0099ff"/><stop offset="0.0656" stop-color="#008eff"/><stop offset="0.2223" stop-color="#7a70ff"/><stop offset="0.3791" stop-color="#ff50ff"/><stop offset="0.4247" stop-color="#ff3ddc"/><stop offset="0.4788" stop-color="#ff2bbc"/><stop offset="0.5387" stop-color="#ff1ca1"/><stop offset="0.6071" stop-color="#ff108a"/><stop offset="0.7211" stop-color="#ff006e"/><stop offset="0.8493" stop-color="#ff0059"/><stop offset="1.0004" stop-color="#ff0047"/></linearGradient><linearGradient id="i67" gradientUnits="userSpaceOnUse" x1="1149.88" y1="0" x2="1500.75" y2="0"><stop offset="0.0000" stop-color="#0096ff"/><stop offset="0.0684" stop-color="#018aff"/><stop offset="0.2280" stop-color="#7c6cff"/><stop offset="0.3848" stop-color="#ff4dff"/><stop offset="0.4304" stop-color="#ff3adc"/><stop offset="0.4845" stop-color="#ff29bd"/><stop offset="0.5444" stop-color="#ff1aa2"/><stop offset="0.6128" stop-color="#ff0e8b"/><stop offset="0.7154" stop-color="#ff0072"/><stop offset="0.8436" stop-color="#ff005b"/><stop offset="1.0004" stop-color="#ff0048"/></linearGradient><linearGradient id="i68" gradientUnits="userSpaceOnUse" x1="1149.88" y1="0" x2="1500.75" y2="0"><stop offset="0.0000" stop-color="#0093ff"/><stop offset="0.0684" stop-color="#0187ff"/><stop offset="0.2309" stop-color="#7c69ff"/><stop offset="0.3905" stop-color="#ff49ff"/><stop offset="0.4361" stop-color="#ff37dd"/><stop offset="0.4874" stop-color="#ff27bf"/><stop offset="0.5472" stop-color="#ff19a4"/><stop offset="0.6156" stop-color="#ff0d8d"/><stop offset="0.7097" stop-color="#ff0075"/><stop offset="0.8408" stop-color="#ff005d"/><stop offset="1.0004" stop-color="#ff004a"/></linearGradient><linearGradient id="i69" gradientUnits="userSpaceOnUse" x1="1149.88" y1="0" x2="1500.75" y2="0"><stop offset="0.0000" stop-color="#008fff"/><stop offset="0.0684" stop-color="#0084ff"/><stop offset="0.2337" stop-color="#7b65ff"/><stop offset="0.3962" stop-color="#ff45ff"/><stop offset="0.4418" stop-color="#ff34dd"/><stop offset="0.4931" stop-color="#ff25c0"/><stop offset="0.5529" stop-color="#ff17a5"/><stop offset="0.6213" stop-color="#ff0b8e"/><stop offset="0.7040" stop-color="#ff0079"/><stop offset="0.7866" stop-color="#ff0068"/><stop offset="1.0004" stop-color="#ff004b"/></linearGradient><linearGradient id="i70" gradientUnits="userSpaceOnUse" x1="1149.88" y1="0" x2="1500.75" y2="0"><stop offset="0.0000" stop-color="#008cff"/><stop offset="0.0713" stop-color="#0180ff"/><stop offset="0.2394" stop-color="#7d62ff"/><stop offset="0.4019" stop-color="#ff42ff"/><stop offset="0.4475" stop-color="#ff31dd"/><stop offset="0.4988" stop-color="#ff22c0"/><stop offset="0.5586" stop-color="#ff15a6"/><stop offset="0.6270" stop-color="#ff0a8f"/><stop offset="0.6983" stop-color="#ff007c"/><stop offset="0.7895" stop-color="#ff006a"/><stop offset="1.0004" stop-color="#ff004d"/></linearGradient><linearGradient id="i71" gradientUnits="userSpaceOnUse" x1="1149.88" y1="0" x2="1500.75" y2="0"><stop offset="0.0000" stop-color="#0089ff"/><stop offset="0.0713" stop-color="#017dff"/><stop offset="0.2423" stop-color="#7d5eff"/><stop offset="0.4076" stop-color="#ff3eff"/><stop offset="0.4532" stop-color="#ff2ede"/><stop offset="0.5045" stop-color="#ff20c1"/><stop offset="0.5643" stop-color="#ff13a7"/><stop offset="0.6299" stop-color="#ff0891"/><stop offset="0.6926" stop-color="#ff0080"/><stop offset="0.7923" stop-color="#ff006b"/><stop offset="1.0004" stop-color="#ff004e"/></linearGradient><linearGradient id="i72" gradientUnits="userSpaceOnUse" x1="1149.88" y1="0" x2="1500.75" y2="0"><stop offset="0.0000" stop-color="#0086ff"/><stop offset="0.0713" stop-color="#007aff"/><stop offset="0.2451" stop-color="#7c5bff"/><stop offset="0.4133" stop-color="#ff3bff"/><stop offset="0.4589" stop-color="#ff2bde"/><stop offset="0.5102" stop-color="#ff1ec2"/><stop offset="0.5700" stop-color="#ff11a8"/><stop offset="0.6356" stop-color="#ff0792"/><stop offset="0.6897" stop-color="#ff0083"/><stop offset="0.7952" stop-color="#ff006d"/><stop offset="1.0004" stop-color="#ff0050"/></linearGradient><linearGradient id="i73" gradientUnits="userSpaceOnUse" x1="1149.88" y1="0" x2="1500.75" y2="0"><stop offset="0.0000" stop-color="#0083ff"/><stop offset="0.0741" stop-color="#0177ff"/><stop offset="0.2508" stop-color="#7e58ff"/><stop offset="0.4190" stop-color="#ff38ff"/><stop offset="0.4646" stop-color="#ff29df"/><stop offset="0.5159" stop-color="#ff1cc2"/><stop offset="0.5729" stop-color="#ff10aa"/><stop offset="0.6384" stop-color="#ff0694"/><stop offset="0.6840" stop-color="#ff0087"/><stop offset="0.7980" stop-color="#ff006e"/><stop offset="1.0004" stop-color="#ff0051"/></linearGradient><linearGradient id="i74" gradientUnits="userSpaceOnUse" x1="1149.88" y1="0" x2="1500.75" y2="0"><stop offset="0.0000" stop-color="#0080ff"/><stop offset="0.0741" stop-color="#0174ff"/><stop offset="0.2537" stop-color="#7e55ff"/><stop offset="0.4247" stop-color="#ff35ff"/><stop offset="0.4703" stop-color="#ff26df"/><stop offset="0.5216" stop-color="#ff19c3"/><stop offset="0.5786" stop-color="#ff0eab"/><stop offset="0.6441" stop-color="#ff0494"/><stop offset="0.6783" stop-color="#ff008b"/><stop offset="0.8009" stop-color="#ff0070"/><stop offset="1.0004" stop-color="#ff0053"/></linearGradient><linearGradient id="i75" gradientUnits="userSpaceOnUse" x1="1149.88" y1="0" x2="1500.75" y2="0"><stop offset="0.0000" stop-color="#007dff"/><stop offset="0.0741" stop-color="#0071ff"/><stop offset="0.2565" stop-color="#7d52ff"/><stop offset="0.4304" stop-color="#ff32ff"/><stop offset="0.4760" stop-color="#ff24e0"/><stop offset="0.5273" stop-color="#ff17c4"/><stop offset="0.5843" stop-color="#ff0dab"/><stop offset="0.6498" stop-color="#ff0395"/><stop offset="0.8037" stop-color="#ff0071"/><stop offset="1.0004" stop-color="#ff0054"/></linearGradient><linearGradient id="i76" gradientUnits="userSpaceOnUse" x1="1149.88" y1="0" x2="1500.75" y2="0"><stop offset="0.0000" stop-color="#007bff"/><stop offset="0.0770" stop-color="#016eff"/><stop offset="0.2594" stop-color="#7d4fff"/><stop offset="0.4361" stop-color="#ff2fff"/><stop offset="0.4817" stop-color="#ff21e0"/><stop offset="0.5330" stop-color="#ff15c4"/><stop offset="0.5900" stop-color="#ff0bac"/><stop offset="0.6527" stop-color="#ff0297"/><stop offset="0.8066" stop-color="#ff0073"/><stop offset="1.0004" stop-color="#ff0056"/></linearGradient><linearGradient id="i77" gradientUnits="userSpaceOnUse" x1="1149.88" y1="0" x2="1500.75" y2="0"><stop offset="0.0000" stop-color="#0078ff"/><stop offset="0.0770" stop-color="#016cff"/><stop offset="0.2622" stop-color="#7c4dff"/><stop offset="0.4418" stop-color="#ff2cff"/><stop offset="0.4874" stop-color="#ff1fe0"/><stop offset="0.5387" stop-color="#ff13c5"/><stop offset="0.5957" stop-color="#ff09ad"/><stop offset="0.6584" stop-color="#ff0098"/><stop offset="0.8094" stop-color="#ff0074"/><stop offset="1.0004" stop-color="#ff0058"/></linearGradient><linearGradient id="i78" gradientUnits="userSpaceOnUse" x1="1149.88" y1="0" x2="1500.75" y2="0"><stop offset="0.0000" stop-color="#0075ff"/><stop offset="0.0770" stop-color="#0069ff"/><stop offset="0.2651" stop-color="#7c4aff"/><stop offset="0.4475" stop-color="#ff29ff"/><stop offset="0.4931" stop-color="#ff1de1"/><stop offset="0.5415" stop-color="#ff12c7"/><stop offset="0.5985" stop-color="#ff08af"/><stop offset="0.6612" stop-color="#ff009a"/><stop offset="0.8123" stop-color="#ff0076"/><stop offset="1.0004" stop-color="#ff0059"/></linearGradient><linearGradient id="i79" gradientUnits="userSpaceOnUse" x1="1149.88" y1="0" x2="1500.75" y2="0"><stop offset="0.0000" stop-color="#0073ff"/><stop offset="0.0798" stop-color="#0167ff"/><stop offset="0.2708" stop-color="#7e47ff"/><stop offset="0.4532" stop-color="#ff26ff"/><stop offset="0.4988" stop-color="#ff1ae1"/><stop offset="0.5472" stop-color="#ff10c8"/><stop offset="0.6042" stop-color="#ff06b0"/><stop offset="0.6669" stop-color="#ff009a"/><stop offset="0.8151" stop-color="#ff0077"/><stop offset="1.0004" stop-color="#ff005b"/></linearGradient><linearGradient id="i80" gradientUnits="userSpaceOnUse" x1="1149.88" y1="0" x2="1500.75" y2="0"><stop offset="0.0000" stop-color="#0071ff"/><stop offset="0.0798" stop-color="#0164ff"/><stop offset="0.2736" stop-color="#7d45ff"/><stop offset="0.4589" stop-color="#ff24ff"/><stop offset="0.5045" stop-color="#ff18e1"/><stop offset="0.5529" stop-color="#ff0ec8"/><stop offset="0.6413" stop-color="#ff00a5"/><stop offset="0.6698" stop-color="#ff009c"/><stop offset="0.8180" stop-color="#ff0078"/><stop offset="1.0004" stop-color="#ff005c"/></linearGradient><linearGradient id="i81" gradientUnits="userSpaceOnUse" x1="1149.88" y1="0" x2="1500.75" y2="0"><stop offset="0.0000" stop-color="#006eff"/><stop offset="0.0798" stop-color="#0062ff"/><stop offset="0.2765" stop-color="#7d42ff"/><stop offset="0.4646" stop-color="#ff21ff"/><stop offset="0.5102" stop-color="#ff16e2"/><stop offset="0.5586" stop-color="#ff0cc9"/><stop offset="0.6356" stop-color="#ff00aa"/><stop offset="0.6755" stop-color="#ff009d"/><stop offset="0.8208" stop-color="#ff007a"/><stop offset="1.0004" stop-color="#ff005e"/></linearGradient><linearGradient id="i82" gradientUnits="userSpaceOnUse" x1="1149.88" y1="0" x2="1500.75" y2="0"><stop offset="0.0000" stop-color="#006cff"/><stop offset="0.0827" stop-color="#015fff"/><stop offset="0.2793" stop-color="#7d40ff"/><stop offset="0.4703" stop-color="#ff1eff"/><stop offset="0.5159" stop-color="#ff14e2"/><stop offset="0.5643" stop-color="#ff0ac9"/><stop offset="0.6327" stop-color="#ff00ae"/><stop offset="0.6783" stop-color="#ff009f"/><stop offset="0.8208" stop-color="#ff007c"/><stop offset="1.0004" stop-color="#ff005f"/></linearGradient><linearGradient id="i83" gradientUnits="userSpaceOnUse" x1="1149.88" y1="0" x2="1500.75" y2="0"><stop offset="0.0000" stop-color="#006aff"/><stop offset="0.0827" stop-color="#015dff"/><stop offset="0.2822" stop-color="#7c3eff"/><stop offset="0.4760" stop-color="#ff1cff"/><stop offset="0.5216" stop-color="#ff12e2"/><stop offset="0.5700" stop-color="#ff08ca"/><stop offset="0.6270" stop-color="#ff00b2"/><stop offset="0.6840" stop-color="#ff009f"/><stop offset="0.8265" stop-color="#ff007d"/><stop offset="1.0004" stop-color="#ff0061"/></linearGradient><linearGradient id="i84" gradientUnits="userSpaceOnUse" x1="1149.88" y1="0" x2="1500.75" y2="0"><stop offset="0.0000" stop-color="#0067ff"/><stop offset="0.0827" stop-color="#005bff"/><stop offset="0.2850" stop-color="#7c3bff"/><stop offset="0.4817" stop-color="#ff1aff"/><stop offset="0.5273" stop-color="#ff0fe3"/><stop offset="0.5757" stop-color="#ff07ca"/><stop offset="0.6213" stop-color="#ff00b7"/><stop offset="0.6869" stop-color="#ff00a1"/><stop offset="0.8265" stop-color="#ff007f"/><stop offset="1.0004" stop-color="#ff0062"/></linearGradient><linearGradient id="i85" gradientUnits="userSpaceOnUse" x1="1149.88" y1="0" x2="1500.75" y2="0"><stop offset="0.0000" stop-color="#0065ff"/><stop offset="0.0855" stop-color="#0159ff"/><stop offset="0.2907" stop-color="#7d39ff"/><stop offset="0.4874" stop-color="#ff17ff"/><stop offset="0.5330" stop-color="#ff0de3"/><stop offset="0.5814" stop-color="#ff05cb"/><stop offset="0.6156" stop-color="#ff00bc"/><stop offset="0.6926" stop-color="#ff00a2"/><stop offset="0.8294" stop-color="#ff0080"/><stop offset="1.0004" stop-color="#ff0064"/></linearGradient><linearGradient id="i86" gradientUnits="userSpaceOnUse" x1="1149.88" y1="0" x2="1500.75" y2="0"><stop offset="0.0000" stop-color="#0063ff"/><stop offset="0.0855" stop-color="#0157ff"/><stop offset="0.2936" stop-color="#7d36ff"/><stop offset="0.4931" stop-color="#ff15ff"/><stop offset="0.5843" stop-color="#ff04cd"/><stop offset="0.6099" stop-color="#ff00c2"/><stop offset="0.6954" stop-color="#ff00a3"/><stop offset="0.8322" stop-color="#ff0081"/><stop offset="1.0004" stop-color="#ff0066"/></linearGradient><linearGradient id="i87" gradientUnits="userSpaceOnUse" x1="1149.88" y1="0" x2="1500.75" y2="0"><stop offset="0.0000" stop-color="#0061ff"/><stop offset="0.0855" stop-color="#0055ff"/><stop offset="0.2964" stop-color="#7d34ff"/><stop offset="0.4988" stop-color="#ff13ff"/><stop offset="0.5501" stop-color="#ff09e1"/><stop offset="0.6042" stop-color="#ff00c7"/><stop offset="0.7011" stop-color="#ff00a4"/><stop offset="0.8351" stop-color="#ff0083"/><stop offset="1.0004" stop-color="#ff0067"/></linearGradient><linearGradient id="i88" gradientUnits="userSpaceOnUse" x1="1149.88" y1="0" x2="1500.75" y2="0"><stop offset="0.0000" stop-color="#005fff"/><stop offset="0.0884" stop-color="#0152ff"/><stop offset="0.3021" stop-color="#7e32ff"/><stop offset="0.5045" stop-color="#ff10ff"/><stop offset="0.5985" stop-color="#ff00cc"/><stop offset="0.7040" stop-color="#ff00a6"/><stop offset="0.8379" stop-color="#ff0084"/><stop offset="1.0004" stop-color="#ff0069"/></linearGradient><linearGradient id="i89" gradientUnits="userSpaceOnUse" x1="1149.88" y1="0" x2="1500.75" y2="0"><stop offset="0.0000" stop-color="#005dff"/><stop offset="0.0884" stop-color="#0151ff"/><stop offset="0.3050" stop-color="#7e30ff"/><stop offset="0.5102" stop-color="#ff0eff"/><stop offset="0.5928" stop-color="#ff00d2"/><stop offset="0.7097" stop-color="#ff00a6"/><stop offset="0.8408" stop-color="#ff0086"/><stop offset="1.0004" stop-color="#ff006a"/></linearGradient><linearGradient id="i90" gradientUnits="userSpaceOnUse" x1="1149.88" y1="0" x2="1500.75" y2="0"><stop offset="0.0000" stop-color="#005bff"/><stop offset="0.0884" stop-color="#004fff"/><stop offset="0.3078" stop-color="#7d2eff"/><stop offset="0.5159" stop-color="#ff0cff"/><stop offset="0.5871" stop-color="#ff00d8"/><stop offset="0.6071" stop-color="#ff00cf"/><stop offset="0.7125" stop-color="#ff00a8"/><stop offset="0.8436" stop-color="#ff0087"/><stop offset="1.0004" stop-color="#ff006c"/></linearGradient><linearGradient id="i91" gradientUnits="userSpaceOnUse" x1="1149.88" y1="0" x2="1500.75" y2="0"><stop offset="0.0000" stop-color="#0059ff"/><stop offset="0.0912" stop-color="#014dff"/><stop offset="0.3107" stop-color="#7d2cff"/><stop offset="0.5216" stop-color="#ff0aff"/><stop offset="0.5814" stop-color="#ff00de"/><stop offset="0.6128" stop-color="#ff00cf"/><stop offset="0.7182" stop-color="#ff00a9"/><stop offset="0.8465" stop-color="#ff0088"/><stop offset="1.0004" stop-color="#ff006e"/></linearGradient><linearGradient id="i92" gradientUnits="userSpaceOnUse" x1="1149.88" y1="0" x2="1500.75" y2="0"><stop offset="0.0000" stop-color="#0058ff"/><stop offset="0.0912" stop-color="#014bff"/><stop offset="0.3135" stop-color="#7d2aff"/><stop offset="0.5273" stop-color="#ff08ff"/><stop offset="0.5757" stop-color="#ff00e4"/><stop offset="0.6156" stop-color="#ff00d1"/><stop offset="0.7211" stop-color="#ff00aa"/><stop offset="0.8493" stop-color="#ff008a"/><stop offset="1.0004" stop-color="#ff006f"/></linearGradient><linearGradient id="i93" gradientUnits="userSpaceOnUse" x1="1149.88" y1="0" x2="1500.75" y2="0"><stop offset="0.0000" stop-color="#0056ff"/><stop offset="0.0912" stop-color="#0049ff"/><stop offset="0.3164" stop-color="#7d28ff"/><stop offset="0.5330" stop-color="#ff06ff"/><stop offset="0.5700" stop-color="#ff00ea"/><stop offset="0.6213" stop-color="#ff00d1"/><stop offset="0.7268" stop-color="#ff00ab"/><stop offset="0.8522" stop-color="#ff008b"/><stop offset="1.0004" stop-color="#ff0071"/></linearGradient><linearGradient id="i94" gradientUnits="userSpaceOnUse" x1="1149.88" y1="0" x2="1500.75" y2="0"><stop offset="0.0000" stop-color="#0054ff"/><stop offset="0.0941" stop-color="#0147ff"/><stop offset="0.3221" stop-color="#7e26ff"/><stop offset="0.5387" stop-color="#ff04ff"/><stop offset="0.5643" stop-color="#ff00f0"/><stop offset="0.6270" stop-color="#ff00d2"/><stop offset="0.7296" stop-color="#ff00ac"/><stop offset="0.8522" stop-color="#ff008d"/><stop offset="1.0004" stop-color="#ff0072"/></linearGradient><linearGradient id="i95" gradientUnits="userSpaceOnUse" x1="1149.88" y1="0" x2="1500.75" y2="0"><stop offset="0.0000" stop-color="#0052ff"/><stop offset="0.0941" stop-color="#0146ff"/><stop offset="0.3249" stop-color="#7e25ff"/><stop offset="0.5444" stop-color="#ff02ff"/><stop offset="0.6327" stop-color="#ff00d2"/><stop offset="0.7353" stop-color="#ff00ad"/><stop offset="0.8550" stop-color="#ff008e"/><stop offset="1.0004" stop-color="#ff0074"/></linearGradient><linearGradient id="i96" gradientUnits="userSpaceOnUse" x1="1149.88" y1="0" x2="1500.75" y2="0"><stop offset="0.0000" stop-color="#0051ff"/><stop offset="0.0941" stop-color="#0044ff"/><stop offset="0.3278" stop-color="#7d23ff"/><stop offset="0.5501" stop-color="#ff01ff"/><stop offset="0.6384" stop-color="#ff00d2"/><stop offset="0.7382" stop-color="#ff00ae"/><stop offset="0.8579" stop-color="#ff0090"/><stop offset="1.0004" stop-color="#ff0076"/></linearGradient><linearGradient id="i97" gradientUnits="userSpaceOnUse" x1="1149.88" y1="0" x2="1500.75" y2="0"><stop offset="0.0000" stop-color="#004fff"/><stop offset="0.0969" stop-color="#0142ff"/><stop offset="0.3306" stop-color="#7d21ff"/><stop offset="0.5558" stop-color="#fe00ff"/><stop offset="0.6413" stop-color="#ff00d4"/><stop offset="0.7410" stop-color="#ff00b0"/><stop offset="0.8607" stop-color="#ff0091"/><stop offset="1.0004" stop-color="#ff0077"/></linearGradient><linearGradient id="i98" gradientUnits="userSpaceOnUse" x1="1149.88" y1="0" x2="1500.75" y2="0"><stop offset="0.0000" stop-color="#004dff"/><stop offset="0.0969" stop-color="#0141ff"/><stop offset="0.3335" stop-color="#7d20ff"/><stop offset="0.5415" stop-color="#f300ff"/><stop offset="0.5615" stop-color="#fe00ff"/><stop offset="0.6470" stop-color="#ff00d4"/><stop offset="0.7467" stop-color="#ff00b1"/><stop offset="0.8636" stop-color="#ff0092"/><stop offset="1.0004" stop-color="#ff0079"/></linearGradient><linearGradient id="i99" gradientUnits="userSpaceOnUse" x1="1149.88" y1="0" x2="1500.75" y2="0"><stop offset="0.0000" stop-color="#004cff"/><stop offset="0.0969" stop-color="#003fff"/><stop offset="0.3363" stop-color="#7c1eff"/><stop offset="0.5358" stop-color="#ec00ff"/><stop offset="0.5672" stop-color="#fe00ff"/><stop offset="0.6527" stop-color="#ff00d5"/><stop offset="0.7496" stop-color="#ff00b2"/><stop offset="0.8636" stop-color="#ff0094"/><stop offset="1.0004" stop-color="#ff007a"/></linearGradient><linearGradient id="i100" gradientUnits="userSpaceOnUse" x1="1149.88" y1="0" x2="1500.75" y2="0"><stop offset="0.0000" stop-color="#004aff"/><stop offset="0.0998" stop-color="#013dff"/><stop offset="0.3192" stop-color="#711fff"/><stop offset="0.5301" stop-color="#e600ff"/><stop offset="0.5729" stop-color="#fe00ff"/><stop offset="0.6584" stop-color="#ff00d5"/><stop offset="0.7553" stop-color="#ff00b3"/><stop offset="0.8693" stop-color="#ff0095"/><stop offset="1.0004" stop-color="#ff007c"/></linearGradient><linearGradient id="i101" gradientUnits="userSpaceOnUse" x1="1149.88" y1="0" x2="1500.75" y2="0"><stop offset="0.0000" stop-color="#0049ff"/><stop offset="0.0998" stop-color="#013cff"/><stop offset="0.3164" stop-color="#6e1fff"/><stop offset="0.5244" stop-color="#e000ff"/><stop offset="0.5786" stop-color="#fe00ff"/><stop offset="0.6641" stop-color="#ff00d6"/><stop offset="0.7581" stop-color="#ff00b4"/><stop offset="0.8693" stop-color="#ff0097"/><stop offset="1.0004" stop-color="#ff007e"/></linearGradient><linearGradient id="i102" gradientUnits="userSpaceOnUse" x1="1149.88" y1="0" x2="1500.75" y2="0"><stop offset="0.0000" stop-color="#0047ff"/><stop offset="0.0998" stop-color="#003aff"/><stop offset="0.3135" stop-color="#6b1eff"/><stop offset="0.5187" stop-color="#d900ff"/><stop offset="0.5843" stop-color="#fe00ff"/><stop offset="0.6669" stop-color="#ff00d7"/><stop offset="0.7610" stop-color="#ff00b5"/><stop offset="0.8721" stop-color="#ff0098"/><stop offset="1.0004" stop-color="#ff007f"/></linearGradient><linearGradient id="i103" gradientUnits="userSpaceOnUse" x1="1149.88" y1="0" x2="1500.75" y2="0"><stop offset="0.0000" stop-color="#0046ff"/><stop offset="0.1026" stop-color="#0139ff"/><stop offset="0.3107" stop-color="#681dff"/><stop offset="0.5130" stop-color="#d400ff"/><stop offset="0.5900" stop-color="#fe00ff"/><stop offset="0.6726" stop-color="#ff00d7"/><stop offset="0.7667" stop-color="#ff00b6"/><stop offset="0.8750" stop-color="#ff0099"/><stop offset="1.0004" stop-color="#ff0081"/></linearGradient><linearGradient id="i104" gradientUnits="userSpaceOnUse" x1="1149.88" y1="0" x2="1500.75" y2="0"><stop offset="0.0000" stop-color="#0044ff"/><stop offset="0.1026" stop-color="#0137ff"/><stop offset="0.3078" stop-color="#651cff"/><stop offset="0.5073" stop-color="#ce00ff"/><stop offset="0.5957" stop-color="#fe00ff"/><stop offset="0.6783" stop-color="#ff00d8"/><stop offset="0.7695" stop-color="#ff00b7"/><stop offset="0.8778" stop-color="#ff009b"/><stop offset="1.0004" stop-color="#ff0083"/></linearGradient><linearGradient id="i105" gradientUnits="userSpaceOnUse" x1="1149.88" y1="0" x2="1500.75" y2="0"><stop offset="0.0000" stop-color="#0043ff"/><stop offset="0.1026" stop-color="#0036ff"/><stop offset="0.3050" stop-color="#621cff"/><stop offset="0.5016" stop-color="#c800ff"/><stop offset="0.6014" stop-color="#fe00ff"/><stop offset="0.6840" stop-color="#ff00d8"/><stop offset="0.7724" stop-color="#ff00b9"/><stop offset="0.8778" stop-color="#ff009d"/><stop offset="1.0004" stop-color="#ff0084"/></linearGradient><linearGradient id="i106" gradientUnits="userSpaceOnUse" x1="1149.88" y1="0" x2="1500.75" y2="0"><stop offset="0.0000" stop-color="#0042ff"/><stop offset="0.1026" stop-color="#0035ff"/><stop offset="0.3021" stop-color="#601bff"/><stop offset="0.4959" stop-color="#c300ff"/><stop offset="0.6071" stop-color="#fe00ff"/><stop offset="0.6897" stop-color="#ff00d9"/><stop offset="0.7781" stop-color="#ff00b9"/><stop offset="0.8807" stop-color="#ff009e"/><stop offset="1.0004" stop-color="#ff0086"/></linearGradient><linearGradient id="i107" gradientUnits="userSpaceOnUse" x1="1149.88" y1="0" x2="1500.75" y2="0"><stop offset="0.0000" stop-color="#0040ff"/><stop offset="0.1055" stop-color="#0133ff"/><stop offset="0.3021" stop-color="#5e1aff"/><stop offset="0.4902" stop-color="#bd00ff"/><stop offset="0.6128" stop-color="#fe00ff"/><stop offset="0.6926" stop-color="#ff00da"/><stop offset="0.7809" stop-color="#ff00bb"/><stop offset="0.8835" stop-color="#ff009f"/><stop offset="1.0004" stop-color="#ff0088"/></linearGradient><linearGradient id="i108" gradientUnits="userSpaceOnUse" x1="1149.88" y1="0" x2="1500.75" y2="0"><stop offset="0.0000" stop-color="#003fff"/><stop offset="0.1055" stop-color="#0032ff"/><stop offset="0.2993" stop-color="#5b19ff"/><stop offset="0.4845" stop-color="#b800ff"/><stop offset="0.6185" stop-color="#fe00ff"/><stop offset="0.6983" stop-color="#ff00da"/><stop offset="0.7838" stop-color="#ff00bc"/><stop offset="0.8835" stop-color="#ff00a1"/><stop offset="1.0004" stop-color="#ff0089"/></linearGradient><linearGradient id="i109" gradientUnits="userSpaceOnUse" x1="1149.88" y1="0" x2="1500.75" y2="0"><stop offset="0.0000" stop-color="#003eff"/><stop offset="0.1055" stop-color="#0031ff"/><stop offset="0.2964" stop-color="#5919ff"/><stop offset="0.4817" stop-color="#b400ff"/><stop offset="0.6242" stop-color="#fe00ff"/><stop offset="0.7040" stop-color="#ff00db"/><stop offset="0.7895" stop-color="#ff00bd"/><stop offset="0.8892" stop-color="#ff00a2"/><stop offset="1.0004" stop-color="#ff008b"/></linearGradient><linearGradient id="i110" gradientUnits="userSpaceOnUse" x1="1149.88" y1="0" x2="1500.75" y2="0"><stop offset="0.0000" stop-color="#003cff"/><stop offset="0.1083" stop-color="#012fff"/><stop offset="0.2936" stop-color="#5618ff"/><stop offset="0.4760" stop-color="#af00ff"/><stop offset="0.6299" stop-color="#fe00ff"/><stop offset="0.7097" stop-color="#ff00db"/><stop offset="0.7923" stop-color="#ff00be"/><stop offset="0.8892" stop-color="#ff00a4"/><stop offset="1.0004" stop-color="#ff008d"/></linearGradient><linearGradient id="i111" gradientUnits="userSpaceOnUse" x1="1149.88" y1="0" x2="1500.75" y2="0"><stop offset="0.0000" stop-color="#003bff"/><stop offset="0.1083" stop-color="#002eff"/><stop offset="0.4703" stop-color="#aa00ff"/><stop offset="0.6356" stop-color="#fe00ff"/><stop offset="0.7125" stop-color="#ff00dc"/><stop offset="0.7952" stop-color="#ff00bf"/><stop offset="0.8921" stop-color="#ff00a5"/><stop offset="1.0004" stop-color="#ff008e"/></linearGradient><linearGradient id="i112" gradientUnits="userSpaceOnUse" x1="1149.88" y1="0" x2="1500.75" y2="0"><stop offset="0.0000" stop-color="#003aff"/><stop offset="0.1083" stop-color="#002dff"/><stop offset="0.4646" stop-color="#a500ff"/><stop offset="0.6413" stop-color="#fe00ff"/><stop offset="0.7182" stop-color="#ff00dd"/><stop offset="0.8009" stop-color="#ff00c0"/><stop offset="0.8949" stop-color="#ff00a6"/><stop offset="1.0004" stop-color="#ff0090"/></linearGradient><linearGradient id="i113" gradientUnits="userSpaceOnUse" x1="1149.88" y1="0" x2="1500.75" y2="0"><stop offset="0.0000" stop-color="#0039ff"/><stop offset="0.1112" stop-color="#012cff"/><stop offset="0.4589" stop-color="#a000ff"/><stop offset="0.6498" stop-color="#ff00fe"/><stop offset="0.7211" stop-color="#ff00de"/><stop offset="0.8037" stop-color="#ff00c1"/><stop offset="0.8949" stop-color="#ff00a8"/><stop offset="1.0004" stop-color="#ff0092"/></linearGradient><linearGradient id="i114" gradientUnits="userSpaceOnUse" x1="1149.88" y1="0" x2="1500.75" y2="0"><stop offset="0.0000" stop-color="#0037ff"/><stop offset="0.1112" stop-color="#002bff"/><stop offset="0.4532" stop-color="#9c00ff"/><stop offset="0.6555" stop-color="#ff00fe"/><stop offset="0.7268" stop-color="#ff00de"/><stop offset="0.8066" stop-color="#ff00c2"/><stop offset="0.8978" stop-color="#ff00a9"/><stop offset="1.0004" stop-color="#ff0093"/></linearGradient><linearGradient id="i115" gradientUnits="userSpaceOnUse" x1="1149.88" y1="0" x2="1500.75" y2="0"><stop offset="0.0000" stop-color="#0036ff"/><stop offset="0.1112" stop-color="#0029ff"/><stop offset="0.4475" stop-color="#9700ff"/><stop offset="0.6612" stop-color="#ff00fe"/><stop offset="0.7296" stop-color="#ff00e0"/><stop offset="0.8094" stop-color="#ff00c4"/><stop offset="0.8978" stop-color="#ff00ab"/><stop offset="1.0004" stop-color="#ff0095"/></linearGradient><linearGradient id="i116" gradientUnits="userSpaceOnUse" x1="1149.88" y1="0" x2="1500.75" y2="0"><stop offset="0.0000" stop-color="#0035ff"/><stop offset="0.1140" stop-color="#0128ff"/><stop offset="0.4418" stop-color="#9300ff"/><stop offset="0.6669" stop-color="#ff00fe"/><stop offset="0.7353" stop-color="#ff00e0"/><stop offset="0.8151" stop-color="#ff00c4"/><stop offset="0.9035" stop-color="#ff00ac"/><stop offset="1.0004" stop-color="#ff0097"/></linearGradient><linearGradient id="i117" gradientUnits="userSpaceOnUse" x1="1149.88" y1="0" x2="1500.75" y2="0"><stop offset="0.0000" stop-color="#0034ff"/><stop offset="0.1140" stop-color="#0027ff"/><stop offset="0.4361" stop-color="#8e00ff"/><stop offset="0.6726" stop-color="#ff00fe"/><stop offset="0.7410" stop-color="#ff00e0"/><stop offset="0.8180" stop-color="#ff00c5"/><stop offset="0.9035" stop-color="#ff00ae"/><stop offset="1.0004" stop-color="#ff0098"/></linearGradient><linearGradient id="i118" gradientUnits="userSpaceOnUse" x1="1149.88" y1="0" x2="1500.75" y2="0"><stop offset="0.0000" stop-color="#0033ff"/><stop offset="0.1140" stop-color="#0026ff"/><stop offset="0.4304" stop-color="#8a00ff"/><stop offset="0.6783" stop-color="#ff00fe"/><stop offset="0.7467" stop-color="#ff00e0"/><stop offset="0.8208" stop-color="#ff00c7"/><stop offset="0.9063" stop-color="#ff00af"/><stop offset="1.0004" stop-color="#ff009a"/></linearGradient><linearGradient id="i119" gradientUnits="userSpaceOnUse" x1="1149.88" y1="0" x2="1500.75" y2="0"><stop offset="0.0000" stop-color="#0032ff"/><stop offset="0.1169" stop-color="#0125ff"/><stop offset="0.4247" stop-color="#8600ff"/><stop offset="0.6840" stop-color="#ff00fe"/><stop offset="0.7496" stop-color="#ff00e2"/><stop offset="0.8237" stop-color="#ff00c8"/><stop offset="1.0004" stop-color="#ff009c"/></linearGradient><linearGradient id="i120" gradientUnits="userSpaceOnUse" x1="1149.88" y1="0" x2="1500.75" y2="0"><stop offset="0.0000" stop-color="#0031ff"/><stop offset="0.1169" stop-color="#0024ff"/><stop offset="0.4190" stop-color="#8200ff"/><stop offset="0.6897" stop-color="#ff00fe"/><stop offset="0.7553" stop-color="#ff00e2"/><stop offset="0.8294" stop-color="#ff00c8"/><stop offset="1.0004" stop-color="#ff009d"/></linearGradient><linearGradient id="i121" gradientUnits="userSpaceOnUse" x1="1149.88" y1="0" x2="1500.75" y2="0"><stop offset="0.0000" stop-color="#0030ff"/><stop offset="0.1169" stop-color="#0023ff"/><stop offset="0.4133" stop-color="#7e00ff"/><stop offset="0.6954" stop-color="#ff00fe"/><stop offset="0.7610" stop-color="#ff00e2"/><stop offset="0.8322" stop-color="#ff00ca"/><stop offset="1.0004" stop-color="#ff009f"/></linearGradient><linearGradient id="i122" gradientUnits="userSpaceOnUse" x1="1149.88" y1="0" x2="1500.75" y2="0"><stop offset="0.0000" stop-color="#002fff"/><stop offset="0.1197" stop-color="#0122ff"/><stop offset="0.4076" stop-color="#7a00ff"/><stop offset="0.7011" stop-color="#ff00fe"/><stop offset="0.7638" stop-color="#ff00e4"/><stop offset="0.8351" stop-color="#ff00cb"/><stop offset="1.0004" stop-color="#ff00a1"/></linearGradient><linearGradient id="i123" gradientUnits="userSpaceOnUse" x1="1149.88" y1="0" x2="1500.75" y2="0"><stop offset="0.0000" stop-color="#002eff"/><stop offset="0.1197" stop-color="#0021ff"/><stop offset="0.4019" stop-color="#7600ff"/><stop offset="0.7068" stop-color="#ff00ff"/><stop offset="0.7695" stop-color="#ff00e4"/><stop offset="0.8379" stop-color="#ff00cc"/><stop offset="1.0004" stop-color="#ff00a2"/></linearGradient><linearGradient id="i124" gradientUnits="userSpaceOnUse" x1="1149.88" y1="0" x2="1500.75" y2="0"><stop offset="0.0000" stop-color="#002dff"/><stop offset="0.1197" stop-color="#0020ff"/><stop offset="0.3962" stop-color="#7200ff"/><stop offset="0.7125" stop-color="#ff00ff"/><stop offset="0.8436" stop-color="#ff00cc"/><stop offset="1.0004" stop-color="#ff00a4"/></linearGradient><linearGradient id="i125" gradientUnits="userSpaceOnUse" x1="1149.88" y1="0" x2="1500.75" y2="0"><stop offset="0.0000" stop-color="#002cff"/><stop offset="0.1226" stop-color="#011eff"/><stop offset="0.3905" stop-color="#6e00ff"/><stop offset="0.7182" stop-color="#ff00ff"/><stop offset="0.8465" stop-color="#ff00ce"/><stop offset="1.0004" stop-color="#ff00a6"/></linearGradient><linearGradient id="i126" gradientUnits="userSpaceOnUse" x1="1149.88" y1="0" x2="1500.75" y2="0"><stop offset="0.0000" stop-color="#002bff"/><stop offset="0.1226" stop-color="#001eff"/><stop offset="0.3848" stop-color="#6a00ff"/><stop offset="0.7239" stop-color="#ff00ff"/><stop offset="0.8493" stop-color="#ff00cf"/><stop offset="1.0004" stop-color="#ff00a8"/></linearGradient><linearGradient id="i127" gradientUnits="userSpaceOnUse" x1="1149.88" y1="0" x2="1500.75" y2="0"><stop offset="0.0000" stop-color="#002aff"/><stop offset="0.1226" stop-color="#001dff"/><stop offset="0.3791" stop-color="#6700ff"/><stop offset="0.7296" stop-color="#ff00ff"/><stop offset="0.8522" stop-color="#ff00d0"/><stop offset="1.0004" stop-color="#ff00a9"/></linearGradient><linearGradient id="i128" gradientUnits="userSpaceOnUse" x1="1149.88" y1="0" x2="1500.75" y2="0"><stop offset="0.0000" stop-color="#0029ff"/><stop offset="0.1254" stop-color="#011cff"/><stop offset="0.3734" stop-color="#6300ff"/><stop offset="0.7353" stop-color="#ff00ff"/><stop offset="0.8550" stop-color="#ff00d1"/><stop offset="1.0004" stop-color="#ff00ab"/></linearGradient><linearGradient id="i129" gradientUnits="userSpaceOnUse" x1="1149.88" y1="0" x2="1500.75" y2="0"><stop offset="0.0000" stop-color="#0028ff"/><stop offset="0.1254" stop-color="#001bff"/><stop offset="0.3705" stop-color="#6100ff"/><stop offset="0.7410" stop-color="#ff00ff"/><stop offset="0.8607" stop-color="#ff00d2"/><stop offset="1.0004" stop-color="#ff00ad"/></linearGradient><linearGradient id="i130" gradientUnits="userSpaceOnUse" x1="1149.88" y1="0" x2="1500.75" y2="0"><stop offset="0.0000" stop-color="#0027ff"/><stop offset="0.1254" stop-color="#001aff"/><stop offset="0.3648" stop-color="#5d00ff"/><stop offset="0.7467" stop-color="#ff00ff"/><stop offset="0.8636" stop-color="#ff00d3"/><stop offset="1.0004" stop-color="#ff00ae"/></linearGradient><linearGradient id="i131" gradientUnits="userSpaceOnUse" x1="1149.88" y1="0" x2="1500.75" y2="0"><stop offset="0.0000" stop-color="#0026ff"/><stop offset="0.1283" stop-color="#0119ff"/><stop offset="0.3591" stop-color="#5a00ff"/><stop offset="0.7524" stop-color="#ff00ff"/><stop offset="0.8664" stop-color="#ff00d4"/><stop offset="1.0004" stop-color="#ff00b0"/></linearGradient><linearGradient id="i132" gradientUnits="userSpaceOnUse" x1="1149.88" y1="0" x2="1500.75" y2="0"><stop offset="0.0000" stop-color="#0025ff"/><stop offset="0.1283" stop-color="#0118ff"/><stop offset="0.3534" stop-color="#5700ff"/><stop offset="0.7581" stop-color="#ff00ff"/><stop offset="0.8693" stop-color="#ff00d5"/><stop offset="1.0004" stop-color="#ff00b2"/></linearGradient><linearGradient id="i133" gradientUnits="userSpaceOnUse" x1="1149.88" y1="0" x2="1500.75" y2="0"><stop offset="0.0000" stop-color="#0024ff"/><stop offset="0.1283" stop-color="#0017ff"/><stop offset="0.3477" stop-color="#5400ff"/><stop offset="0.7638" stop-color="#ff00ff"/><stop offset="0.8721" stop-color="#ff00d6"/><stop offset="1.0004" stop-color="#ff00b4"/></linearGradient><linearGradient id="i134" gradientUnits="userSpaceOnUse" x1="1149.88" y1="0" x2="1500.75" y2="0"><stop offset="0.0000" stop-color="#0023ff"/><stop offset="0.1311" stop-color="#0116ff"/><stop offset="0.3420" stop-color="#5000ff"/><stop offset="0.7695" stop-color="#ff00ff"/><stop offset="0.8750" stop-color="#ff00d8"/><stop offset="1.0004" stop-color="#ff00b5"/></linearGradient><linearGradient id="i135" gradientUnits="userSpaceOnUse" x1="1149.88" y1="0" x2="1500.75" y2="0"><stop offset="0.0000" stop-color="#0023ff"/><stop offset="0.1311" stop-color="#0115ff"/><stop offset="0.3363" stop-color="#4d00ff"/><stop offset="0.7752" stop-color="#ff00ff"/><stop offset="0.8807" stop-color="#ff00d8"/><stop offset="1.0004" stop-color="#ff00b7"/></linearGradient><linearGradient id="i136" gradientUnits="userSpaceOnUse" x1="1149.88" y1="0" x2="1500.75" y2="0"><stop offset="0.0000" stop-color="#0022ff"/><stop offset="0.1311" stop-color="#0015ff"/><stop offset="0.3306" stop-color="#4a00ff"/><stop offset="0.5529" stop-color="#a100ff"/><stop offset="0.7809" stop-color="#ff00ff"/><stop offset="0.8835" stop-color="#ff00d9"/><stop offset="1.0004" stop-color="#ff00b9"/></linearGradient><linearGradient id="i137" gradientUnits="userSpaceOnUse" x1="1149.88" y1="0" x2="1500.75" y2="0"><stop offset="0.0000" stop-color="#0021ff"/><stop offset="0.1340" stop-color="#0114ff"/><stop offset="0.3249" stop-color="#4700ff"/><stop offset="0.5558" stop-color="#a000ff"/><stop offset="0.7866" stop-color="#ff00ff"/><stop offset="0.8864" stop-color="#ff00da"/><stop offset="1.0004" stop-color="#ff00bb"/></linearGradient><linearGradient id="i138" gradientUnits="userSpaceOnUse" x1="1149.88" y1="0" x2="1500.75" y2="0"><stop offset="0.0000" stop-color="#0020ff"/><stop offset="0.1340" stop-color="#0113ff"/><stop offset="0.3192" stop-color="#4400ff"/><stop offset="0.5558" stop-color="#9f00ff"/><stop offset="0.7923" stop-color="#ff00ff"/><stop offset="0.8892" stop-color="#ff00db"/><stop offset="1.0004" stop-color="#ff00bc"/></linearGradient><linearGradient id="i139" gradientUnits="userSpaceOnUse" x1="1149.88" y1="0" x2="1500.75" y2="0"><stop offset="0.0000" stop-color="#001fff"/><stop offset="0.1340" stop-color="#0012ff"/><stop offset="0.3135" stop-color="#4100ff"/><stop offset="0.5558" stop-color="#9d00ff"/><stop offset="0.7980" stop-color="#ff00ff"/><stop offset="0.8921" stop-color="#ff00dc"/><stop offset="1.0004" stop-color="#ff00be"/></linearGradient><linearGradient id="i140" gradientUnits="userSpaceOnUse" x1="1149.88" y1="0" x2="1500.75" y2="0"><stop offset="0.0000" stop-color="#001fff"/><stop offset="0.1368" stop-color="#0111ff"/><stop offset="0.3078" stop-color="#3e00ff"/><stop offset="0.5558" stop-color="#9c00ff"/><stop offset="0.8037" stop-color="#ff00ff"/><stop offset="0.8949" stop-color="#ff00de"/><stop offset="1.0004" stop-color="#ff00c0"/></linearGradient><linearGradient id="i141" gradientUnits="userSpaceOnUse" x1="1149.88" y1="0" x2="1500.75" y2="0"><stop offset="0.0000" stop-color="#001eff"/><stop offset="0.1368" stop-color="#0111ff"/><stop offset="0.3021" stop-color="#3b00ff"/><stop offset="0.5558" stop-color="#9a00ff"/><stop offset="0.8094" stop-color="#ff00ff"/><stop offset="0.8978" stop-color="#ff00df"/><stop offset="1.0004" stop-color="#ff00c2"/></linearGradient><linearGradient id="i142" gradientUnits="userSpaceOnUse" x1="1149.88" y1="0" x2="1500.75" y2="0"><stop offset="0.0000" stop-color="#001dff"/><stop offset="0.1368" stop-color="#0010ff"/><stop offset="0.2964" stop-color="#3800ff"/><stop offset="0.5558" stop-color="#9900ff"/><stop offset="0.8151" stop-color="#ff00ff"/><stop offset="0.9035" stop-color="#ff00df"/><stop offset="1.0004" stop-color="#ff00c3"/></linearGradient><linearGradient id="i143" gradientUnits="userSpaceOnUse" x1="1149.88" y1="0" x2="1500.75" y2="0"><stop offset="0.0000" stop-color="#001cff"/><stop offset="0.1368" stop-color="#000fff"/><stop offset="0.2907" stop-color="#3600ff"/><stop offset="0.5586" stop-color="#9800ff"/><stop offset="0.8208" stop-color="#ff00ff"/><stop offset="0.9063" stop-color="#ff00e0"/><stop offset="1.0004" stop-color="#ff00c5"/></linearGradient><linearGradient id="i144" gradientUnits="userSpaceOnUse" x1="1149.88" y1="0" x2="1500.75" y2="0"><stop offset="0.0000" stop-color="#001cff"/><stop offset="0.1397" stop-color="#010eff"/><stop offset="0.2850" stop-color="#3300ff"/><stop offset="0.5586" stop-color="#9700ff"/><stop offset="0.8265" stop-color="#ff00ff"/><stop offset="0.9092" stop-color="#ff00e1"/><stop offset="1.0004" stop-color="#ff00c7"/></linearGradient><linearGradient id="i145" gradientUnits="userSpaceOnUse" x1="1149.88" y1="0" x2="1500.75" y2="0"><stop offset="0.0000" stop-color="#001bff"/><stop offset="0.1397" stop-color="#000eff"/><stop offset="0.2793" stop-color="#3000ff"/><stop offset="0.5586" stop-color="#9500ff"/><stop offset="0.8322" stop-color="#ff00ff"/><stop offset="0.9120" stop-color="#ff00e2"/><stop offset="1.0004" stop-color="#ff00c9"/></linearGradient><linearGradient id="i146" gradientUnits="userSpaceOnUse" x1="1149.88" y1="0" x2="1500.75" y2="0"><stop offset="0.0000" stop-color="#001aff"/><stop offset="0.1397" stop-color="#000dff"/><stop offset="0.2736" stop-color="#2e00ff"/><stop offset="0.5586" stop-color="#9400ff"/><stop offset="0.8379" stop-color="#ff00ff"/><stop offset="0.9149" stop-color="#ff00e3"/><stop offset="1.0004" stop-color="#ff00cb"/></linearGradient><linearGradient id="i147" gradientUnits="userSpaceOnUse" x1="1149.88" y1="0" x2="1500.75" y2="0"><stop offset="0.0000" stop-color="#0019ff"/><stop offset="0.1425" stop-color="#010cff"/><stop offset="0.2679" stop-color="#2b00ff"/><stop offset="0.5586" stop-color="#9200ff"/><stop offset="0.8436" stop-color="#ff00ff"/><stop offset="0.9177" stop-color="#ff00e5"/><stop offset="1.0004" stop-color="#ff00cc"/></linearGradient><linearGradient id="i148" gradientUnits="userSpaceOnUse" x1="1149.88" y1="0" x2="1500.75" y2="0"><stop offset="0.0000" stop-color="#0019ff"/><stop offset="0.1425" stop-color="#000bff"/><stop offset="0.2622" stop-color="#2900ff"/><stop offset="0.5586" stop-color="#9100ff"/><stop offset="0.8493" stop-color="#ff00ff"/><stop offset="1.0004" stop-color="#ff00ce"/></linearGradient><linearGradient id="i149" gradientUnits="userSpaceOnUse" x1="1149.88" y1="0" x2="1500.75" y2="0"><stop offset="0.0000" stop-color="#0018ff"/><stop offset="0.1425" stop-color="#000bff"/><stop offset="0.2565" stop-color="#2600ff"/><stop offset="0.5615" stop-color="#9100ff"/><stop offset="0.8550" stop-color="#ff00ff"/><stop offset="1.0004" stop-color="#ff00d0"/></linearGradient><linearGradient id="i150" gradientUnits="userSpaceOnUse" x1="1149.88" y1="0" x2="1500.75" y2="0"><stop offset="0.0000" stop-color="#0017ff"/><stop offset="0.1454" stop-color="#010aff"/><stop offset="0.2537" stop-color="#2400ff"/><stop offset="0.5615" stop-color="#8f00ff"/><stop offset="0.8607" stop-color="#ff00ff"/><stop offset="1.0004" stop-color="#ff00d2"/></linearGradient><linearGradient id="i151" gradientUnits="userSpaceOnUse" x1="1149.88" y1="0" x2="1500.75" y2="0"><stop offset="0.0000" stop-color="#0017ff"/><stop offset="0.1454" stop-color="#0009ff"/><stop offset="0.2480" stop-color="#2200ff"/><stop offset="0.5615" stop-color="#8e00ff"/><stop offset="0.8664" stop-color="#ff00ff"/><stop offset="1.0004" stop-color="#ff00d4"/></linearGradient><linearGradient id="i152" gradientUnits="userSpaceOnUse" x1="1149.88" y1="0" x2="1500.75" y2="0"><stop offset="0.0000" stop-color="#0016ff"/><stop offset="0.1454" stop-color="#0009ff"/><stop offset="0.2423" stop-color="#2000ff"/><stop offset="0.5643" stop-color="#8e00ff"/><stop offset="0.8721" stop-color="#ff00ff"/><stop offset="1.0004" stop-color="#ff00d5"/></linearGradient><linearGradient id="i153" gradientUnits="userSpaceOnUse" x1="1149.88" y1="0" x2="1500.75" y2="0"><stop offset="0.0000" stop-color="#0015ff"/><stop offset="0.1482" stop-color="#0108ff"/><stop offset="0.2366" stop-color="#1d00ff"/><stop offset="0.5643" stop-color="#8c00ff"/><stop offset="0.8778" stop-color="#ff00ff"/><stop offset="1.0004" stop-color="#ff00d7"/></linearGradient><linearGradient id="i154" gradientUnits="userSpaceOnUse" x1="1149.88" y1="0" x2="1500.75" y2="0"><stop offset="0.0000" stop-color="#0015ff"/><stop offset="0.1482" stop-color="#0007ff"/><stop offset="0.2309" stop-color="#1b00ff"/><stop offset="0.5643" stop-color="#8b00ff"/><stop offset="0.8835" stop-color="#ff00ff"/><stop offset="1.0004" stop-color="#ff00d9"/></linearGradient><linearGradient id="i155" gradientUnits="userSpaceOnUse" x1="1149.88" y1="0" x2="1500.75" y2="0"><stop offset="0.0000" stop-color="#0014ff"/><stop offset="0.1482" stop-color="#0007ff"/><stop offset="0.2252" stop-color="#1900ff"/><stop offset="0.5643" stop-color="#8a00ff"/><stop offset="0.8892" stop-color="#ff00ff"/><stop offset="1.0004" stop-color="#ff00db"/></linearGradient><linearGradient id="i156" gradientUnits="userSpaceOnUse" x1="1149.88" y1="0" x2="1500.75" y2="0"><stop offset="0.0000" stop-color="#0013ff"/><stop offset="0.1511" stop-color="#0106ff"/><stop offset="0.2195" stop-color="#1600ff"/><stop offset="0.5643" stop-color="#8900ff"/><stop offset="0.8949" stop-color="#ff00ff"/><stop offset="1.0004" stop-color="#ff00dd"/></linearGradient><linearGradient id="i157" gradientUnits="userSpaceOnUse" x1="1149.88" y1="0" x2="1500.75" y2="0"><stop offset="0.0000" stop-color="#0013ff"/><stop offset="0.1511" stop-color="#0006ff"/><stop offset="0.2138" stop-color="#1400ff"/><stop offset="0.5330" stop-color="#7d00ff"/><stop offset="0.9006" stop-color="#ff00ff"/><stop offset="1.0004" stop-color="#ff00df"/></linearGradient><linearGradient id="i158" gradientUnits="userSpaceOnUse" x1="1149.88" y1="0" x2="1500.75" y2="0"><stop offset="0.0000" stop-color="#0012ff"/><stop offset="0.1511" stop-color="#0005ff"/><stop offset="0.2081" stop-color="#1200ff"/><stop offset="0.5358" stop-color="#7d00ff"/><stop offset="0.9063" stop-color="#ff00ff"/><stop offset="1.0004" stop-color="#ff00e0"/></linearGradient><linearGradient id="i159" gradientUnits="userSpaceOnUse" x1="1149.88" y1="0" x2="1500.75" y2="0"><stop offset="0.0000" stop-color="#0012ff"/><stop offset="0.1539" stop-color="#0104ff"/><stop offset="0.2024" stop-color="#1000ff"/><stop offset="0.5415" stop-color="#7d00ff"/><stop offset="0.9120" stop-color="#ff00ff"/><stop offset="1.0004" stop-color="#ff00e2"/></linearGradient><linearGradient id="i160" gradientUnits="userSpaceOnUse" x1="1149.88" y1="0" x2="1500.75" y2="0"><stop offset="0.0000" stop-color="#0011ff"/><stop offset="0.1539" stop-color="#0004ff"/><stop offset="0.1967" stop-color="#0e00ff"/><stop offset="0.5444" stop-color="#7d00ff"/><stop offset="0.9177" stop-color="#ff00ff"/><stop offset="1.0004" stop-color="#ff00e4"/></linearGradient><linearGradient id="i161" gradientUnits="userSpaceOnUse" x1="1149.88" y1="0" x2="1500.75" y2="0"><stop offset="0.0000" stop-color="#0010ff"/><stop offset="0.1539" stop-color="#0003ff"/><stop offset="0.1910" stop-color="#0b00ff"/><stop offset="0.5472" stop-color="#7d00ff"/><stop offset="0.9234" stop-color="#ff00ff"/><stop offset="1.0004" stop-color="#ff00e6"/></linearGradient><linearGradient id="i162" gradientUnits="userSpaceOnUse" x1="1149.88" y1="0" x2="1500.75" y2="0"><stop offset="0.0000" stop-color="#0010ff"/><stop offset="0.1568" stop-color="#0102ff"/><stop offset="0.5501" stop-color="#7d00ff"/><stop offset="0.9291" stop-color="#ff00ff"/><stop offset="1.0004" stop-color="#ff00e8"/></linearGradient><linearGradient id="i163" gradientUnits="userSpaceOnUse" x1="1149.88" y1="0" x2="1500.75" y2="0"><stop offset="0.0000" stop-color="#000fff"/><stop offset="0.1568" stop-color="#0002ff"/><stop offset="0.5529" stop-color="#7d00ff"/><stop offset="0.9348" stop-color="#ff00ff"/><stop offset="1.0004" stop-color="#ff00ea"/></linearGradient><linearGradient id="i164" gradientUnits="userSpaceOnUse" x1="1149.88" y1="0" x2="1500.75" y2="0"><stop offset="0.0000" stop-color="#000fff"/><stop offset="0.1568" stop-color="#0001ff"/><stop offset="0.5558" stop-color="#7c00ff"/><stop offset="0.9405" stop-color="#ff00ff"/><stop offset="1.0004" stop-color="#ff00eb"/></linearGradient><linearGradient id="i165" gradientUnits="userSpaceOnUse" x1="1149.88" y1="0" x2="1500.75" y2="0"><stop offset="0.0000" stop-color="#000eff"/><stop offset="0.1596" stop-color="#0101ff"/><stop offset="0.5615" stop-color="#7d00ff"/><stop offset="0.9462" stop-color="#ff00ff"/><stop offset="1.0004" stop-color="#ff00ed"/></linearGradient><linearGradient id="i166" gradientUnits="userSpaceOnUse" x1="1149.88" y1="0" x2="1500.75" y2="0"><stop offset="0.0000" stop-color="#000eff"/><stop offset="0.1596" stop-color="#0000ff"/><stop offset="0.5643" stop-color="#7d00ff"/><stop offset="0.9519" stop-color="#ff00ff"/><stop offset="1.0004" stop-color="#ff00ef"/></linearGradient><linearGradient id="i167" gradientUnits="userSpaceOnUse" x1="1149.88" y1="0" x2="1500.75" y2="0"><stop offset="0.0000" stop-color="#000dff"/><stop offset="0.1596" stop-color="#0000ff"/><stop offset="0.5672" stop-color="#7d00ff"/><stop offset="0.9576" stop-color="#ff00ff"/><stop offset="1.0004" stop-color="#ff00f1"/></linearGradient><linearGradient id="i168" gradientUnits="userSpaceOnUse" x1="1149.88" y1="0" x2="1500.75" y2="0"><stop offset="0.0000" stop-color="#000cff"/><stop offset="0.1625" stop-color="#0100ff"/><stop offset="0.5700" stop-color="#7d00ff"/><stop offset="0.9633" stop-color="#ff00ff"/><stop offset="1.0004" stop-color="#ff00f3"/></linearGradient><clipPath id="xyclip"><rect x="637.3" y="648.4" width="341.50" height="198.60"/></clipPath><linearGradient id="x0" gradientUnits="userSpaceOnUse" x1="637.30" y1="0" x2="978.80" y2="0"><stop offset="0.0000" stop-color="#74ffcb"/><stop offset="0.3953" stop-color="#b7ffc7"/><stop offset="0.7701" stop-color="#ffffc4"/><stop offset="0.9985" stop-color="#ffd6a3"/></linearGradient><linearGradient id="x1" gradientUnits="userSpaceOnUse" x1="637.30" y1="0" x2="978.80" y2="0"><stop offset="0.0000" stop-color="#76ffcc"/><stop offset="0.3895" stop-color="#b8ffc9"/><stop offset="0.7584" stop-color="#ffffc6"/><stop offset="0.9985" stop-color="#ffd4a3"/></linearGradient><linearGradient id="x2" gradientUnits="userSpaceOnUse" x1="637.30" y1="0" x2="978.80" y2="0"><stop offset="0.0000" stop-color="#77ffce"/><stop offset="0.3836" stop-color="#b9ffcb"/><stop offset="0.7467" stop-color="#ffffc8"/><stop offset="0.9985" stop-color="#ffd2a3"/></linearGradient><linearGradient id="x3" gradientUnits="userSpaceOnUse" x1="637.30" y1="0" x2="978.80" y2="0"><stop offset="0.0000" stop-color="#78ffd0"/><stop offset="0.3777" stop-color="#b9ffce"/><stop offset="0.7350" stop-color="#ffffcb"/><stop offset="0.9985" stop-color="#ffd1a4"/></linearGradient><linearGradient id="x4" gradientUnits="userSpaceOnUse" x1="637.30" y1="0" x2="978.80" y2="0"><stop offset="0.0000" stop-color="#7affd2"/><stop offset="0.3690" stop-color="#b9ffd0"/><stop offset="0.7262" stop-color="#ffffcd"/><stop offset="0.9985" stop-color="#ffcfa4"/></linearGradient><linearGradient id="x5" gradientUnits="userSpaceOnUse" x1="637.30" y1="0" x2="978.80" y2="0"><stop offset="0.0000" stop-color="#7bffd4"/><stop offset="0.3660" stop-color="#bbffd2"/><stop offset="0.7145" stop-color="#ffffcf"/><stop offset="0.9985" stop-color="#ffcda5"/></linearGradient><linearGradient id="x6" gradientUnits="userSpaceOnUse" x1="637.30" y1="0" x2="978.80" y2="0"><stop offset="0.0000" stop-color="#7cffd6"/><stop offset="0.3602" stop-color="#bbffd4"/><stop offset="0.7028" stop-color="#ffffd1"/><stop offset="0.9985" stop-color="#ffcba5"/></linearGradient><linearGradient id="x7" gradientUnits="userSpaceOnUse" x1="637.30" y1="0" x2="978.80" y2="0"><stop offset="0.0000" stop-color="#7effd8"/><stop offset="0.3543" stop-color="#bcffd6"/><stop offset="0.6911" stop-color="#ffffd4"/><stop offset="0.9985" stop-color="#ffc9a5"/></linearGradient><linearGradient id="x8" gradientUnits="userSpaceOnUse" x1="637.30" y1="0" x2="978.80" y2="0"><stop offset="0.0000" stop-color="#7fffda"/><stop offset="0.3455" stop-color="#bcffd8"/><stop offset="0.6823" stop-color="#ffffd6"/><stop offset="0.8316" stop-color="#ffe2bd"/><stop offset="0.9985" stop-color="#ffc8a6"/></linearGradient><linearGradient id="x9" gradientUnits="userSpaceOnUse" x1="637.30" y1="0" x2="978.80" y2="0"><stop offset="0.0000" stop-color="#80ffdc"/><stop offset="0.3426" stop-color="#beffda"/><stop offset="0.6706" stop-color="#ffffd8"/><stop offset="0.8258" stop-color="#ffe1be"/><stop offset="0.9985" stop-color="#ffc6a6"/></linearGradient><linearGradient id="x10" gradientUnits="userSpaceOnUse" x1="637.30" y1="0" x2="978.80" y2="0"><stop offset="0.0000" stop-color="#82ffde"/><stop offset="0.3397" stop-color="#bfffdd"/><stop offset="0.6589" stop-color="#ffffdb"/><stop offset="0.8228" stop-color="#ffe0bf"/><stop offset="0.9985" stop-color="#ffc4a7"/></linearGradient><linearGradient id="x11" gradientUnits="userSpaceOnUse" x1="637.30" y1="0" x2="978.80" y2="0"><stop offset="0.0000" stop-color="#83ffe0"/><stop offset="0.3338" stop-color="#c0ffdf"/><stop offset="0.6471" stop-color="#ffffdd"/><stop offset="0.8170" stop-color="#ffdfc0"/><stop offset="0.9985" stop-color="#ffc2a7"/></linearGradient><linearGradient id="x12" gradientUnits="userSpaceOnUse" x1="637.30" y1="0" x2="978.80" y2="0"><stop offset="0.0000" stop-color="#85ffe3"/><stop offset="0.3221" stop-color="#bfffe1"/><stop offset="0.6384" stop-color="#ffffdf"/><stop offset="0.8082" stop-color="#ffdec2"/><stop offset="0.9985" stop-color="#ffc1a7"/></linearGradient><linearGradient id="x13" gradientUnits="userSpaceOnUse" x1="637.30" y1="0" x2="978.80" y2="0"><stop offset="0.0000" stop-color="#86ffe5"/><stop offset="0.3192" stop-color="#c1ffe3"/><stop offset="0.6266" stop-color="#ffffe2"/><stop offset="0.8023" stop-color="#ffddc3"/><stop offset="0.9985" stop-color="#ffbfa8"/></linearGradient><linearGradient id="x14" gradientUnits="userSpaceOnUse" x1="637.30" y1="0" x2="978.80" y2="0"><stop offset="0.0000" stop-color="#88ffe7"/><stop offset="0.3163" stop-color="#c2ffe6"/><stop offset="0.6149" stop-color="#ffffe4"/><stop offset="0.7965" stop-color="#ffdcc5"/><stop offset="0.9985" stop-color="#ffbda8"/></linearGradient><linearGradient id="x15" gradientUnits="userSpaceOnUse" x1="637.30" y1="0" x2="978.80" y2="0"><stop offset="0.0000" stop-color="#89ffe9"/><stop offset="0.3104" stop-color="#c3ffe8"/><stop offset="0.6032" stop-color="#ffffe7"/><stop offset="0.7906" stop-color="#ffdbc6"/><stop offset="0.9985" stop-color="#ffbca9"/></linearGradient><linearGradient id="x16" gradientUnits="userSpaceOnUse" x1="637.30" y1="0" x2="978.80" y2="0"><stop offset="0.0000" stop-color="#8bffeb"/><stop offset="0.2987" stop-color="#c2ffea"/><stop offset="0.5944" stop-color="#ffffe9"/><stop offset="0.7848" stop-color="#ffdac7"/><stop offset="0.9985" stop-color="#ffbaa9"/></linearGradient><linearGradient id="x17" gradientUnits="userSpaceOnUse" x1="637.30" y1="0" x2="978.80" y2="0"><stop offset="0.0000" stop-color="#8cffed"/><stop offset="0.2958" stop-color="#c4ffed"/><stop offset="0.5827" stop-color="#ffffec"/><stop offset="0.7789" stop-color="#ffd9c8"/><stop offset="0.9985" stop-color="#ffb8a9"/></linearGradient><linearGradient id="x18" gradientUnits="userSpaceOnUse" x1="637.30" y1="0" x2="978.80" y2="0"><stop offset="0.0000" stop-color="#8efff0"/><stop offset="0.2928" stop-color="#c5ffef"/><stop offset="0.5710" stop-color="#ffffee"/><stop offset="0.7701" stop-color="#ffd9ca"/><stop offset="0.9985" stop-color="#ffb6aa"/></linearGradient><linearGradient id="x19" gradientUnits="userSpaceOnUse" x1="637.30" y1="0" x2="978.80" y2="0"><stop offset="0.0000" stop-color="#8ffff2"/><stop offset="0.2870" stop-color="#c6fff1"/><stop offset="0.5593" stop-color="#fffff1"/><stop offset="0.7672" stop-color="#ffd7cb"/><stop offset="0.9985" stop-color="#ffb5aa"/></linearGradient><linearGradient id="x20" gradientUnits="userSpaceOnUse" x1="637.30" y1="0" x2="978.80" y2="0"><stop offset="0.0000" stop-color="#91fff4"/><stop offset="0.5505" stop-color="#fffff3"/><stop offset="0.7584" stop-color="#ffd7cd"/><stop offset="0.9985" stop-color="#ffb3aa"/></linearGradient><linearGradient id="x21" gradientUnits="userSpaceOnUse" x1="637.30" y1="0" x2="978.80" y2="0"><stop offset="0.0000" stop-color="#93fff7"/><stop offset="0.5388" stop-color="#fffff6"/><stop offset="0.7526" stop-color="#ffd6ce"/><stop offset="0.9985" stop-color="#ffb1ab"/></linearGradient><linearGradient id="x22" gradientUnits="userSpaceOnUse" x1="637.30" y1="0" x2="978.80" y2="0"><stop offset="0.0000" stop-color="#94fff9"/><stop offset="0.5271" stop-color="#fffff9"/><stop offset="0.7467" stop-color="#ffd5cf"/><stop offset="0.9985" stop-color="#ffb0ab"/></linearGradient><linearGradient id="x23" gradientUnits="userSpaceOnUse" x1="637.30" y1="0" x2="978.80" y2="0"><stop offset="0.0000" stop-color="#96fffb"/><stop offset="0.5154" stop-color="#fffffb"/><stop offset="0.7408" stop-color="#ffd4d0"/><stop offset="0.9985" stop-color="#ffaeac"/></linearGradient><linearGradient id="x24" gradientUnits="userSpaceOnUse" x1="637.30" y1="0" x2="978.80" y2="0"><stop offset="0.0000" stop-color="#98fffe"/><stop offset="0.5037" stop-color="#fffffe"/><stop offset="0.7350" stop-color="#ffd3d2"/><stop offset="0.9985" stop-color="#ffadac"/></linearGradient><linearGradient id="x25" gradientUnits="userSpaceOnUse" x1="637.30" y1="0" x2="978.80" y2="0"><stop offset="0.0000" stop-color="#99feff"/><stop offset="0.5007" stop-color="#fffdff"/><stop offset="0.7321" stop-color="#ffd1d2"/><stop offset="0.9985" stop-color="#ffabac"/></linearGradient><linearGradient id="x26" gradientUnits="userSpaceOnUse" x1="637.30" y1="0" x2="978.80" y2="0"><stop offset="0.0000" stop-color="#99fbff"/><stop offset="0.5007" stop-color="#fffbff"/><stop offset="0.7321" stop-color="#ffcfd3"/><stop offset="0.9985" stop-color="#ffa9ad"/></linearGradient><linearGradient id="x27" gradientUnits="userSpaceOnUse" x1="637.30" y1="0" x2="978.80" y2="0"><stop offset="0.0000" stop-color="#99f9ff"/><stop offset="0.5037" stop-color="#fff8ff"/><stop offset="0.7321" stop-color="#ffcdd3"/><stop offset="0.9985" stop-color="#ffa8ad"/></linearGradient><linearGradient id="x28" gradientUnits="userSpaceOnUse" x1="637.30" y1="0" x2="978.80" y2="0"><stop offset="0.0000" stop-color="#99f7ff"/><stop offset="0.5037" stop-color="#fff6ff"/><stop offset="0.7321" stop-color="#ffcbd3"/><stop offset="0.9985" stop-color="#ffa6ad"/></linearGradient><linearGradient id="x29" gradientUnits="userSpaceOnUse" x1="637.30" y1="0" x2="978.80" y2="0"><stop offset="0.0000" stop-color="#99f4ff"/><stop offset="0.5037" stop-color="#fff3ff"/><stop offset="0.7350" stop-color="#ffc9d3"/><stop offset="0.9985" stop-color="#ffa5ae"/></linearGradient><linearGradient id="x30" gradientUnits="userSpaceOnUse" x1="637.30" y1="0" x2="978.80" y2="0"><stop offset="0.0000" stop-color="#9af2ff"/><stop offset="0.5066" stop-color="#fff0ff"/><stop offset="0.7350" stop-color="#ffc7d3"/><stop offset="0.9985" stop-color="#ffa3ae"/></linearGradient><linearGradient id="x31" gradientUnits="userSpaceOnUse" x1="637.30" y1="0" x2="978.80" y2="0"><stop offset="0.0000" stop-color="#9af0ff"/><stop offset="0.5066" stop-color="#ffeeff"/><stop offset="0.7350" stop-color="#ffc5d4"/><stop offset="0.9985" stop-color="#ffa1ae"/></linearGradient><linearGradient id="x32" gradientUnits="userSpaceOnUse" x1="637.30" y1="0" x2="978.80" y2="0"><stop offset="0.0000" stop-color="#9aedff"/><stop offset="0.5066" stop-color="#ffebff"/><stop offset="0.7350" stop-color="#ffc3d4"/><stop offset="0.9985" stop-color="#ffa0af"/></linearGradient><linearGradient id="x33" gradientUnits="userSpaceOnUse" x1="637.30" y1="0" x2="978.80" y2="0"><stop offset="0.0000" stop-color="#9aebff"/><stop offset="0.5066" stop-color="#ffe9ff"/><stop offset="0.7379" stop-color="#ffc1d4"/><stop offset="0.9985" stop-color="#ff9eaf"/></linearGradient><linearGradient id="x34" gradientUnits="userSpaceOnUse" x1="637.30" y1="0" x2="978.80" y2="0"><stop offset="0.0000" stop-color="#9be9ff"/><stop offset="0.5095" stop-color="#ffe6ff"/><stop offset="0.7379" stop-color="#ffbfd4"/><stop offset="0.9985" stop-color="#ff9daf"/></linearGradient><linearGradient id="x35" gradientUnits="userSpaceOnUse" x1="637.30" y1="0" x2="978.80" y2="0"><stop offset="0.0000" stop-color="#9be6ff"/><stop offset="0.5095" stop-color="#ffe4ff"/><stop offset="0.7379" stop-color="#ffbdd4"/><stop offset="0.9985" stop-color="#ff9bb0"/></linearGradient><linearGradient id="x36" gradientUnits="userSpaceOnUse" x1="637.30" y1="0" x2="978.80" y2="0"><stop offset="0.0000" stop-color="#9be4ff"/><stop offset="0.5095" stop-color="#ffe2ff"/><stop offset="0.7379" stop-color="#ffbbd5"/><stop offset="0.9985" stop-color="#ff9ab0"/></linearGradient><linearGradient id="x37" gradientUnits="userSpaceOnUse" x1="637.30" y1="0" x2="978.80" y2="0"><stop offset="0.0000" stop-color="#9be2ff"/><stop offset="0.5124" stop-color="#ffdfff"/><stop offset="0.7379" stop-color="#ffb9d5"/><stop offset="0.9985" stop-color="#ff98b0"/></linearGradient><linearGradient id="x38" gradientUnits="userSpaceOnUse" x1="637.30" y1="0" x2="978.80" y2="0"><stop offset="0.0000" stop-color="#9be0ff"/><stop offset="0.5124" stop-color="#ffddff"/><stop offset="0.7379" stop-color="#ffb7d5"/><stop offset="0.9985" stop-color="#ff97b1"/></linearGradient><linearGradient id="x39" gradientUnits="userSpaceOnUse" x1="637.30" y1="0" x2="978.80" y2="0"><stop offset="0.0000" stop-color="#9cdeff"/><stop offset="0.5124" stop-color="#ffdaff"/><stop offset="0.7408" stop-color="#ffb5d5"/><stop offset="0.9985" stop-color="#ff95b1"/></linearGradient><linearGradient id="x40" gradientUnits="userSpaceOnUse" x1="637.30" y1="0" x2="978.80" y2="0"><stop offset="0.0000" stop-color="#9cdbff"/><stop offset="0.5124" stop-color="#ffd8ff"/><stop offset="0.7408" stop-color="#ffb3d5"/><stop offset="0.9985" stop-color="#ff94b1"/></linearGradient><linearGradient id="x41" gradientUnits="userSpaceOnUse" x1="637.30" y1="0" x2="978.80" y2="0"><stop offset="0.0000" stop-color="#9cd9ff"/><stop offset="0.5154" stop-color="#ffd5ff"/><stop offset="0.7408" stop-color="#ffb1d6"/><stop offset="0.9985" stop-color="#ff92b2"/></linearGradient><linearGradient id="x42" gradientUnits="userSpaceOnUse" x1="637.30" y1="0" x2="978.80" y2="0"><stop offset="0.0000" stop-color="#9cd7ff"/><stop offset="0.5154" stop-color="#ffd3ff"/><stop offset="0.7408" stop-color="#ffb0d6"/><stop offset="0.9985" stop-color="#ff91b2"/></linearGradient><linearGradient id="x43" gradientUnits="userSpaceOnUse" x1="637.30" y1="0" x2="978.80" y2="0"><stop offset="0.0000" stop-color="#9cd5ff"/><stop offset="0.5154" stop-color="#ffd1ff"/><stop offset="0.7438" stop-color="#ffadd6"/><stop offset="0.9985" stop-color="#ff8fb2"/></linearGradient><linearGradient id="x44" gradientUnits="userSpaceOnUse" x1="637.30" y1="0" x2="978.80" y2="0"><stop offset="0.0000" stop-color="#9dd3ff"/><stop offset="0.5183" stop-color="#ffceff"/><stop offset="0.7438" stop-color="#ffacd6"/><stop offset="0.9985" stop-color="#ff8eb3"/></linearGradient><linearGradient id="x45" gradientUnits="userSpaceOnUse" x1="637.30" y1="0" x2="978.80" y2="0"><stop offset="0.0000" stop-color="#9dd1ff"/><stop offset="0.5183" stop-color="#ffccff"/><stop offset="0.7438" stop-color="#ffaad6"/><stop offset="0.9985" stop-color="#ff8cb3"/></linearGradient><linearGradient id="x46" gradientUnits="userSpaceOnUse" x1="637.30" y1="0" x2="978.80" y2="0"><stop offset="0.0000" stop-color="#9dcfff"/><stop offset="0.5183" stop-color="#ffcaff"/><stop offset="0.7438" stop-color="#ffa8d6"/><stop offset="0.9985" stop-color="#ff8bb3"/></linearGradient><linearGradient id="x47" gradientUnits="userSpaceOnUse" x1="637.30" y1="0" x2="978.80" y2="0"><stop offset="0.0000" stop-color="#9dcdff"/><stop offset="0.5183" stop-color="#ffc8ff"/><stop offset="0.7467" stop-color="#ffa6d6"/><stop offset="0.9985" stop-color="#ff89b4"/></linearGradient><linearGradient id="x48" gradientUnits="userSpaceOnUse" x1="637.30" y1="0" x2="978.80" y2="0"><stop offset="0.0000" stop-color="#9dcbff"/><stop offset="0.5212" stop-color="#ffc6ff"/><stop offset="0.7438" stop-color="#ffa5d7"/><stop offset="0.9985" stop-color="#ff88b4"/></linearGradient><linearGradient id="x49" gradientUnits="userSpaceOnUse" x1="637.30" y1="0" x2="978.80" y2="0"><stop offset="0.0000" stop-color="#9dc8ff"/><stop offset="0.5212" stop-color="#ffc3ff"/><stop offset="0.7438" stop-color="#ffa3d7"/><stop offset="0.9985" stop-color="#ff86b4"/></linearGradient><linearGradient id="x50" gradientUnits="userSpaceOnUse" x1="637.30" y1="0" x2="978.80" y2="0"><stop offset="0.0000" stop-color="#9ec6ff"/><stop offset="0.5212" stop-color="#ffc1ff"/><stop offset="0.7467" stop-color="#ffa1d7"/><stop offset="0.9985" stop-color="#ff85b5"/></linearGradient></defs>
<rect x="0.00" y="0.00" width="1668.00" height="948.00" fill="#333333" />
<rect x="0.00" y="0.00" width="1668.00" height="39.50" fill="#212121" />
<rect x="0.00" y="39.50" width="1.30" height="830.00" fill="#232323" />
<rect x="1663.5" y="39.5" width="4.5" height="830" fill="#262626"/>
<path d="M0.8 38.5 V7 Q0.8 1.2 6.5 1.2 H109 Q114.8 1.2 114.8 7 V38.5 Z" fill="url(#g1)"/>
<path d="M0.8 38.5 V7 Q0.8 1.2 6.5 1.2 H109 Q114.8 1.2 114.8 7 V38.5" fill="none" stroke="#8f8f8f" stroke-width="1.3"/>
<line x1="73.50" y1="1.50" x2="73.50" y2="38.50" stroke="#7a7a7a" stroke-width="1.2" />
<text x="8.00" y="26.00" font-size="14" fill="#ececec" textLength="58" lengthAdjust="spacingAndGlyphs">History 1</text>
<circle cx="92.5" cy="22" r="11.5" fill="#3a3a3a"/>
<line x1="88.50" y1="23.00" x2="96.50" y2="23.00" stroke="#9a9a9a" stroke-width="1.2" />
<line x1="92.50" y1="19.00" x2="92.50" y2="27.00" stroke="#9a9a9a" stroke-width="1.2" />
<path d="M1055.3 38.5 V5 Q1055.3 1 1059.3 1 H1229 Q1233 1 1233 5 V38.5 Z" fill="url(#g2)"/>
<path d="M1055.3 38.5 V5 Q1055.3 1 1059.3 1 H1062.3 V38.5 Z" fill="#00d400"/>
<text x="1066.00" y="15.50" font-size="13" fill="#f0f0f0" textLength="82.5" lengthAdjust="spacingAndGlyphs">X-Rite i1Pro 3</text>
<text x="1066.00" y="33.60" font-size="13" fill="#f0f0f0" textLength="69" lengthAdjust="spacingAndGlyphs">Direct View</text>
<circle cx="1164.7" cy="20" r="12" fill="url(#g3)"/>
<path d="M1158.2 17 L1171.2 17 L1164.7 24 Z" fill="#ffffff"/>
<line x1="1188.30" y1="4.00" x2="1188.30" y2="38.50" stroke="#3c3c3c" stroke-width="1.5" />
<circle cx="1214.2" cy="19.8" r="16.3" fill="#0000e6" stroke="#ffffff" stroke-width="1.2"/>
<text x="1214.20" y="24.00" font-size="11.5" fill="#ffffff" text-anchor="middle" font-weight="bold">715</text>
<path d="M1241.4 38.5 V5 Q1241.4 1 1245.4 1 H1398.6 Q1402.6 1 1402.6 5 V38.5 Z" fill="url(#g4)"/>
<path d="M1241.4 38.5 V5 Q1241.4 1 1245.4 1 H1248.4 V38.5 Z" fill="#00d400"/>
<text x="1252.70" y="15.50" font-size="13" fill="#f0f0f0" textLength="80" lengthAdjust="spacingAndGlyphs">Mobile Forge</text>
<circle cx="1382.6" cy="20" r="12" fill="url(#g5)"/>
<path d="M1376.1 17 L1389.1 17 L1382.6 24 Z" fill="#ffffff"/>
<path d="M1411.7 38.5 V5 Q1411.7 1 1415.7 1 H1586 Q1590 1 1590 5 V38.5 Z" fill="url(#g6)"/>
<path d="M1411.7 38.5 V5 Q1411.7 1 1415.7 1 H1418.7 V38.5 Z" fill="#e6e600"/>
<text x="1422.40" y="15.50" font-size="13" fill="#f0f0f0" textLength="131" lengthAdjust="spacingAndGlyphs">Direct Display Control</text>
<circle cx="1570" cy="20" r="12" fill="url(#g7)"/>
<path d="M1563.5 17 L1576.5 17 L1570 24 Z" fill="#ffffff"/>
<rect x="1594.5" y="1.5" width="41.5" height="34" rx="5" fill="url(#g8)" stroke="#c4c4c4" stroke-width="1.1"/>
<circle cx="1615" cy="18" r="12.3" fill="url(#g9)"/>
<path d="M1615.00 12.20 L1615.00 10.60 M1619.10 13.90 L1620.23 12.77 M1620.80 18.00 L1622.40 18.00 M1619.10 22.10 L1620.23 23.23 M1615.00 23.80 L1615.00 25.40 M1610.90 22.10 L1609.77 23.23 M1609.20 18.00 L1607.60 18.00 M1610.90 13.90 L1609.77 12.77 " stroke="#e0e0e0" stroke-width="3" stroke-linecap="round"/>
<circle cx="1615" cy="18" r="5.3" fill="none" stroke="#e0e0e0" stroke-width="2.4"/>
<rect x="1637.5" y="1.5" width="40" height="34" rx="5" fill="url(#g8)" stroke="#c4c4c4" stroke-width="1.1"/>
<circle cx="1653.5" cy="18" r="12.3" fill="url(#g9)"/>
<path d="M1650 17.5 L1656.8 11.2 L1656.8 23.8 Z" fill="#ffffff"/>
<text x="9.00" y="96.00" font-size="39" fill="#f2f2f2" textLength="228.5" lengthAdjust="spacingAndGlyphs">Color Gamut</text>
<text x="188.60" y="196.20" font-size="14" fill="#dddddd" text-anchor="middle" textLength="78.5" lengthAdjust="spacingAndGlyphs">DeltaE 2000</text>
<rect x="20.80" y="200.30" width="335.50" height="372.70" fill="#232323" />
<line x1="65.32" y1="200.30" x2="65.32" y2="573.00" stroke="#8c8c8c" stroke-width="1.5" />
<line x1="109.84" y1="200.30" x2="109.84" y2="573.00" stroke="#8c8c8c" stroke-width="1.5" />
<line x1="154.36" y1="200.30" x2="154.36" y2="573.00" stroke="#8c8c8c" stroke-width="1.5" />
<line x1="198.88" y1="200.30" x2="198.88" y2="573.00" stroke="#8c8c8c" stroke-width="1.5" />
<line x1="243.40" y1="200.30" x2="243.40" y2="573.00" stroke="#8c8c8c" stroke-width="1.5" />
<line x1="287.92" y1="200.30" x2="287.92" y2="573.00" stroke="#8c8c8c" stroke-width="1.5" />
<line x1="332.44" y1="200.30" x2="332.44" y2="573.00" stroke="#8c8c8c" stroke-width="1.5" />
<line x1="20.80" y1="573.00" x2="20.80" y2="578.50" stroke="#dddddd" stroke-width="1.5" />
<text x="20.80" y="595.00" font-size="14" fill="#dddddd" text-anchor="middle">0</text>
<line x1="65.32" y1="573.00" x2="65.32" y2="578.50" stroke="#dddddd" stroke-width="1.5" />
<text x="65.32" y="595.00" font-size="14" fill="#dddddd" text-anchor="middle">2</text>
<line x1="109.84" y1="573.00" x2="109.84" y2="578.50" stroke="#dddddd" stroke-width="1.5" />
<text x="109.84" y="595.00" font-size="14" fill="#dddddd" text-anchor="middle">4</text>
<line x1="154.36" y1="573.00" x2="154.36" y2="578.50" stroke="#dddddd" stroke-width="1.5" />
<text x="154.36" y="595.00" font-size="14" fill="#dddddd" text-anchor="middle">6</text>
<line x1="198.88" y1="573.00" x2="198.88" y2="578.50" stroke="#dddddd" stroke-width="1.5" />
<text x="198.88" y="595.00" font-size="14" fill="#dddddd" text-anchor="middle">8</text>
<line x1="243.40" y1="573.00" x2="243.40" y2="578.50" stroke="#dddddd" stroke-width="1.5" />
<text x="243.40" y="595.00" font-size="14" fill="#dddddd" text-anchor="middle">10</text>
<line x1="287.92" y1="573.00" x2="287.92" y2="578.50" stroke="#dddddd" stroke-width="1.5" />
<text x="287.92" y="595.00" font-size="14" fill="#dddddd" text-anchor="middle">12</text>
<line x1="332.44" y1="573.00" x2="332.44" y2="578.50" stroke="#dddddd" stroke-width="1.5" />
<text x="332.44" y="595.00" font-size="14" fill="#dddddd" text-anchor="middle">14</text>
<rect x="20.8" y="200.3" width="335.5" height="372.7" fill="none" stroke="#8c8c8c" stroke-width="1.5"/>
<rect x="21.50" y="204.30" width="54.20" height="36" fill="url(#g10)" stroke="#000" stroke-width="1.6"/>
<rect x="21.50" y="250.95" width="17.03" height="36" fill="url(#g11)" stroke="#000" stroke-width="1.6"/>
<rect x="21.50" y="297.60" width="1.14" height="36" fill="url(#g12)" stroke="#000" stroke-width="1.6"/>
<rect x="21.50" y="344.25" width="25.99" height="36" fill="url(#g13)" stroke="#000" stroke-width="1.6"/>
<rect x="21.50" y="390.90" width="26.03" height="36" fill="url(#g14)" stroke="#000" stroke-width="1.6"/>
<rect x="21.50" y="437.55" width="17.11" height="36" fill="url(#g15)" stroke="#000" stroke-width="1.6"/>
<rect x="21.50" y="484.20" width="45.77" height="36" fill="url(#g16)" stroke="#000" stroke-width="1.6"/>
<rect x="21.50" y="530.85" width="46.96" height="36" fill="url(#g17)" stroke="#000" stroke-width="1.6"/>
<text x="467.75" y="87.00" font-size="14" fill="#dddddd" text-anchor="middle">Delta L</text>
<rect x="408.75" y="92.50" width="144.60" height="316.25" fill="#232323" />
<line x1="408.75" y1="92.50" x2="553.35" y2="92.50" stroke="#8c8c8c" stroke-width="1.5" />
<line x1="403.25" y1="92.50" x2="408.75" y2="92.50" stroke="#dddddd" stroke-width="1.5" />
<text x="402.75" y="97.50" font-size="14" fill="#dddddd" text-anchor="end">15</text>
<line x1="408.75" y1="145.21" x2="553.35" y2="145.21" stroke="#8c8c8c" stroke-width="1.5" />
<line x1="403.25" y1="145.21" x2="408.75" y2="145.21" stroke="#dddddd" stroke-width="1.5" />
<text x="402.75" y="150.21" font-size="14" fill="#dddddd" text-anchor="end">10</text>
<line x1="408.75" y1="197.92" x2="553.35" y2="197.92" stroke="#8c8c8c" stroke-width="1.5" />
<line x1="403.25" y1="197.92" x2="408.75" y2="197.92" stroke="#dddddd" stroke-width="1.5" />
<text x="402.75" y="202.92" font-size="14" fill="#dddddd" text-anchor="end">5</text>
<line x1="408.75" y1="250.62" x2="553.35" y2="250.62" stroke="#8c8c8c" stroke-width="1.5" />
<line x1="403.25" y1="250.62" x2="408.75" y2="250.62" stroke="#dddddd" stroke-width="1.5" />
<text x="402.75" y="255.62" font-size="14" fill="#dddddd" text-anchor="end">0</text>
<line x1="408.75" y1="303.33" x2="553.35" y2="303.33" stroke="#8c8c8c" stroke-width="1.5" />
<line x1="403.25" y1="303.33" x2="408.75" y2="303.33" stroke="#dddddd" stroke-width="1.5" />
<text x="402.75" y="308.33" font-size="14" fill="#dddddd" text-anchor="end">-5</text>
<line x1="408.75" y1="356.04" x2="553.35" y2="356.04" stroke="#8c8c8c" stroke-width="1.5" />
<line x1="403.25" y1="356.04" x2="408.75" y2="356.04" stroke="#dddddd" stroke-width="1.5" />
<text x="402.75" y="361.04" font-size="14" fill="#dddddd" text-anchor="end">-10</text>
<line x1="408.75" y1="408.75" x2="553.35" y2="408.75" stroke="#8c8c8c" stroke-width="1.5" />
<line x1="403.25" y1="408.75" x2="408.75" y2="408.75" stroke="#dddddd" stroke-width="1.5" />
<text x="402.75" y="413.75" font-size="14" fill="#dddddd" text-anchor="end">-15</text>
<rect x="408.75" y="92.5" width="144.6" height="316.25" fill="none" stroke="#8c8c8c" stroke-width="1.5"/>
<line x1="408.75" y1="408.75" x2="408.75" y2="414.75" stroke="#dddddd" stroke-width="1.5" />
<line x1="553.35" y1="408.75" x2="553.35" y2="414.75" stroke="#dddddd" stroke-width="1.5" />
<text x="480.75" y="424.50" font-size="14" fill="#dddddd" text-anchor="middle">100W</text>
<line x1="422.25" y1="250.80" x2="538.25" y2="250.80" stroke="#111111" stroke-width="2" />
<text x="664.75" y="87.00" font-size="14" fill="#dddddd" text-anchor="middle">Delta C</text>
<rect x="605.75" y="92.50" width="144.60" height="316.25" fill="#232323" />
<line x1="605.75" y1="92.50" x2="750.35" y2="92.50" stroke="#8c8c8c" stroke-width="1.5" />
<line x1="600.25" y1="92.50" x2="605.75" y2="92.50" stroke="#dddddd" stroke-width="1.5" />
<text x="599.75" y="97.50" font-size="14" fill="#dddddd" text-anchor="end">15</text>
<line x1="605.75" y1="145.21" x2="750.35" y2="145.21" stroke="#8c8c8c" stroke-width="1.5" />
<line x1="600.25" y1="145.21" x2="605.75" y2="145.21" stroke="#dddddd" stroke-width="1.5" />
<text x="599.75" y="150.21" font-size="14" fill="#dddddd" text-anchor="end">10</text>
<line x1="605.75" y1="197.92" x2="750.35" y2="197.92" stroke="#8c8c8c" stroke-width="1.5" />
<line x1="600.25" y1="197.92" x2="605.75" y2="197.92" stroke="#dddddd" stroke-width="1.5" />
<text x="599.75" y="202.92" font-size="14" fill="#dddddd" text-anchor="end">5</text>
<line x1="605.75" y1="250.62" x2="750.35" y2="250.62" stroke="#8c8c8c" stroke-width="1.5" />
<line x1="600.25" y1="250.62" x2="605.75" y2="250.62" stroke="#dddddd" stroke-width="1.5" />
<text x="599.75" y="255.62" font-size="14" fill="#dddddd" text-anchor="end">0</text>
<line x1="605.75" y1="303.33" x2="750.35" y2="303.33" stroke="#8c8c8c" stroke-width="1.5" />
<line x1="600.25" y1="303.33" x2="605.75" y2="303.33" stroke="#dddddd" stroke-width="1.5" />
<text x="599.75" y="308.33" font-size="14" fill="#dddddd" text-anchor="end">-5</text>
<line x1="605.75" y1="356.04" x2="750.35" y2="356.04" stroke="#8c8c8c" stroke-width="1.5" />
<line x1="600.25" y1="356.04" x2="605.75" y2="356.04" stroke="#dddddd" stroke-width="1.5" />
<text x="599.75" y="361.04" font-size="14" fill="#dddddd" text-anchor="end">-10</text>
<line x1="605.75" y1="408.75" x2="750.35" y2="408.75" stroke="#8c8c8c" stroke-width="1.5" />
<line x1="600.25" y1="408.75" x2="605.75" y2="408.75" stroke="#dddddd" stroke-width="1.5" />
<text x="599.75" y="413.75" font-size="14" fill="#dddddd" text-anchor="end">-15</text>
<rect x="605.75" y="92.5" width="144.6" height="316.25" fill="none" stroke="#8c8c8c" stroke-width="1.5"/>
<line x1="605.75" y1="408.75" x2="605.75" y2="414.75" stroke="#dddddd" stroke-width="1.5" />
<line x1="750.35" y1="408.75" x2="750.35" y2="414.75" stroke="#dddddd" stroke-width="1.5" />
<text x="677.75" y="424.50" font-size="14" fill="#dddddd" text-anchor="middle">100W</text>
<rect x="620.5" y="230.5" width="115" height="20.5" fill="url(#g18)" stroke="#000" stroke-width="1.6"/>
<text x="861.75" y="87.00" font-size="14" fill="#dddddd" text-anchor="middle">Delta H</text>
<rect x="802.75" y="92.50" width="144.60" height="316.25" fill="#232323" />
<line x1="802.75" y1="92.50" x2="947.35" y2="92.50" stroke="#8c8c8c" stroke-width="1.5" />
<line x1="797.25" y1="92.50" x2="802.75" y2="92.50" stroke="#dddddd" stroke-width="1.5" />
<text x="796.75" y="97.50" font-size="14" fill="#dddddd" text-anchor="end">15</text>
<line x1="802.75" y1="145.21" x2="947.35" y2="145.21" stroke="#8c8c8c" stroke-width="1.5" />
<line x1="797.25" y1="145.21" x2="802.75" y2="145.21" stroke="#dddddd" stroke-width="1.5" />
<text x="796.75" y="150.21" font-size="14" fill="#dddddd" text-anchor="end">10</text>
<line x1="802.75" y1="197.92" x2="947.35" y2="197.92" stroke="#8c8c8c" stroke-width="1.5" />
<line x1="797.25" y1="197.92" x2="802.75" y2="197.92" stroke="#dddddd" stroke-width="1.5" />
<text x="796.75" y="202.92" font-size="14" fill="#dddddd" text-anchor="end">5</text>
<line x1="802.75" y1="250.62" x2="947.35" y2="250.62" stroke="#8c8c8c" stroke-width="1.5" />
<line x1="797.25" y1="250.62" x2="802.75" y2="250.62" stroke="#dddddd" stroke-width="1.5" />
<text x="796.75" y="255.62" font-size="14" fill="#dddddd" text-anchor="end">0</text>
<line x1="802.75" y1="303.33" x2="947.35" y2="303.33" stroke="#8c8c8c" stroke-width="1.5" />
<line x1="797.25" y1="303.33" x2="802.75" y2="303.33" stroke="#dddddd" stroke-width="1.5" />
<text x="796.75" y="308.33" font-size="14" fill="#dddddd" text-anchor="end">-5</text>
<line x1="802.75" y1="356.04" x2="947.35" y2="356.04" stroke="#8c8c8c" stroke-width="1.5" />
<line x1="797.25" y1="356.04" x2="802.75" y2="356.04" stroke="#dddddd" stroke-width="1.5" />
<text x="796.75" y="361.04" font-size="14" fill="#dddddd" text-anchor="end">-10</text>
<line x1="802.75" y1="408.75" x2="947.35" y2="408.75" stroke="#8c8c8c" stroke-width="1.5" />
<line x1="797.25" y1="408.75" x2="802.75" y2="408.75" stroke="#dddddd" stroke-width="1.5" />
<text x="796.75" y="413.75" font-size="14" fill="#dddddd" text-anchor="end">-15</text>
<rect x="802.75" y="92.5" width="144.6" height="316.25" fill="none" stroke="#8c8c8c" stroke-width="1.5"/>
<line x1="802.75" y1="408.75" x2="802.75" y2="414.75" stroke="#dddddd" stroke-width="1.5" />
<line x1="947.35" y1="408.75" x2="947.35" y2="414.75" stroke="#dddddd" stroke-width="1.5" />
<text x="874.75" y="424.50" font-size="14" fill="#dddddd" text-anchor="middle">100W</text>
<line x1="816.25" y1="250.80" x2="932.25" y2="250.80" stroke="#111111" stroke-width="2" />
<rect x="376.00" y="441.30" width="592.00" height="163.30" fill="#000000" />
<rect x="393.20" y="449.50" width="62.00" height="65.50" fill="#c3c3c1" />
<rect x="393.20" y="515.00" width="62.00" height="65.80" fill="#c0c0c0" />
<rect x="393.20" y="449.5" width="62" height="131.3" fill="none" stroke="#ffffff" stroke-width="1.5"/>
<text x="424.20" y="596.00" font-size="13" fill="#ffffff" text-anchor="middle">White</text>
<rect x="465.47" y="449.50" width="62.00" height="65.50" fill="#c00000" />
<rect x="465.47" y="515.00" width="62.00" height="65.80" fill="#bf1414" />
<rect x="465.47" y="449.5" width="62" height="131.3" fill="none" stroke="#ffffff" stroke-width="1.5"/>
<text x="496.47" y="596.00" font-size="13" fill="#ffffff" text-anchor="middle">Red</text>
<rect x="537.74" y="449.50" width="62.00" height="65.50" fill="#08c000" />
<rect x="537.74" y="515.00" width="62.00" height="65.80" fill="#18c018" />
<rect x="537.74" y="449.5" width="62" height="131.3" fill="none" stroke="#ffffff" stroke-width="1.5"/>
<text x="568.74" y="596.00" font-size="13" fill="#ffffff" text-anchor="middle">Green</text>
<rect x="610.01" y="449.50" width="62.00" height="65.50" fill="#0020c0" />
<rect x="610.01" y="515.00" width="62.00" height="65.80" fill="#1c1cc0" />
<rect x="610.01" y="449.5" width="62" height="131.3" fill="none" stroke="#ffffff" stroke-width="1.5"/>
<text x="641.01" y="596.00" font-size="13" fill="#ffffff" text-anchor="middle">Blue</text>
<rect x="682.28" y="449.50" width="62.00" height="65.50" fill="#00c0c0" />
<rect x="682.28" y="515.00" width="62.00" height="65.80" fill="#20c0c0" />
<rect x="682.28" y="449.5" width="62" height="131.3" fill="none" stroke="#ffffff" stroke-width="1.5"/>
<text x="713.28" y="596.00" font-size="13" fill="#ffffff" text-anchor="middle">Cyan</text>
<rect x="754.55" y="449.50" width="62.00" height="65.50" fill="#c000c0" />
<rect x="754.55" y="515.00" width="62.00" height="65.80" fill="#c000c0" />
<rect x="754.55" y="449.5" width="62" height="131.3" fill="none" stroke="#ffffff" stroke-width="1.5"/>
<text x="785.55" y="596.00" font-size="13" fill="#ffffff" text-anchor="middle">Magenta</text>
<rect x="826.82" y="449.50" width="62.00" height="65.50" fill="#c0c000" />
<rect x="826.82" y="515.00" width="62.00" height="65.80" fill="#c4c020" />
<rect x="826.82" y="449.5" width="62" height="131.3" fill="none" stroke="#ffffff" stroke-width="1.5"/>
<text x="857.82" y="596.00" font-size="13" fill="#ffffff" text-anchor="middle">Yellow</text>
<rect x="899.09" y="449.50" width="62.00" height="65.50" fill="#fefffe" />
<rect x="899.09" y="515.00" width="62.00" height="65.80" fill="#ffffff" />
<rect x="899.09" y="449.5" width="62" height="131.3" fill="none" stroke="#ffffff" stroke-width="1.5"/>
<text x="930.09" y="596.00" font-size="13" fill="#ffffff" text-anchor="middle">100W</text>
<text transform="translate(389 478.5) rotate(-90)" font-size="12" fill="#ffffff" text-anchor="middle" font-weight="bold" textLength="34" lengthAdjust="spacingAndGlyphs">Actual</text>
<text transform="translate(389 553) rotate(-90)" font-size="12" fill="#ffffff" text-anchor="middle" font-weight="bold" textLength="36" lengthAdjust="spacingAndGlyphs">Target</text>
<rect x="974.80" y="60.20" width="700.00" height="557.30" fill="#1b1b1b" />
<rect x="1664.00" y="60.20" width="4.00" height="557.30" fill="#121212" />
<rect x="981.30" y="66.80" width="680.70" height="544.70" fill="#333333" />
<text x="1321.80" y="85.00" font-size="14" fill="#dddddd" text-anchor="middle" textLength="84" lengthAdjust="spacingAndGlyphs">CIE 1976 u'v'</text>
<rect x="1018.75" y="90.60" width="639.85" height="491.70" fill="#232323" />
<g clip-path="url(#plotclip)"><g clip-path="url(#locus)">
<rect x="1018.75" y="90" width="639.85" height="4" fill="url(#o0)"/>
<rect x="1018.75" y="93" width="639.85" height="4" fill="url(#o1)"/>
<rect x="1018.75" y="96" width="639.85" height="4" fill="url(#o2)"/>
<rect x="1018.75" y="99" width="639.85" height="4" fill="url(#o3)"/>
<rect x="1018.75" y="102" width="639.85" height="4" fill="url(#o4)"/>
<rect x="1018.75" y="105" width="639.85" height="4" fill="url(#o5)"/>
<rect x="1018.75" y="108" width="639.85" height="4" fill="url(#o6)"/>
<rect x="1018.75" y="111" width="639.85" height="4" fill="url(#o7)"/>
<rect x="1018.75" y="114" width="639.85" height="4" fill="url(#o8)"/>
<rect x="1018.75" y="117" width="639.85" height="4" fill="url(#o9)"/>
<rect x="1018.75" y="120" width="639.85" height="4" fill="url(#o10)"/>
<rect x="1018.75" y="123" width="639.85" height="4" fill="url(#o11)"/>
<rect x="1018.75" y="126" width="639.85" height="4" fill="url(#o12)"/>
<rect x="1018.75" y="129" width="639.85" height="4" fill="url(#o13)"/>
<rect x="1018.75" y="132" width="639.85" height="4" fill="url(#o14)"/>
<rect x="1018.75" y="135" width="639.85" height="4" fill="url(#o15)"/>
<rect x="1018.75" y="138" width="639.85" height="4" fill="url(#o16)"/>
<rect x="1018.75" y="141" width="639.85" height="4" fill="url(#o17)"/>
<rect x="1018.75" y="144" width="639.85" height="4" fill="url(#o18)"/>
<rect x="1018.75" y="147" width="639.85" height="4" fill="url(#o19)"/>
<rect x="1018.75" y="150" width="639.85" height="4" fill="url(#o20)"/>
<rect x="1018.75" y="153" width="639.85" height="4" fill="url(#o21)"/>
<rect x="1018.75" y="156" width="639.85" height="4" fill="url(#o22)"/>
<rect x="1018.75" y="159" width="639.85" height="4" fill="url(#o23)"/>
<rect x="1018.75" y="162" width="639.85" height="4" fill="url(#o24)"/>
<rect x="1018.75" y="165" width="639.85" height="4" fill="url(#o25)"/>
<rect x="1018.75" y="168" width="639.85" height="4" fill="url(#o26)"/>
<rect x="1018.75" y="171" width="639.85" height="4" fill="url(#o27)"/>
<rect x="1018.75" y="174" width="639.85" height="4" fill="url(#o28)"/>
<rect x="1018.75" y="177" width="639.85" height="4" fill="url(#o29)"/>
<rect x="1018.75" y="180" width="639.85" height="4" fill="url(#o30)"/>
<rect x="1018.75" y="183" width="639.85" height="4" fill="url(#o31)"/>
<rect x="1018.75" y="186" width="639.85" height="4" fill="url(#o32)"/>
<rect x="1018.75" y="189" width="639.85" height="4" fill="url(#o33)"/>
<rect x="1018.75" y="192" width="639.85" height="4" fill="url(#o34)"/>
<rect x="1018.75" y="195" width="639.85" height="4" fill="url(#o35)"/>
<rect x="1018.75" y="198" width="639.85" height="4" fill="url(#o36)"/>
<rect x="1018.75" y="201" width="639.85" height="4" fill="url(#o37)"/>
<rect x="1018.75" y="204" width="639.85" height="4" fill="url(#o38)"/>
<rect x="1018.75" y="207" width="639.85" height="4" fill="url(#o39)"/>
<rect x="1018.75" y="210" width="639.85" height="4" fill="url(#o40)"/>
<rect x="1018.75" y="213" width="639.85" height="4" fill="url(#o41)"/>
<rect x="1018.75" y="216" width="639.85" height="4" fill="url(#o42)"/>
<rect x="1018.75" y="219" width="639.85" height="4" fill="url(#o43)"/>
<rect x="1018.75" y="222" width="639.85" height="4" fill="url(#o44)"/>
<rect x="1018.75" y="225" width="639.85" height="4" fill="url(#o45)"/>
<rect x="1018.75" y="228" width="639.85" height="4" fill="url(#o46)"/>
<rect x="1018.75" y="231" width="639.85" height="4" fill="url(#o47)"/>
<rect x="1018.75" y="234" width="639.85" height="4" fill="url(#o48)"/>
<rect x="1018.75" y="237" width="639.85" height="4" fill="url(#o49)"/>
<rect x="1018.75" y="240" width="639.85" height="4" fill="url(#o50)"/>
<rect x="1018.75" y="243" width="639.85" height="4" fill="url(#o51)"/>
<rect x="1018.75" y="246" width="639.85" height="4" fill="url(#o52)"/>
<rect x="1018.75" y="249" width="639.85" height="4" fill="url(#o53)"/>
<rect x="1018.75" y="252" width="639.85" height="4" fill="url(#o54)"/>
<rect x="1018.75" y="255" width="639.85" height="4" fill="url(#o55)"/>
<rect x="1018.75" y="258" width="639.85" height="4" fill="url(#o56)"/>
<rect x="1018.75" y="261" width="639.85" height="4" fill="url(#o57)"/>
<rect x="1018.75" y="264" width="639.85" height="4" fill="url(#o58)"/>
<rect x="1018.75" y="267" width="639.85" height="4" fill="url(#o59)"/>
<rect x="1018.75" y="270" width="639.85" height="4" fill="url(#o60)"/>
<rect x="1018.75" y="273" width="639.85" height="4" fill="url(#o61)"/>
<rect x="1018.75" y="276" width="639.85" height="4" fill="url(#o62)"/>
<rect x="1018.75" y="279" width="639.85" height="4" fill="url(#o63)"/>
<rect x="1018.75" y="282" width="639.85" height="4" fill="url(#o64)"/>
<rect x="1018.75" y="285" width="639.85" height="4" fill="url(#o65)"/>
<rect x="1018.75" y="288" width="639.85" height="4" fill="url(#o66)"/>
<rect x="1018.75" y="291" width="639.85" height="4" fill="url(#o67)"/>
<rect x="1018.75" y="294" width="639.85" height="4" fill="url(#o68)"/>
<rect x="1018.75" y="297" width="639.85" height="4" fill="url(#o69)"/>
<rect x="1018.75" y="300" width="639.85" height="4" fill="url(#o70)"/>
<rect x="1018.75" y="303" width="639.85" height="4" fill="url(#o71)"/>
<rect x="1018.75" y="306" width="639.85" height="4" fill="url(#o72)"/>
<rect x="1018.75" y="309" width="639.85" height="4" fill="url(#o73)"/>
<rect x="1018.75" y="312" width="639.85" height="4" fill="url(#o74)"/>
<rect x="1018.75" y="315" width="639.85" height="4" fill="url(#o75)"/>
<rect x="1018.75" y="318" width="639.85" height="4" fill="url(#o76)"/>
<rect x="1018.75" y="321" width="639.85" height="4" fill="url(#o77)"/>
<rect x="1018.75" y="324" width="639.85" height="4" fill="url(#o78)"/>
<rect x="1018.75" y="327" width="639.85" height="4" fill="url(#o79)"/>
<rect x="1018.75" y="330" width="639.85" height="4" fill="url(#o80)"/>
<rect x="1018.75" y="333" width="639.85" height="4" fill="url(#o81)"/>
<rect x="1018.75" y="336" width="639.85" height="4" fill="url(#o82)"/>
<rect x="1018.75" y="339" width="639.85" height="4" fill="url(#o83)"/>
<rect x="1018.75" y="342" width="639.85" height="4" fill="url(#o84)"/>
<rect x="1018.75" y="345" width="639.85" height="4" fill="url(#o85)"/>
<rect x="1018.75" y="348" width="639.85" height="4" fill="url(#o86)"/>
<rect x="1018.75" y="351" width="639.85" height="4" fill="url(#o87)"/>
<rect x="1018.75" y="354" width="639.85" height="4" fill="url(#o88)"/>
<rect x="1018.75" y="357" width="639.85" height="4" fill="url(#o89)"/>
<rect x="1018.75" y="360" width="639.85" height="4" fill="url(#o90)"/>
<rect x="1018.75" y="363" width="639.85" height="4" fill="url(#o91)"/>
<rect x="1018.75" y="366" width="639.85" height="4" fill="url(#o92)"/>
<rect x="1018.75" y="369" width="639.85" height="4" fill="url(#o93)"/>
<rect x="1018.75" y="372" width="639.85" height="4" fill="url(#o94)"/>
<rect x="1018.75" y="375" width="639.85" height="4" fill="url(#o95)"/>
<rect x="1018.75" y="378" width="639.85" height="4" fill="url(#o96)"/>
<rect x="1018.75" y="381" width="639.85" height="4" fill="url(#o97)"/>
<rect x="1018.75" y="384" width="639.85" height="4" fill="url(#o98)"/>
<rect x="1018.75" y="387" width="639.85" height="4" fill="url(#o99)"/>
<rect x="1018.75" y="390" width="639.85" height="4" fill="url(#o100)"/>
<rect x="1018.75" y="393" width="639.85" height="4" fill="url(#o101)"/>
<rect x="1018.75" y="396" width="639.85" height="4" fill="url(#o102)"/>
<rect x="1018.75" y="399" width="639.85" height="4" fill="url(#o103)"/>
<rect x="1018.75" y="402" width="639.85" height="4" fill="url(#o104)"/>
<rect x="1018.75" y="405" width="639.85" height="4" fill="url(#o105)"/>
<rect x="1018.75" y="408" width="639.85" height="4" fill="url(#o106)"/>
<rect x="1018.75" y="411" width="639.85" height="4" fill="url(#o107)"/>
<rect x="1018.75" y="414" width="639.85" height="4" fill="url(#o108)"/>
<rect x="1018.75" y="417" width="639.85" height="4" fill="url(#o109)"/>
<rect x="1018.75" y="420" width="639.85" height="4" fill="url(#o110)"/>
<rect x="1018.75" y="423" width="639.85" height="4" fill="url(#o111)"/>
<rect x="1018.75" y="426" width="639.85" height="4" fill="url(#o112)"/>
<rect x="1018.75" y="429" width="639.85" height="4" fill="url(#o113)"/>
<rect x="1018.75" y="432" width="639.85" height="4" fill="url(#o114)"/>
<rect x="1018.75" y="435" width="639.85" height="4" fill="url(#o115)"/>
<rect x="1018.75" y="438" width="639.85" height="4" fill="url(#o116)"/>
<rect x="1018.75" y="441" width="639.85" height="4" fill="url(#o117)"/>
<rect x="1018.75" y="444" width="639.85" height="4" fill="url(#o118)"/>
<rect x="1018.75" y="447" width="639.85" height="4" fill="url(#o119)"/>
<rect x="1018.75" y="450" width="639.85" height="4" fill="url(#o120)"/>
<rect x="1018.75" y="453" width="639.85" height="4" fill="url(#o121)"/>
<rect x="1018.75" y="456" width="639.85" height="4" fill="url(#o122)"/>
<rect x="1018.75" y="459" width="639.85" height="4" fill="url(#o123)"/>
<rect x="1018.75" y="462" width="639.85" height="4" fill="url(#o124)"/>
<rect x="1018.75" y="465" width="639.85" height="4" fill="url(#o125)"/>
<rect x="1018.75" y="468" width="639.85" height="4" fill="url(#o126)"/>
<rect x="1018.75" y="471" width="639.85" height="4" fill="url(#o127)"/>
<rect x="1018.75" y="474" width="639.85" height="4" fill="url(#o128)"/>
<rect x="1018.75" y="477" width="639.85" height="4" fill="url(#o129)"/>
<rect x="1018.75" y="480" width="639.85" height="4" fill="url(#o130)"/>
<rect x="1018.75" y="483" width="639.85" height="4" fill="url(#o131)"/>
<rect x="1018.75" y="486" width="639.85" height="4" fill="url(#o132)"/>
<rect x="1018.75" y="489" width="639.85" height="4" fill="url(#o133)"/>
<rect x="1018.75" y="492" width="639.85" height="4" fill="url(#o134)"/>
<rect x="1018.75" y="495" width="639.85" height="4" fill="url(#o135)"/>
<rect x="1018.75" y="498" width="639.85" height="4" fill="url(#o136)"/>
<rect x="1018.75" y="501" width="639.85" height="4" fill="url(#o137)"/>
<rect x="1018.75" y="504" width="639.85" height="4" fill="url(#o138)"/>
<rect x="1018.75" y="507" width="639.85" height="4" fill="url(#o139)"/>
<rect x="1018.75" y="510" width="639.85" height="4" fill="url(#o140)"/>
<rect x="1018.75" y="513" width="639.85" height="4" fill="url(#o141)"/>
<rect x="1018.75" y="516" width="639.85" height="4" fill="url(#o142)"/>
<rect x="1018.75" y="519" width="639.85" height="4" fill="url(#o143)"/>
<rect x="1018.75" y="522" width="639.85" height="4" fill="url(#o144)"/>
<rect x="1018.75" y="525" width="639.85" height="4" fill="url(#o145)"/>
<rect x="1018.75" y="528" width="639.85" height="4" fill="url(#o146)"/>
<rect x="1018.75" y="531" width="639.85" height="4" fill="url(#o147)"/>
<rect x="1018.75" y="534" width="639.85" height="4" fill="url(#o148)"/>
<rect x="1018.75" y="537" width="639.85" height="4" fill="url(#o149)"/>
<rect x="1018.75" y="540" width="639.85" height="4" fill="url(#o150)"/>
<rect x="1018.75" y="543" width="639.85" height="4" fill="url(#o151)"/>
<rect x="1018.75" y="546" width="639.85" height="4" fill="url(#o152)"/>
<rect x="1018.75" y="549" width="639.85" height="4" fill="url(#o153)"/>
<rect x="1018.75" y="552" width="639.85" height="4" fill="url(#o154)"/>
<rect x="1018.75" y="555" width="639.85" height="4" fill="url(#o155)"/>
<rect x="1018.75" y="558" width="639.85" height="4" fill="url(#o156)"/>
<rect x="1018.75" y="561" width="639.85" height="4" fill="url(#o157)"/>
<rect x="1018.75" y="564" width="639.85" height="4" fill="url(#o158)"/>
<rect x="1018.75" y="567" width="639.85" height="4" fill="url(#o159)"/>
<rect x="1018.75" y="570" width="639.85" height="4" fill="url(#o160)"/>
<rect x="1018.75" y="573" width="639.85" height="4" fill="url(#o161)"/>
<rect x="1018.75" y="576" width="639.85" height="4" fill="url(#o162)"/>
<rect x="1018.75" y="579" width="639.85" height="4" fill="url(#o163)"/>
<rect x="1018.75" y="582" width="639.85" height="4" fill="url(#o164)"/>
</g>
<g clip-path="url(#tri)">
<rect x="1149.88" y="119" width="350.88" height="3" fill="url(#i0)"/>
<rect x="1149.88" y="121" width="350.88" height="3" fill="url(#i1)"/>
<rect x="1149.88" y="123" width="350.88" height="3" fill="url(#i2)"/>
<rect x="1149.88" y="125" width="350.88" height="3" fill="url(#i3)"/>
<rect x="1149.88" y="127" width="350.88" height="3" fill="url(#i4)"/>
<rect x="1149.88" y="129" width="350.88" height="3" fill="url(#i5)"/>
<rect x="1149.88" y="131" width="350.88" height="3" fill="url(#i6)"/>
<rect x="1149.88" y="133" width="350.88" height="3" fill="url(#i7)"/>
<rect x="1149.88" y="135" width="350.88" height="3" fill="url(#i8)"/>
<rect x="1149.88" y="137" width="350.88" height="3" fill="url(#i9)"/>
<rect x="1149.88" y="139" width="350.88" height="3" fill="url(#i10)"/>
<rect x="1149.88" y="141" width="350.88" height="3" fill="url(#i11)"/>
<rect x="1149.88" y="143" width="350.88" height="3" fill="url(#i12)"/>
<rect x="1149.88" y="145" width="350.88" height="3" fill="url(#i13)"/>
<rect x="1149.88" y="147" width="350.88" height="3" fill="url(#i14)"/>
<rect x="1149.88" y="149" width="350.88" height="3" fill="url(#i15)"/>
<rect x="1149.88" y="151" width="350.88" height="3" fill="url(#i16)"/>
<rect x="1149.88" y="153" width="350.88" height="3" fill="url(#i17)"/>
<rect x="1149.88" y="155" width="350.88" height="3" fill="url(#i18)"/>
<rect x="1149.88" y="157" width="350.88" height="3" fill="url(#i19)"/>
<rect x="1149.88" y="159" width="350.88" height="3" fill="url(#i20)"/>
<rect x="1149.88" y="161" width="350.88" height="3" fill="url(#i21)"/>
<rect x="1149.88" y="163" width="350.88" height="3" fill="url(#i22)"/>
<rect x="1149.88" y="165" width="350.88" height="3" fill="url(#i23)"/>
<rect x="1149.88" y="167" width="350.88" height="3" fill="url(#i24)"/>
<rect x="1149.88" y="169" width="350.88" height="3" fill="url(#i25)"/>
<rect x="1149.88" y="171" width="350.88" height="3" fill="url(#i26)"/>
<rect x="1149.88" y="173" width="350.88" height="3" fill="url(#i27)"/>
<rect x="1149.88" y="175" width="350.88" height="3" fill="url(#i28)"/>
<rect x="1149.88" y="177" width="350.88" height="3" fill="url(#i29)"/>
<rect x="1149.88" y="179" width="350.88" height="3" fill="url(#i30)"/>
<rect x="1149.88" y="181" width="350.88" height="3" fill="url(#i31)"/>
<rect x="1149.88" y="183" width="350.88" height="3" fill="url(#i32)"/>
<rect x="1149.88" y="185" width="350.88" height="3" fill="url(#i33)"/>
<rect x="1149.88" y="187" width="350.88" height="3" fill="url(#i34)"/>
<rect x="1149.88" y="189" width="350.88" height="3" fill="url(#i35)"/>
<rect x="1149.88" y="191" width="350.88" height="3" fill="url(#i36)"/>
<rect x="1149.88" y="193" width="350.88" height="3" fill="url(#i37)"/>
<rect x="1149.88" y="195" width="350.88" height="3" fill="url(#i38)"/>
<rect x="1149.88" y="197" width="350.88" height="3" fill="url(#i39)"/>
<rect x="1149.88" y="199" width="350.88" height="3" fill="url(#i40)"/>
<rect x="1149.88" y="201" width="350.88" height="3" fill="url(#i41)"/>
<rect x="1149.88" y="203" width="350.88" height="3" fill="url(#i42)"/>
<rect x="1149.88" y="205" width="350.88" height="3" fill="url(#i43)"/>
<rect x="1149.88" y="207" width="350.88" height="3" fill="url(#i44)"/>
<rect x="1149.88" y="209" width="350.88" height="3" fill="url(#i45)"/>
<rect x="1149.88" y="211" width="350.88" height="3" fill="url(#i46)"/>
<rect x="1149.88" y="213" width="350.88" height="3" fill="url(#i47)"/>
<rect x="1149.88" y="215" width="350.88" height="3" fill="url(#i48)"/>
<rect x="1149.88" y="217" width="350.88" height="3" fill="url(#i49)"/>
<rect x="1149.88" y="219" width="350.88" height="3" fill="url(#i50)"/>
<rect x="1149.88" y="221" width="350.88" height="3" fill="url(#i51)"/>
<rect x="1149.88" y="223" width="350.88" height="3" fill="url(#i52)"/>
<rect x="1149.88" y="225" width="350.88" height="3" fill="url(#i53)"/>
<rect x="1149.88" y="227" width="350.88" height="3" fill="url(#i54)"/>
<rect x="1149.88" y="229" width="350.88" height="3" fill="url(#i55)"/>
<rect x="1149.88" y="231" width="350.88" height="3" fill="url(#i56)"/>
<rect x="1149.88" y="233" width="350.88" height="3" fill="url(#i57)"/>
<rect x="1149.88" y="235" width="350.88" height="3" fill="url(#i58)"/>
<rect x="1149.88" y="237" width="350.88" height="3" fill="url(#i59)"/>
<rect x="1149.88" y="239" width="350.88" height="3" fill="url(#i60)"/>
<rect x="1149.88" y="241" width="350.88" height="3" fill="url(#i61)"/>
<rect x="1149.88" y="243" width="350.88" height="3" fill="url(#i62)"/>
<rect x="1149.88" y="245" width="350.88" height="3" fill="url(#i63)"/>
<rect x="1149.88" y="247" width="350.88" height="3" fill="url(#i64)"/>
<rect x="1149.88" y="249" width="350.88" height="3" fill="url(#i65)"/>
<rect x="1149.88" y="251" width="350.88" height="3" fill="url(#i66)"/>
<rect x="1149.88" y="253" width="350.88" height="3" fill="url(#i67)"/>
<rect x="1149.88" y="255" width="350.88" height="3" fill="url(#i68)"/>
<rect x="1149.88" y="257" width="350.88" height="3" fill="url(#i69)"/>
<rect x="1149.88" y="259" width="350.88" height="3" fill="url(#i70)"/>
<rect x="1149.88" y="261" width="350.88" height="3" fill="url(#i71)"/>
<rect x="1149.88" y="263" width="350.88" height="3" fill="url(#i72)"/>
<rect x="1149.88" y="265" width="350.88" height="3" fill="url(#i73)"/>
<rect x="1149.88" y="267" width="350.88" height="3" fill="url(#i74)"/>
<rect x="1149.88" y="269" width="350.88" height="3" fill="url(#i75)"/>
<rect x="1149.88" y="271" width="350.88" height="3" fill="url(#i76)"/>
<rect x="1149.88" y="273" width="350.88" height="3" fill="url(#i77)"/>
<rect x="1149.88" y="275" width="350.88" height="3" fill="url(#i78)"/>
<rect x="1149.88" y="277" width="350.88" height="3" fill="url(#i79)"/>
<rect x="1149.88" y="279" width="350.88" height="3" fill="url(#i80)"/>
<rect x="1149.88" y="281" width="350.88" height="3" fill="url(#i81)"/>
<rect x="1149.88" y="283" width="350.88" height="3" fill="url(#i82)"/>
<rect x="1149.88" y="285" width="350.88" height="3" fill="url(#i83)"/>
<rect x="1149.88" y="287" width="350.88" height="3" fill="url(#i84)"/>
<rect x="1149.88" y="289" width="350.88" height="3" fill="url(#i85)"/>
<rect x="1149.88" y="291" width="350.88" height="3" fill="url(#i86)"/>
<rect x="1149.88" y="293" width="350.88" height="3" fill="url(#i87)"/>
<rect x="1149.88" y="295" width="350.88" height="3" fill="url(#i88)"/>
<rect x="1149.88" y="297" width="350.88" height="3" fill="url(#i89)"/>
<rect x="1149.88" y="299" width="350.88" height="3" fill="url(#i90)"/>
<rect x="1149.88" y="301" width="350.88" height="3" fill="url(#i91)"/>
<rect x="1149.88" y="303" width="350.88" height="3" fill="url(#i92)"/>
<rect x="1149.88" y="305" width="350.88" height="3" fill="url(#i93)"/>
<rect x="1149.88" y="307" width="350.88" height="3" fill="url(#i94)"/>
<rect x="1149.88" y="309" width="350.88" height="3" fill="url(#i95)"/>
<rect x="1149.88" y="311" width="350.88" height="3" fill="url(#i96)"/>
<rect x="1149.88" y="313" width="350.88" height="3" fill="url(#i97)"/>
<rect x="1149.88" y="315" width="350.88" height="3" fill="url(#i98)"/>
<rect x="1149.88" y="317" width="350.88" height="3" fill="url(#i99)"/>
<rect x="1149.88" y="319" width="350.88" height="3" fill="url(#i100)"/>
<rect x="1149.88" y="321" width="350.88" height="3" fill="url(#i101)"/>
<rect x="1149.88" y="323" width="350.88" height="3" fill="url(#i102)"/>
<rect x="1149.88" y="325" width="350.88" height="3" fill="url(#i103)"/>
<rect x="1149.88" y="327" width="350.88" height="3" fill="url(#i104)"/>
<rect x="1149.88" y="329" width="350.88" height="3" fill="url(#i105)"/>
<rect x="1149.88" y="331" width="350.88" height="3" fill="url(#i106)"/>
<rect x="1149.88" y="333" width="350.88" height="3" fill="url(#i107)"/>
<rect x="1149.88" y="335" width="350.88" height="3" fill="url(#i108)"/>
<rect x="1149.88" y="337" width="350.88" height="3" fill="url(#i109)"/>
<rect x="1149.88" y="339" width="350.88" height="3" fill="url(#i110)"/>
<rect x="1149.88" y="341" width="350.88" height="3" fill="url(#i111)"/>
<rect x="1149.88" y="343" width="350.88" height="3" fill="url(#i112)"/>
<rect x="1149.88" y="345" width="350.88" height="3" fill="url(#i113)"/>
<rect x="1149.88" y="347" width="350.88" height="3" fill="url(#i114)"/>
<rect x="1149.88" y="349" width="350.88" height="3" fill="url(#i115)"/>
<rect x="1149.88" y="351" width="350.88" height="3" fill="url(#i116)"/>
<rect x="1149.88" y="353" width="350.88" height="3" fill="url(#i117)"/>
<rect x="1149.88" y="355" width="350.88" height="3" fill="url(#i118)"/>
<rect x="1149.88" y="357" width="350.88" height="3" fill="url(#i119)"/>
<rect x="1149.88" y="359" width="350.88" height="3" fill="url(#i120)"/>
<rect x="1149.88" y="361" width="350.88" height="3" fill="url(#i121)"/>
<rect x="1149.88" y="363" width="350.88" height="3" fill="url(#i122)"/>
<rect x="1149.88" y="365" width="350.88" height="3" fill="url(#i123)"/>
<rect x="1149.88" y="367" width="350.88" height="3" fill="url(#i124)"/>
<rect x="1149.88" y="369" width="350.88" height="3" fill="url(#i125)"/>
<rect x="1149.88" y="371" width="350.88" height="3" fill="url(#i126)"/>
<rect x="1149.88" y="373" width="350.88" height="3" fill="url(#i127)"/>
<rect x="1149.88" y="375" width="350.88" height="3" fill="url(#i128)"/>
<rect x="1149.88" y="377" width="350.88" height="3" fill="url(#i129)"/>
<rect x="1149.88" y="379" width="350.88" height="3" fill="url(#i130)"/>
<rect x="1149.88" y="381" width="350.88" height="3" fill="url(#i131)"/>
<rect x="1149.88" y="383" width="350.88" height="3" fill="url(#i132)"/>
<rect x="1149.88" y="385" width="350.88" height="3" fill="url(#i133)"/>
<rect x="1149.88" y="387" width="350.88" height="3" fill="url(#i134)"/>
<rect x="1149.88" y="389" width="350.88" height="3" fill="url(#i135)"/>
<rect x="1149.88" y="391" width="350.88" height="3" fill="url(#i136)"/>
<rect x="1149.88" y="393" width="350.88" height="3" fill="url(#i137)"/>
<rect x="1149.88" y="395" width="350.88" height="3" fill="url(#i138)"/>
<rect x="1149.88" y="397" width="350.88" height="3" fill="url(#i139)"/>
<rect x="1149.88" y="399" width="350.88" height="3" fill="url(#i140)"/>
<rect x="1149.88" y="401" width="350.88" height="3" fill="url(#i141)"/>
<rect x="1149.88" y="403" width="350.88" height="3" fill="url(#i142)"/>
<rect x="1149.88" y="405" width="350.88" height="3" fill="url(#i143)"/>
<rect x="1149.88" y="407" width="350.88" height="3" fill="url(#i144)"/>
<rect x="1149.88" y="409" width="350.88" height="3" fill="url(#i145)"/>
<rect x="1149.88" y="411" width="350.88" height="3" fill="url(#i146)"/>
<rect x="1149.88" y="413" width="350.88" height="3" fill="url(#i147)"/>
<rect x="1149.88" y="415" width="350.88" height="3" fill="url(#i148)"/>
<rect x="1149.88" y="417" width="350.88" height="3" fill="url(#i149)"/>
<rect x="1149.88" y="419" width="350.88" height="3" fill="url(#i150)"/>
<rect x="1149.88" y="421" width="350.88" height="3" fill="url(#i151)"/>
<rect x="1149.88" y="423" width="350.88" height="3" fill="url(#i152)"/>
<rect x="1149.88" y="425" width="350.88" height="3" fill="url(#i153)"/>
<rect x="1149.88" y="427" width="350.88" height="3" fill="url(#i154)"/>
<rect x="1149.88" y="429" width="350.88" height="3" fill="url(#i155)"/>
<rect x="1149.88" y="431" width="350.88" height="3" fill="url(#i156)"/>
<rect x="1149.88" y="433" width="350.88" height="3" fill="url(#i157)"/>
<rect x="1149.88" y="435" width="350.88" height="3" fill="url(#i158)"/>
<rect x="1149.88" y="437" width="350.88" height="3" fill="url(#i159)"/>
<rect x="1149.88" y="439" width="350.88" height="3" fill="url(#i160)"/>
<rect x="1149.88" y="441" width="350.88" height="3" fill="url(#i161)"/>
<rect x="1149.88" y="443" width="350.88" height="3" fill="url(#i162)"/>
<rect x="1149.88" y="445" width="350.88" height="3" fill="url(#i163)"/>
<rect x="1149.88" y="447" width="350.88" height="3" fill="url(#i164)"/>
<rect x="1149.88" y="449" width="350.88" height="3" fill="url(#i165)"/>
<rect x="1149.88" y="451" width="350.88" height="3" fill="url(#i166)"/>
<rect x="1149.88" y="453" width="350.88" height="3" fill="url(#i167)"/>
<rect x="1149.88" y="455" width="350.88" height="3" fill="url(#i168)"/>
</g></g>
<rect x="1018.75" y="90.6" width="639.85" height="491.70" fill="none" stroke="#8c8c8c" stroke-width="1.5"/>
<line x1="1013.25" y1="582.30" x2="1018.75" y2="582.30" stroke="#dddddd" stroke-width="1.5" />
<text x="1012.25" y="587.30" font-size="14" fill="#dddddd" text-anchor="end">0</text>
<line x1="1018.75" y1="582.30" x2="1018.75" y2="588.30" stroke="#dddddd" stroke-width="1.5" />
<text x="1018.75" y="604.00" font-size="14" fill="#dddddd" text-anchor="middle">0</text>
<line x1="1013.25" y1="541.38" x2="1018.75" y2="541.38" stroke="#dddddd" stroke-width="1.5" />
<text x="1012.25" y="546.38" font-size="14" fill="#dddddd" text-anchor="end">0,05</text>
<line x1="1072.00" y1="582.30" x2="1072.00" y2="588.30" stroke="#dddddd" stroke-width="1.5" />
<text x="1072.00" y="604.00" font-size="14" fill="#dddddd" text-anchor="middle">0,05</text>
<line x1="1013.25" y1="500.46" x2="1018.75" y2="500.46" stroke="#dddddd" stroke-width="1.5" />
<text x="1012.25" y="505.46" font-size="14" fill="#dddddd" text-anchor="end">0,1</text>
<line x1="1125.25" y1="582.30" x2="1125.25" y2="588.30" stroke="#dddddd" stroke-width="1.5" />
<text x="1125.25" y="604.00" font-size="14" fill="#dddddd" text-anchor="middle">0,1</text>
<line x1="1013.25" y1="459.54" x2="1018.75" y2="459.54" stroke="#dddddd" stroke-width="1.5" />
<text x="1012.25" y="464.54" font-size="14" fill="#dddddd" text-anchor="end">0,15</text>
<line x1="1178.50" y1="582.30" x2="1178.50" y2="588.30" stroke="#dddddd" stroke-width="1.5" />
<text x="1178.50" y="604.00" font-size="14" fill="#dddddd" text-anchor="middle">0,15</text>
<line x1="1013.25" y1="418.62" x2="1018.75" y2="418.62" stroke="#dddddd" stroke-width="1.5" />
<text x="1012.25" y="423.62" font-size="14" fill="#dddddd" text-anchor="end">0,2</text>
<line x1="1231.75" y1="582.30" x2="1231.75" y2="588.30" stroke="#dddddd" stroke-width="1.5" />
<text x="1231.75" y="604.00" font-size="14" fill="#dddddd" text-anchor="middle">0,2</text>
<line x1="1013.25" y1="377.70" x2="1018.75" y2="377.70" stroke="#dddddd" stroke-width="1.5" />
<text x="1012.25" y="382.70" font-size="14" fill="#dddddd" text-anchor="end">0,25</text>
<line x1="1285.00" y1="582.30" x2="1285.00" y2="588.30" stroke="#dddddd" stroke-width="1.5" />
<text x="1285.00" y="604.00" font-size="14" fill="#dddddd" text-anchor="middle">0,25</text>
<line x1="1013.25" y1="336.78" x2="1018.75" y2="336.78" stroke="#dddddd" stroke-width="1.5" />
<text x="1012.25" y="341.78" font-size="14" fill="#dddddd" text-anchor="end">0,3</text>
<line x1="1338.25" y1="582.30" x2="1338.25" y2="588.30" stroke="#dddddd" stroke-width="1.5" />
<text x="1338.25" y="604.00" font-size="14" fill="#dddddd" text-anchor="middle">0,3</text>
<line x1="1013.25" y1="295.86" x2="1018.75" y2="295.86" stroke="#dddddd" stroke-width="1.5" />
<text x="1012.25" y="300.86" font-size="14" fill="#dddddd" text-anchor="end">0,35</text>
<line x1="1391.50" y1="582.30" x2="1391.50" y2="588.30" stroke="#dddddd" stroke-width="1.5" />
<text x="1391.50" y="604.00" font-size="14" fill="#dddddd" text-anchor="middle">0,35</text>
<line x1="1013.25" y1="254.94" x2="1018.75" y2="254.94" stroke="#dddddd" stroke-width="1.5" />
<text x="1012.25" y="259.94" font-size="14" fill="#dddddd" text-anchor="end">0,4</text>
<line x1="1444.75" y1="582.30" x2="1444.75" y2="588.30" stroke="#dddddd" stroke-width="1.5" />
<text x="1444.75" y="604.00" font-size="14" fill="#dddddd" text-anchor="middle">0,4</text>
<line x1="1013.25" y1="214.02" x2="1018.75" y2="214.02" stroke="#dddddd" stroke-width="1.5" />
<text x="1012.25" y="219.02" font-size="14" fill="#dddddd" text-anchor="end">0,45</text>
<line x1="1498.00" y1="582.30" x2="1498.00" y2="588.30" stroke="#dddddd" stroke-width="1.5" />
<text x="1498.00" y="604.00" font-size="14" fill="#dddddd" text-anchor="middle">0,45</text>
<line x1="1013.25" y1="173.10" x2="1018.75" y2="173.10" stroke="#dddddd" stroke-width="1.5" />
<text x="1012.25" y="178.10" font-size="14" fill="#dddddd" text-anchor="end">0,5</text>
<line x1="1551.25" y1="582.30" x2="1551.25" y2="588.30" stroke="#dddddd" stroke-width="1.5" />
<text x="1551.25" y="604.00" font-size="14" fill="#dddddd" text-anchor="middle">0,5</text>
<line x1="1013.25" y1="132.18" x2="1018.75" y2="132.18" stroke="#dddddd" stroke-width="1.5" />
<text x="1012.25" y="137.18" font-size="14" fill="#dddddd" text-anchor="end">0,55</text>
<line x1="1604.50" y1="582.30" x2="1604.50" y2="588.30" stroke="#dddddd" stroke-width="1.5" />
<text x="1604.50" y="604.00" font-size="14" fill="#dddddd" text-anchor="middle">0,55</text>
<rect x="1144.25" y="113.15" width="14.5" height="14.5" fill="none" stroke="#ffffff" stroke-width="1.4"/>
<circle cx="1150.10" cy="118.90" r="4.3" fill="#10c010" stroke="#000" stroke-width="1.5"/>
<rect x="1228.25" y="121.25" width="14.5" height="14.5" fill="none" stroke="#ffffff" stroke-width="1.4"/>
<circle cx="1235.40" cy="126.90" r="4.3" fill="#c8c800" stroke="#000" stroke-width="1.5"/>
<rect x="1221.25" y="190.15" width="14.5" height="14.5" fill="none" stroke="#000000" stroke-width="1.4"/>
<circle cx="1227.60" cy="196.40" r="4.3" fill="#ffffff" stroke="#000" stroke-width="1.5"/>
<rect x="1159.25" y="201.15" width="14.5" height="14.5" fill="none" stroke="#ffffff" stroke-width="1.4"/>
<circle cx="1163.40" cy="205.90" r="4.3" fill="#00c0c0" stroke="#000" stroke-width="1.5"/>
<rect x="1491.25" y="145.65" width="14.5" height="14.5" fill="none" stroke="#ffffff" stroke-width="1.4"/>
<circle cx="1509.20" cy="150.30" r="4.3" fill="#d00000" stroke="#000" stroke-width="1.5"/>
<rect x="1336.25" y="303.15" width="14.5" height="14.5" fill="none" stroke="#ffffff" stroke-width="1.4"/>
<circle cx="1342.90" cy="312.40" r="4.3" fill="#c000c0" stroke="#000" stroke-width="1.5"/>
<rect x="1198.25" y="445.15" width="14.5" height="14.5" fill="none" stroke="#ffffff" stroke-width="1.4"/>
<circle cx="1199.00" cy="452.50" r="4.3" fill="#0000c0" stroke="#000" stroke-width="1.5"/>
<rect x="1403.30" y="550.40" width="251.30" height="26.20" fill="#2b2b2b" />
<text x="1404.00" y="572.00" font-size="20" fill="#ffffff" textLength="155.6" lengthAdjust="spacingAndGlyphs">Gamut Coverage:</text>
<text x="1570.80" y="572.00" font-size="20" fill="#ffffff" textLength="54.5" lengthAdjust="spacingAndGlyphs">99,8%</text>
<text x="15.00" y="684.70" font-size="30" fill="#f0f0f0" textLength="219" lengthAdjust="spacingAndGlyphs">Current Reading</text>
<text x="15.00" y="753.40" font-size="25" fill="#f0f0f0" textLength="102" lengthAdjust="spacingAndGlyphs">x: 0,3123</text>
<text x="171.80" y="753.40" font-size="25" fill="#f0f0f0" textLength="102.7" lengthAdjust="spacingAndGlyphs">y: 0,3318</text>
<text x="15.00" y="794.00" font-size="25" fill="#f0f0f0" textLength="111" lengthAdjust="spacingAndGlyphs">fL: 154,34</text>
<text x="15.00" y="834.60" font-size="25" fill="#f0f0f0" textLength="158.7" lengthAdjust="spacingAndGlyphs">cd/m²: 528,82</text>
<text x="467.00" y="651.50" font-size="13" fill="#dddddd" text-anchor="middle" textLength="83" lengthAdjust="spacingAndGlyphs">RGB Balance</text>
<rect x="357.00" y="656.30" width="250.20" height="180.20" fill="#232323" />
<line x1="357.00" y1="675.20" x2="607.20" y2="675.20" stroke="#8c8c8c" stroke-width="1.5" />
<line x1="352.00" y1="675.20" x2="357.00" y2="675.20" stroke="#dddddd" stroke-width="1.5" />
<text x="351.00" y="680.20" font-size="14" fill="#dddddd" text-anchor="end">104</text>
<line x1="357.00" y1="712.20" x2="607.20" y2="712.20" stroke="#8c8c8c" stroke-width="1.5" />
<line x1="352.00" y1="712.20" x2="357.00" y2="712.20" stroke="#dddddd" stroke-width="1.5" />
<text x="351.00" y="717.20" font-size="14" fill="#dddddd" text-anchor="end">102</text>
<line x1="357.00" y1="747.70" x2="607.20" y2="747.70" stroke="#8c8c8c" stroke-width="1.5" />
<line x1="352.00" y1="747.70" x2="357.00" y2="747.70" stroke="#dddddd" stroke-width="1.5" />
<text x="351.00" y="752.70" font-size="14" fill="#dddddd" text-anchor="end">100</text>
<line x1="357.00" y1="783.60" x2="607.20" y2="783.60" stroke="#8c8c8c" stroke-width="1.5" />
<line x1="352.00" y1="783.60" x2="357.00" y2="783.60" stroke="#dddddd" stroke-width="1.5" />
<text x="351.00" y="788.60" font-size="14" fill="#dddddd" text-anchor="end">98</text>
<line x1="357.00" y1="819.90" x2="607.20" y2="819.90" stroke="#8c8c8c" stroke-width="1.5" />
<line x1="352.00" y1="819.90" x2="357.00" y2="819.90" stroke="#dddddd" stroke-width="1.5" />
<text x="351.00" y="824.90" font-size="14" fill="#dddddd" text-anchor="end">96</text>
<rect x="382.20" y="762.80" width="65.30" height="73.70" fill="url(#g19)" stroke="#000" stroke-width="2"/>
<rect x="447.50" y="742.40" width="66.10" height="94.10" fill="url(#g20)" stroke="#000" stroke-width="2"/>
<rect x="513.60" y="759.80" width="66.80" height="76.70" fill="url(#g21)" stroke="#000" stroke-width="2"/>
<rect x="357" y="656.3" width="250.20" height="180.20" fill="none" stroke="#8c8c8c" stroke-width="1.5"/>
<line x1="357.00" y1="836.50" x2="357.00" y2="842.50" stroke="#dddddd" stroke-width="1.5" />
<line x1="607.20" y1="836.50" x2="607.20" y2="842.50" stroke="#dddddd" stroke-width="1.5" />
<text x="482.00" y="855.00" font-size="14" fill="#dddddd" text-anchor="middle">100W</text>
<text x="808.00" y="643.00" font-size="14" fill="#dddddd" text-anchor="middle" textLength="76" lengthAdjust="spacingAndGlyphs">CIE 1931 xy</text>
<g clip-path="url(#xyclip)">
<rect x="637.30" y="648" width="341.50" height="5" fill="url(#x0)"/>
<rect x="637.30" y="652" width="341.50" height="5" fill="url(#x1)"/>
<rect x="637.30" y="656" width="341.50" height="5" fill="url(#x2)"/>
<rect x="637.30" y="660" width="341.50" height="5" fill="url(#x3)"/>
<rect x="637.30" y="664" width="341.50" height="5" fill="url(#x4)"/>
<rect x="637.30" y="668" width="341.50" height="5" fill="url(#x5)"/>
<rect x="637.30" y="672" width="341.50" height="5" fill="url(#x6)"/>
<rect x="637.30" y="676" width="341.50" height="5" fill="url(#x7)"/>
<rect x="637.30" y="680" width="341.50" height="5" fill="url(#x8)"/>
<rect x="637.30" y="684" width="341.50" height="5" fill="url(#x9)"/>
<rect x="637.30" y="688" width="341.50" height="5" fill="url(#x10)"/>
<rect x="637.30" y="692" width="341.50" height="5" fill="url(#x11)"/>
<rect x="637.30" y="696" width="341.50" height="5" fill="url(#x12)"/>
<rect x="637.30" y="700" width="341.50" height="5" fill="url(#x13)"/>
<rect x="637.30" y="704" width="341.50" height="5" fill="url(#x14)"/>
<rect x="637.30" y="708" width="341.50" height="5" fill="url(#x15)"/>
<rect x="637.30" y="712" width="341.50" height="5" fill="url(#x16)"/>
<rect x="637.30" y="716" width="341.50" height="5" fill="url(#x17)"/>
<rect x="637.30" y="720" width="341.50" height="5" fill="url(#x18)"/>
<rect x="637.30" y="724" width="341.50" height="5" fill="url(#x19)"/>
<rect x="637.30" y="728" width="341.50" height="5" fill="url(#x20)"/>
<rect x="637.30" y="732" width="341.50" height="5" fill="url(#x21)"/>
<rect x="637.30" y="736" width="341.50" height="5" fill="url(#x22)"/>
<rect x="637.30" y="740" width="341.50" height="5" fill="url(#x23)"/>
<rect x="637.30" y="744" width="341.50" height="5" fill="url(#x24)"/>
<rect x="637.30" y="748" width="341.50" height="5" fill="url(#x25)"/>
<rect x="637.30" y="752" width="341.50" height="5" fill="url(#x26)"/>
<rect x="637.30" y="756" width="341.50" height="5" fill="url(#x27)"/>
<rect x="637.30" y="760" width="341.50" height="5" fill="url(#x28)"/>
<rect x="637.30" y="764" width="341.50" height="5" fill="url(#x29)"/>
<rect x="637.30" y="768" width="341.50" height="5" fill="url(#x30)"/>
<rect x="637.30" y="772" width="341.50" height="5" fill="url(#x31)"/>
<rect x="637.30" y="776" width="341.50" height="5" fill="url(#x32)"/>
<rect x="637.30" y="780" width="341.50" height="5" fill="url(#x33)"/>
<rect x="637.30" y="784" width="341.50" height="5" fill="url(#x34)"/>
<rect x="637.30" y="788" width="341.50" height="5" fill="url(#x35)"/>
<rect x="637.30" y="792" width="341.50" height="5" fill="url(#x36)"/>
<rect x="637.30" y="796" width="341.50" height="5" fill="url(#x37)"/>
<rect x="637.30" y="800" width="341.50" height="5" fill="url(#x38)"/>
<rect x="637.30" y="804" width="341.50" height="5" fill="url(#x39)"/>
<rect x="637.30" y="808" width="341.50" height="5" fill="url(#x40)"/>
<rect x="637.30" y="812" width="341.50" height="5" fill="url(#x41)"/>
<rect x="637.30" y="816" width="341.50" height="5" fill="url(#x42)"/>
<rect x="637.30" y="820" width="341.50" height="5" fill="url(#x43)"/>
<rect x="637.30" y="824" width="341.50" height="5" fill="url(#x44)"/>
<rect x="637.30" y="828" width="341.50" height="5" fill="url(#x45)"/>
<rect x="637.30" y="832" width="341.50" height="5" fill="url(#x46)"/>
<rect x="637.30" y="836" width="341.50" height="5" fill="url(#x47)"/>
<rect x="637.30" y="840" width="341.50" height="5" fill="url(#x48)"/>
<rect x="637.30" y="844" width="341.50" height="5" fill="url(#x49)"/>
<rect x="637.30" y="848" width="341.50" height="5" fill="url(#x50)"/>
</g>
<rect x="637.3" y="648.4" width="341.5" height="198.6" fill="none" stroke="#8c8c8c" stroke-width="1.5"/>
<circle cx="804.8" cy="734.3" r="4.5" fill="none" stroke="#000" stroke-width="1.5"/>
<rect x="800.4" y="739.7" width="14" height="14" fill="none" stroke="#000" stroke-width="1.8"/>
<rect x="995.00" y="632.00" width="653.50" height="225.50" fill="#0e0e0e" />
<rect x="997.00" y="634.00" width="649.50" height="34.00" fill="#2b2b2b" />
<rect x="997.00" y="650.00" width="635.00" height="16.70" fill="#161616" />
<g clip-path="url(#tclip)">
<rect x="997.00" y="666.70" width="633.00" height="31.10" fill="#3b3b3b" />
<text x="1009.50" y="689.70" font-size="19" fill="#f2f2f2" font-weight="bold" textLength="63" lengthAdjust="spacingAndGlyphs">x: CIE31</text>
<text x="1093.70" y="689.70" font-size="19" fill="#f2f2f2" textLength="50.5" lengthAdjust="spacingAndGlyphs">0,3124</text>
<text x="1171.70" y="689.70" font-size="19" fill="#f2f2f2" textLength="50.5" lengthAdjust="spacingAndGlyphs">0,6520</text>
<text x="1240.00" y="689.70" font-size="19" fill="#f2f2f2" textLength="50.5" lengthAdjust="spacingAndGlyphs">0,3003</text>
<text x="1318.00" y="689.70" font-size="19" fill="#f2f2f2" textLength="50.5" lengthAdjust="spacingAndGlyphs">0,1454</text>
<text x="1386.30" y="689.70" font-size="19" fill="#f2f2f2" textLength="50.5" lengthAdjust="spacingAndGlyphs">0,2227</text>
<text x="1463.60" y="689.70" font-size="19" fill="#f2f2f2" textLength="50.5" lengthAdjust="spacingAndGlyphs">0,3206</text>
<text x="1534.70" y="689.70" font-size="19" fill="#f2f2f2" textLength="50.5" lengthAdjust="spacingAndGlyphs">0,4215</text>
<text x="1612.80" y="689.70" font-size="19" fill="#f2f2f2" textLength="22.75" lengthAdjust="spacingAndGlyphs">0,3</text>
<rect x="997.00" y="697.80" width="633.00" height="31.10" fill="#7b7b7b" />
<text x="1009.50" y="720.80" font-size="19" fill="#f2f2f2" font-weight="bold" textLength="63" lengthAdjust="spacingAndGlyphs">y: CIE31</text>
<text x="1093.70" y="720.80" font-size="19" fill="#f2f2f2" textLength="50.5" lengthAdjust="spacingAndGlyphs">0,3321</text>
<text x="1171.70" y="720.80" font-size="19" fill="#f2f2f2" textLength="50.5" lengthAdjust="spacingAndGlyphs">0,3307</text>
<text x="1240.00" y="720.80" font-size="19" fill="#f2f2f2" textLength="50.5" lengthAdjust="spacingAndGlyphs">0,6086</text>
<text x="1318.00" y="720.80" font-size="19" fill="#f2f2f2" textLength="50.5" lengthAdjust="spacingAndGlyphs">0,0605</text>
<text x="1386.30" y="720.80" font-size="19" fill="#f2f2f2" textLength="50.5" lengthAdjust="spacingAndGlyphs">0,3327</text>
<text x="1463.60" y="720.80" font-size="19" fill="#f2f2f2" textLength="50.5" lengthAdjust="spacingAndGlyphs">0,1538</text>
<text x="1534.70" y="720.80" font-size="19" fill="#f2f2f2" textLength="50.5" lengthAdjust="spacingAndGlyphs">0,5100</text>
<text x="1612.80" y="720.80" font-size="19" fill="#f2f2f2" textLength="22.75" lengthAdjust="spacingAndGlyphs">0,3</text>
<rect x="997.00" y="728.90" width="633.00" height="31.10" fill="#3b3b3b" />
<text x="1009.50" y="751.90" font-size="19" fill="#f2f2f2" font-weight="bold" textLength="11" lengthAdjust="spacingAndGlyphs">Y</text>
<text x="1093.70" y="751.90" font-size="19" fill="#f2f2f2" textLength="69.0" lengthAdjust="spacingAndGlyphs">278,7300</text>
<text x="1171.70" y="751.90" font-size="19" fill="#f2f2f2" textLength="59.75" lengthAdjust="spacingAndGlyphs">58,0872</text>
<text x="1240.00" y="751.90" font-size="19" fill="#f2f2f2" textLength="69.0" lengthAdjust="spacingAndGlyphs">200,4729</text>
<text x="1318.00" y="751.90" font-size="19" fill="#f2f2f2" textLength="59.75" lengthAdjust="spacingAndGlyphs">19,9849</text>
<text x="1386.30" y="751.90" font-size="19" fill="#f2f2f2" textLength="69.0" lengthAdjust="spacingAndGlyphs">219,5277</text>
<text x="1463.60" y="751.90" font-size="19" fill="#f2f2f2" textLength="59.75" lengthAdjust="spacingAndGlyphs">78,1279</text>
<text x="1534.70" y="751.90" font-size="19" fill="#f2f2f2" textLength="69.0" lengthAdjust="spacingAndGlyphs">259,8554</text>
<text x="1612.80" y="751.90" font-size="19" fill="#f2f2f2" textLength="18.5" lengthAdjust="spacingAndGlyphs">52</text>
<rect x="997.00" y="760.00" width="633.00" height="31.10" fill="#7b7b7b" />
<text x="1009.50" y="783.00" font-size="19" fill="#f2f2f2" font-weight="bold" textLength="65" lengthAdjust="spacingAndGlyphs">Target Y</text>
<text x="1093.70" y="783.00" font-size="19" fill="#f2f2f2" textLength="69.0" lengthAdjust="spacingAndGlyphs">275,5143</text>
<text x="1171.70" y="783.00" font-size="19" fill="#f2f2f2" textLength="59.75" lengthAdjust="spacingAndGlyphs">58,5898</text>
<text x="1240.00" y="783.00" font-size="19" fill="#f2f2f2" textLength="69.0" lengthAdjust="spacingAndGlyphs">197,0364</text>
<text x="1318.00" y="783.00" font-size="19" fill="#f2f2f2" textLength="59.75" lengthAdjust="spacingAndGlyphs">19,8882</text>
<text x="1386.30" y="783.00" font-size="19" fill="#f2f2f2" textLength="69.0" lengthAdjust="spacingAndGlyphs">216,9245</text>
<text x="1463.60" y="783.00" font-size="19" fill="#f2f2f2" textLength="59.75" lengthAdjust="spacingAndGlyphs">78,4779</text>
<text x="1534.70" y="783.00" font-size="19" fill="#f2f2f2" textLength="69.0" lengthAdjust="spacingAndGlyphs">255,6261</text>
<text x="1612.80" y="783.00" font-size="19" fill="#f2f2f2" textLength="18.5" lengthAdjust="spacingAndGlyphs">52</text>
<rect x="997.00" y="791.10" width="633.00" height="31.10" fill="#3b3b3b" />
<text x="1009.50" y="814.10" font-size="19" fill="#f2f2f2" font-weight="bold" textLength="67" lengthAdjust="spacingAndGlyphs">ΔE 2000</text>
<text x="1093.70" y="814.10" font-size="19" fill="#f2f2f2" textLength="50.5" lengthAdjust="spacingAndGlyphs">2,1544</text>
<text x="1171.70" y="814.10" font-size="19" fill="#f2f2f2" textLength="50.5" lengthAdjust="spacingAndGlyphs">2,1013</text>
<text x="1240.00" y="814.10" font-size="19" fill="#f2f2f2" textLength="50.5" lengthAdjust="spacingAndGlyphs">0,8134</text>
<text x="1318.00" y="814.10" font-size="19" fill="#f2f2f2" textLength="50.5" lengthAdjust="spacingAndGlyphs">1,2142</text>
<text x="1386.30" y="814.10" font-size="19" fill="#f2f2f2" textLength="50.5" lengthAdjust="spacingAndGlyphs">1,2124</text>
<text x="1463.60" y="814.10" font-size="19" fill="#f2f2f2" textLength="50.5" lengthAdjust="spacingAndGlyphs">0,0960</text>
<text x="1534.70" y="814.10" font-size="19" fill="#f2f2f2" textLength="50.5" lengthAdjust="spacingAndGlyphs">0,8102</text>
<text x="1612.80" y="814.10" font-size="19" fill="#f2f2f2" textLength="22.75" lengthAdjust="spacingAndGlyphs">2,5</text>
<rect x="997.00" y="822.20" width="633.00" height="31.10" fill="#7b7b7b" />
<text x="1009.50" y="845.20" font-size="19" fill="#f2f2f2" font-weight="bold" textLength="57" lengthAdjust="spacingAndGlyphs">ΔE ITP</text>
<text x="1093.70" y="845.20" font-size="19" fill="#f2f2f2" textLength="50.5" lengthAdjust="spacingAndGlyphs">1,7501</text>
<text x="1171.70" y="845.20" font-size="19" fill="#f2f2f2" textLength="59.75" lengthAdjust="spacingAndGlyphs">11,5782</text>
<text x="1240.00" y="845.20" font-size="19" fill="#f2f2f2" textLength="50.5" lengthAdjust="spacingAndGlyphs">4,3237</text>
<text x="1318.00" y="845.20" font-size="19" fill="#f2f2f2" textLength="59.75" lengthAdjust="spacingAndGlyphs">11,3677</text>
<text x="1386.30" y="845.20" font-size="19" fill="#f2f2f2" textLength="50.5" lengthAdjust="spacingAndGlyphs">2,3858</text>
<text x="1463.60" y="845.20" font-size="19" fill="#f2f2f2" textLength="50.5" lengthAdjust="spacingAndGlyphs">0,3611</text>
<text x="1534.70" y="845.20" font-size="19" fill="#f2f2f2" textLength="50.5" lengthAdjust="spacingAndGlyphs">4,0284</text>
<text x="1612.80" y="845.20" font-size="19" fill="#f2f2f2" textLength="22.75" lengthAdjust="spacingAndGlyphs">1,5</text>
<text x="1107.50" y="657.00" font-size="17" fill="#f2f2f2" textLength="41.5" lengthAdjust="spacingAndGlyphs">White</text>
<text x="1188.30" y="657.00" font-size="17" fill="#f2f2f2" textLength="26" lengthAdjust="spacingAndGlyphs">Red</text>
<text x="1252.00" y="657.00" font-size="17" fill="#f2f2f2" textLength="43.5" lengthAdjust="spacingAndGlyphs">Green</text>
<text x="1332.00" y="657.00" font-size="17" fill="#f2f2f2" textLength="30.8" lengthAdjust="spacingAndGlyphs">Blue</text>
<text x="1403.40" y="657.00" font-size="17" fill="#f2f2f2" textLength="33.8" lengthAdjust="spacingAndGlyphs">Cyan</text>
<text x="1464.40" y="657.00" font-size="17" fill="#f2f2f2" textLength="61.4" lengthAdjust="spacingAndGlyphs">Magenta</text>
<text x="1547.00" y="657.00" font-size="17" fill="#f2f2f2" textLength="44.6" lengthAdjust="spacingAndGlyphs">Yellow</text>
<text x="1625.50" y="657.00" font-size="17" fill="#f2f2f2" clip-path="url(#hclip)">100W</text>
</g>
<rect x="1630.00" y="666.70" width="17.00" height="170.00" fill="#2b2b2b" />
<rect x="1631" y="667.5" width="15.5" height="168" rx="3" fill="#484848"/>
<rect x="1632.5" y="689" width="12.5" height="105" rx="6" fill="#363636"/>
<rect x="1632" y="668.5" width="13.5" height="17" rx="3" fill="#5e5e5e"/>
<path d="M1634 679.5 L1638.75 674.5 L1643.5 679.5 Z" fill="#333"/>
<rect x="1632" y="817.5" width="13.5" height="17" rx="3" fill="#5e5e5e"/>
<path d="M1634 823 L1638.75 828 L1643.5 823 Z" fill="#333"/>
<rect x="996.00" y="837.20" width="636.00" height="20.00" fill="#2b2b2b" />
<rect x="996.5" y="837.5" width="635" height="19" rx="3" fill="#484848"/>
<rect x="1016" y="839.5" width="547" height="15" rx="7.5" fill="#383838"/>
<rect x="998" y="839" width="14" height="16" rx="3" fill="#5e5e5e"/>
<path d="M1008.2 841.5 L1003 847 L1008.2 852.5 Z" fill="#333"/>
<rect x="1614" y="839" width="14" height="16" rx="3" fill="#5e5e5e"/>
<path d="M1618 841.5 L1623.2 847 L1618 852.5 Z" fill="#333"/>
<rect x="1.50" y="870.7" width="155.5" height="76" rx="4" fill="url(#g22)"/>
<rect x="8.00" y="877.3" width="142.5" height="44.7" rx="4.5" fill="#c0c0c0" stroke="#8a8a8a" stroke-width="1.5"/>
<text x="79.20" y="940.80" font-size="13" fill="#262626" text-anchor="middle" font-weight="bold">White</text>
<rect x="159.50" y="870.7" width="155.5" height="76" rx="4" fill="url(#g22)"/>
<rect x="166.00" y="877.3" width="142.5" height="44.7" rx="4.5" fill="#c00000" stroke="#8a8a8a" stroke-width="1.5"/>
<text x="237.20" y="940.80" font-size="13" fill="#262626" text-anchor="middle" font-weight="bold">Red</text>
<rect x="317.50" y="870.7" width="155.5" height="76" rx="4" fill="url(#g22)"/>
<rect x="324.00" y="877.3" width="142.5" height="44.7" rx="4.5" fill="#00c000" stroke="#8a8a8a" stroke-width="1.5"/>
<text x="395.20" y="940.80" font-size="13" fill="#262626" text-anchor="middle" font-weight="bold">Green</text>
<rect x="475.50" y="870.7" width="155.5" height="76" rx="4" fill="url(#g22)"/>
<rect x="482.00" y="877.3" width="142.5" height="44.7" rx="4.5" fill="#0000c0" stroke="#8a8a8a" stroke-width="1.5"/>
<text x="553.20" y="940.80" font-size="13" fill="#262626" text-anchor="middle" font-weight="bold">Blue</text>
<rect x="633.50" y="870.7" width="155.5" height="76" rx="4" fill="url(#g22)"/>
<rect x="640.00" y="877.3" width="142.5" height="44.7" rx="4.5" fill="#00c0c0" stroke="#8a8a8a" stroke-width="1.5"/>
<text x="711.20" y="940.80" font-size="13" fill="#262626" text-anchor="middle" font-weight="bold">Cyan</text>
<rect x="791.50" y="870.7" width="155.5" height="76" rx="4" fill="url(#g22)"/>
<rect x="798.00" y="877.3" width="142.5" height="44.7" rx="4.5" fill="#c000c0" stroke="#8a8a8a" stroke-width="1.5"/>
<text x="869.20" y="940.80" font-size="13" fill="#262626" text-anchor="middle" font-weight="bold">Magenta</text>
<rect x="949.50" y="870.7" width="155.5" height="76" rx="4" fill="url(#g22)"/>
<rect x="956.00" y="877.3" width="142.5" height="44.7" rx="4.5" fill="#c0c000" stroke="#8a8a8a" stroke-width="1.5"/>
<text x="1027.20" y="940.80" font-size="13" fill="#262626" text-anchor="middle" font-weight="bold">Yellow</text>
<rect x="1107.50" y="870.7" width="155.5" height="76" rx="4" fill="#282828"/>
<rect x="1113.70" y="876.7" width="143" height="45.3" rx="5" fill="#ffffff"/>
<text x="1185.20" y="940.80" font-size="13" fill="#ffffff" text-anchor="middle" font-weight="bold">100W</text>
<rect x="1266.5" y="870.5" width="59.5" height="23" rx="3" fill="url(#g23)"/>
<rect x="1266.5" y="894.5" width="59.5" height="52" rx="3" fill="url(#g24)"/>
<circle cx="1296" cy="880.5" r="10" fill="url(#g25)" opacity="0.8"/>
<path d="M1290 884 L1296 878 L1302 884 Z" fill="#1e1e1e"/>
<rect x="1277.5" y="901.5" width="37" height="37" rx="5" fill="#999" stroke="#161616" stroke-width="3"/>
<rect x="1288" y="912" width="17" height="17" fill="#000"/>
<rect x="1327.30" y="870" width="56.80" height="37.5" rx="2" fill="url(#g26)"/>
<rect x="1385.30" y="870" width="54.50" height="37.5" rx="2" fill="url(#g26)"/>
<rect x="1441.00" y="870" width="55.60" height="37.5" rx="2" fill="url(#g26)"/>
<rect x="1497.80" y="870" width="55.30" height="37.5" rx="2" fill="url(#g26)"/>
<rect x="1554.30" y="870" width="54.50" height="37.5" rx="2" fill="url(#g26)"/>
<circle cx="1356.3" cy="889" r="12" fill="url(#g25)" opacity="0.8"/>
<circle cx="1413.2" cy="889" r="12" fill="url(#g25)" opacity="0.8"/>
<circle cx="1469.4" cy="889" r="12" fill="url(#g25)" opacity="0.8"/>
<circle cx="1526.0" cy="889" r="12" fill="url(#g25)" opacity="0.8"/>
<circle cx="1582.2" cy="889" r="12" fill="url(#g25)" opacity="0.8"/>
<rect x="1351.8" y="884.5" width="9" height="9" fill="#1e1e1e"/>
<path d="M1409.7 883 L1418.2 889 L1409.7 895 Z" fill="#1e1e1e"/>
<path d="M1464.4 883 h-2.5 v12 h2.5 M1474.4 883 h2.5 v12 h-2.5 M1466.4 889 h6" fill="none" stroke="#1e1e1e" stroke-width="2"/>
<path d="M1526.0 889 C1523.0 884 1518.0 884 1518.0 889 C1518.0 894 1523.0 894 1526.0 889 C1529.0 884 1534.0 884 1534.0 889 C1534.0 894 1529.0 894 1526.0 889Z" fill="none" stroke="#1e1e1e" stroke-width="2.2"/>
<path d="M1576.2 887 A6.5 6.5 0 0 1 1587.2 884 M1588.2 891 A6.5 6.5 0 0 1 1577.2 894" fill="none" stroke="#1e1e1e" stroke-width="2.2"/>
<path d="M1584.2 882 L1589.2 882 L1588.2 887 Z M1580.2 896 L1575.2 896 L1576.2 891 Z" fill="#1e1e1e"/>
<rect x="1327.3" y="909" width="169.3" height="37.5" rx="2" fill="url(#g26)"/>
<rect x="1499" y="909" width="175" height="37.5" rx="2" fill="url(#g26)"/>
<circle cx="1366" cy="928" r="12.5" fill="url(#g25)" opacity="0.8"/>
<circle cx="1632.5" cy="928" r="12.5" fill="url(#g25)" opacity="0.8"/>
<path d="M1369 922 L1363.5 928 L1369 934 M1365 922 L1359.5 928 L1365 934" fill="none" stroke="#1e1e1e" stroke-width="1.8"/>
<path d="M1629.5 922 L1635 928 L1629.5 934 M1633.5 922 L1639 928 L1633.5 934" fill="none" stroke="#1e1e1e" stroke-width="1.8"/>
<text x="1400.00" y="937.70" font-size="26" fill="#2e2e2e" textLength="62.6" lengthAdjust="spacingAndGlyphs" stroke="#2e2e2e" stroke-width="0.7">Back</text>
<text x="1533.00" y="937.70" font-size="26" fill="#2e2e2e" textLength="64.7" lengthAdjust="spacingAndGlyphs" stroke="#2e2e2e" stroke-width="0.7">Next</text>
<g transform="translate(1638.5 888.5)" stroke="#1a1a1a" stroke-width="8.5" stroke-linecap="round" opacity="0.6"><path d="M0 -13 V13 M-11.3 -6.5 L11.3 6.5 M-11.3 6.5 L11.3 -6.5"/></g>
<g transform="translate(1637.5 887.4)" stroke="#e00c0c" stroke-width="7" stroke-linecap="round"><path d="M0 -13 V13 M-11.3 -6.5 L11.3 6.5 M-11.3 6.5 L11.3 -6.5"/></g>
</svg></body></html>
